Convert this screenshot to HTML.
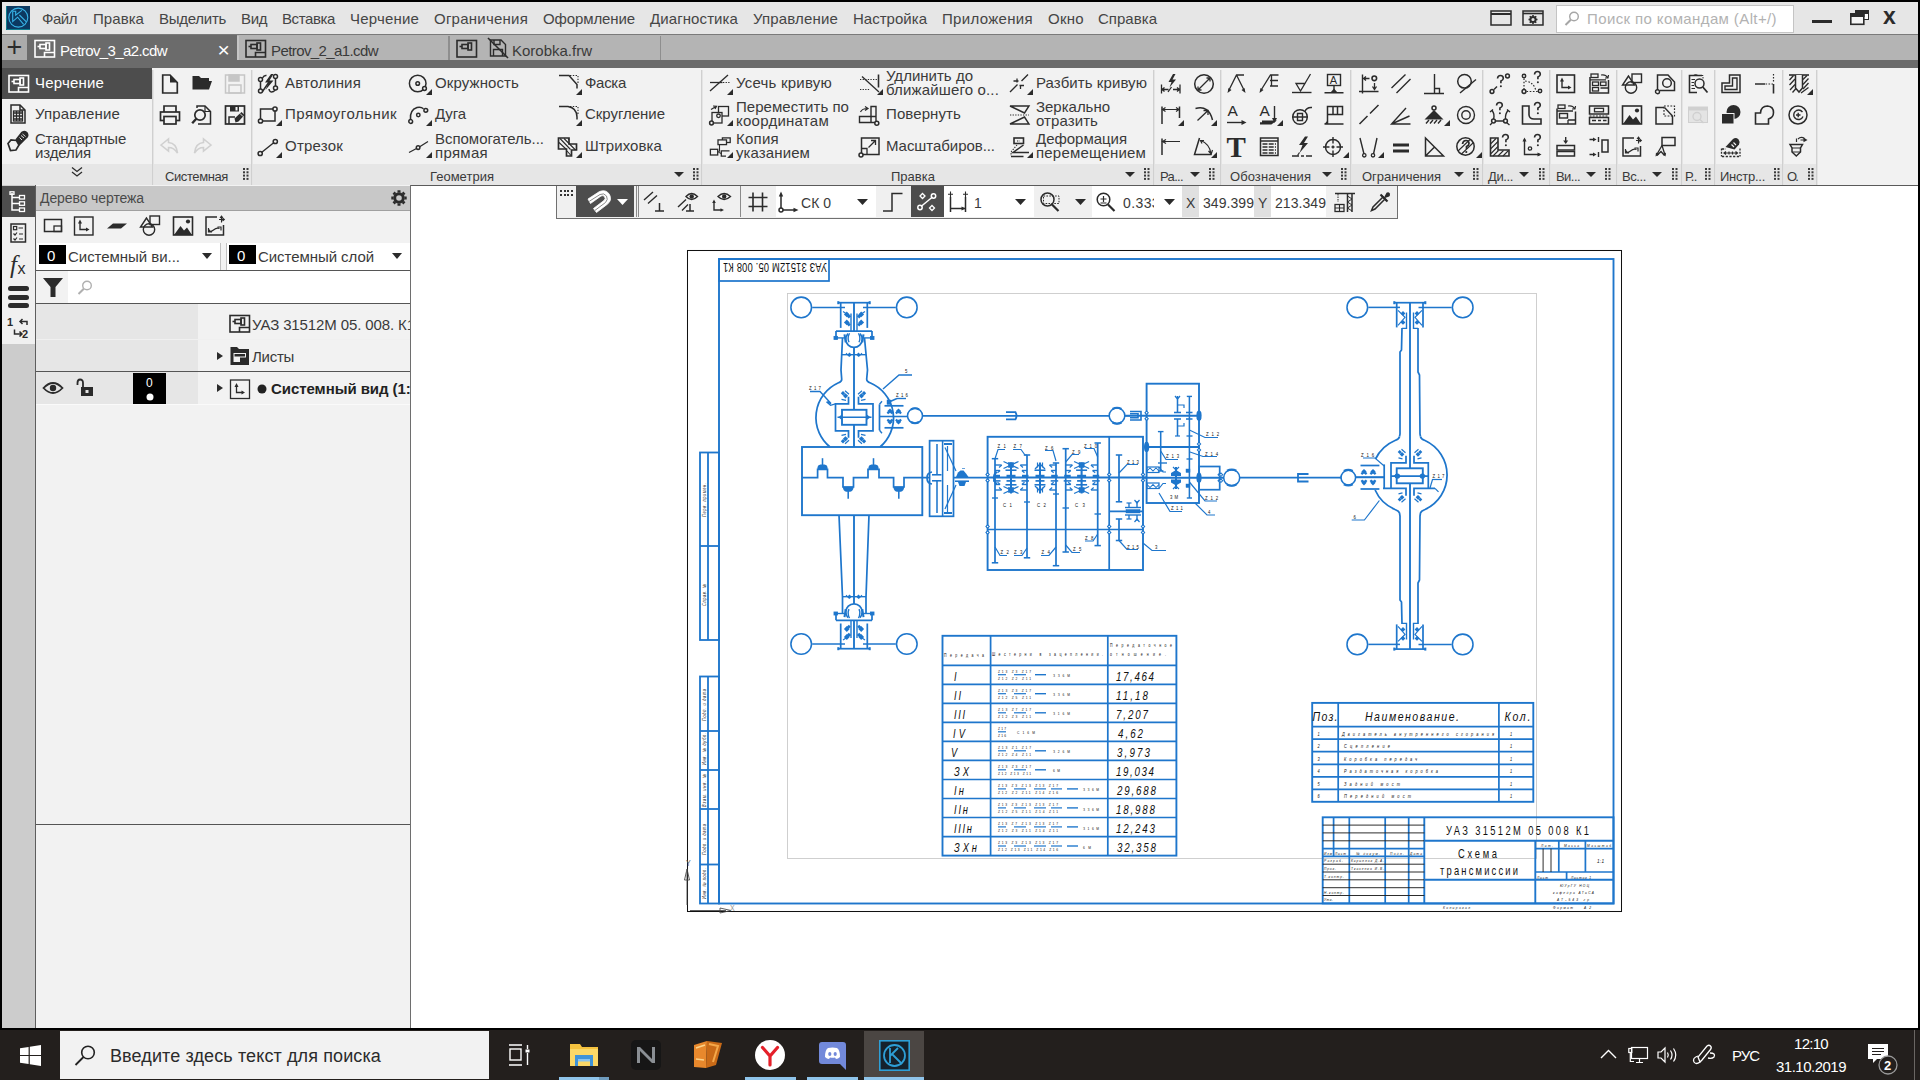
<!DOCTYPE html>
<html lang="ru"><head><meta charset="utf-8"><title>КОМПАС-3D</title>
<style>
html,body{margin:0;padding:0;}
body{width:1920px;height:1080px;overflow:hidden;background:#fff;position:relative;font-family:"Liberation Sans",sans-serif;}
.a{position:absolute;display:block;}
.t{white-space:nowrap;}
svg{overflow:visible;}
.k{fill:none;stroke:#2b2b2b;stroke-width:1.5;}
.kf{fill:#2b2b2b;stroke:none;}
.g{fill:none;stroke:#c4c4c4;stroke-width:1.5;}
.b{fill:none;stroke:#1e78c8;stroke-width:2;}
.b1{fill:none;stroke:#1e78c8;stroke-width:1;}
.bf{fill:#1e78c8;stroke:none;}
</style></head><body>
<div class="a" style="left:0px;top:0px;width:1920px;height:1030px;background:#000;"></div>
<div class="a" style="left:2px;top:2px;width:1916px;height:32px;background:#e6e6e6;"></div>
<div class="a" style="left:2px;top:34px;width:1916px;height:1px;background:#7a7a7a;"></div>
<div class="a" style="left:2px;top:35px;width:1916px;height:25px;background:#b4b4b4;"></div>
<div class="a" style="left:2px;top:60px;width:1916px;height:8px;background:#6b6b6b;"></div>
<div class="a" style="left:2px;top:35px;width:25px;height:25px;background:#ababab;"></div>
<div class="a" style="left:27px;top:35px;width:210px;height:25px;background:#6b6b6b;"></div>
<div class="a" style="left:237px;top:36px;width:2px;height:24px;background:#c6c6c6;"></div>
<div class="a" style="left:448px;top:36px;width:2px;height:24px;background:#8e8e8e;"></div>
<div class="a" style="left:660px;top:36px;width:1px;height:24px;background:#8e8e8e;"></div>
<div class="a" style="left:2px;top:68px;width:1916px;height:117px;background:#f2f2f2;"></div>
<div class="a" style="left:2px;top:164px;width:1814px;height:21px;background:#e6e6e6;"></div>
<div class="a" style="left:2px;top:68px;width:150px;height:31px;background:#4d4d4d;"></div>
<div class="a" style="left:2px;top:185px;width:1916px;height:1px;background:#5a5a5a;"></div>
<div class="a" style="left:152px;top:70px;width:1px;height:115px;background:#d0d0d0;"></div>
<div class="a" style="left:153px;top:70px;width:1px;height:115px;background:#e4e4e4;"></div>
<div class="a" style="left:251px;top:70px;width:1px;height:115px;background:#d0d0d0;"></div>
<div class="a" style="left:252px;top:70px;width:1px;height:115px;background:#e4e4e4;"></div>
<div class="a" style="left:701px;top:70px;width:1px;height:115px;background:#d0d0d0;"></div>
<div class="a" style="left:702px;top:70px;width:1px;height:115px;background:#e4e4e4;"></div>
<div class="a" style="left:1153px;top:70px;width:1px;height:115px;background:#d0d0d0;"></div>
<div class="a" style="left:1154px;top:70px;width:1px;height:115px;background:#e4e4e4;"></div>
<div class="a" style="left:1220px;top:70px;width:1px;height:115px;background:#d0d0d0;"></div>
<div class="a" style="left:1221px;top:70px;width:1px;height:115px;background:#e4e4e4;"></div>
<div class="a" style="left:1350px;top:70px;width:1px;height:115px;background:#d0d0d0;"></div>
<div class="a" style="left:1351px;top:70px;width:1px;height:115px;background:#e4e4e4;"></div>
<div class="a" style="left:1482px;top:70px;width:1px;height:115px;background:#d0d0d0;"></div>
<div class="a" style="left:1483px;top:70px;width:1px;height:115px;background:#e4e4e4;"></div>
<div class="a" style="left:1549px;top:70px;width:1px;height:115px;background:#d0d0d0;"></div>
<div class="a" style="left:1550px;top:70px;width:1px;height:115px;background:#e4e4e4;"></div>
<div class="a" style="left:1616px;top:70px;width:1px;height:115px;background:#d0d0d0;"></div>
<div class="a" style="left:1617px;top:70px;width:1px;height:115px;background:#e4e4e4;"></div>
<div class="a" style="left:1681px;top:70px;width:1px;height:115px;background:#d0d0d0;"></div>
<div class="a" style="left:1682px;top:70px;width:1px;height:115px;background:#e4e4e4;"></div>
<div class="a" style="left:1714px;top:70px;width:1px;height:115px;background:#d0d0d0;"></div>
<div class="a" style="left:1715px;top:70px;width:1px;height:115px;background:#e4e4e4;"></div>
<div class="a" style="left:1782px;top:70px;width:1px;height:115px;background:#d0d0d0;"></div>
<div class="a" style="left:1783px;top:70px;width:1px;height:115px;background:#e4e4e4;"></div>
<div class="a" style="left:1816px;top:70px;width:1px;height:115px;background:#d0d0d0;"></div>
<div class="a" style="left:1817px;top:70px;width:1px;height:115px;background:#e4e4e4;"></div>
<div class="a" style="left:2px;top:186px;width:1916px;height:842px;background:#ffffff;"></div>
<div class="a" style="left:2px;top:185px;width:33px;height:843px;background:#cccccc;"></div>
<div class="a" style="left:2px;top:186px;width:33px;height:31px;background:#4d4d4d;"></div>
<div class="a" style="left:2px;top:217px;width:33px;height:127px;background:#f0f0f0;"></div>
<div class="a" style="left:35px;top:185px;width:1px;height:843px;background:#5e5e5e;"></div>
<div class="a" style="left:36px;top:185px;width:374px;height:843px;background:#f2f2f2;"></div>
<div class="a" style="left:410px;top:185px;width:1px;height:843px;background:#6e6e6e;"></div>
<div class="a" style="left:36px;top:186px;width:374px;height:24px;background:#c8c8c8;"></div>
<div class="a" style="left:36px;top:210px;width:374px;height:1px;background:#a0a0a0;"></div>
<div class="a" style="left:37px;top:243px;width:183px;height:27px;background:#ffffff;"></div>
<div class="a" style="left:227px;top:243px;width:183px;height:27px;background:#ffffff;"></div>
<div class="a" style="left:220px;top:243px;width:1px;height:27px;background:#c0c0c0;"></div>
<div class="a" style="left:226px;top:243px;width:1px;height:27px;background:#c0c0c0;"></div>
<div class="a" style="left:39px;top:245px;width:27px;height:19px;background:#000;"></div>
<div class="a" style="left:229px;top:245px;width:27px;height:19px;background:#000;"></div>
<div class="a" style="left:36px;top:270px;width:374px;height:1px;background:#555555;"></div>
<div class="a" style="left:68px;top:271px;width:342px;height:32px;background:#ffffff;"></div>
<div class="a" style="left:36px;top:303px;width:374px;height:1px;background:#555555;"></div>
<div class="a" style="left:36px;top:304px;width:162px;height:100px;background:#e6e6e6;"></div>
<div class="a" style="left:36px;top:339px;width:374px;height:1px;background:#f0f0f0;"></div>
<div class="a" style="left:36px;top:371px;width:374px;height:1px;background:#555555;"></div>
<div class="a" style="left:133px;top:373px;width:33px;height:31px;background:#000;"></div>
<div class="a" style="left:36px;top:404px;width:374px;height:1px;background:#fafafa;"></div>
<div class="a" style="left:36px;top:824px;width:374px;height:1px;background:#555555;"></div>
<div class="a" style="left:556px;top:186px;width:842px;height:33px;background:#707070;"></div>
<div class="a" style="left:557px;top:186px;width:840px;height:32px;background:#f0f0f0;"></div>
<div class="a" style="left:576px;top:186px;width:58px;height:31px;background:#4d4d4d;"></div>
<div class="a" style="left:636px;top:186px;width:1px;height:31px;background:#8a8a8a;"></div>
<div class="a" style="left:638px;top:186px;width:1px;height:31px;background:#8a8a8a;"></div>
<div class="a" style="left:740px;top:186px;width:1px;height:31px;background:#8a8a8a;"></div>
<div class="a" style="left:776px;top:186px;width:100px;height:31px;background:#ffffff;"></div>
<div class="a" style="left:911px;top:186px;width:33px;height:31px;background:#4d4d4d;"></div>
<div class="a" style="left:944px;top:186px;width:90px;height:31px;background:#ffffff;"></div>
<div class="a" style="left:1092px;top:186px;width:90px;height:31px;background:#ffffff;"></div>
<div class="a" style="left:1182px;top:186px;width:17px;height:31px;background:#e0e0e0;"></div>
<div class="a" style="left:1199px;top:186px;width:55px;height:31px;background:#ffffff;"></div>
<div class="a" style="left:1254px;top:186px;width:17px;height:31px;background:#e0e0e0;"></div>
<div class="a" style="left:1271px;top:186px;width:55px;height:31px;background:#ffffff;"></div>
<span class="a t " style="left:42px;top:9.0px;font-size:15px;line-height:19px;color:#454545;letter-spacing:-0.469px;">Файл</span>
<span class="a t " style="left:93px;top:9.0px;font-size:15px;line-height:19px;color:#454545;letter-spacing:0.055px;">Правка</span>
<span class="a t " style="left:159px;top:9.0px;font-size:15px;line-height:19px;color:#454545;letter-spacing:-0.273px;">Выделить</span>
<span class="a t " style="left:241px;top:9.0px;font-size:15px;line-height:19px;color:#454545;letter-spacing:-0.375px;">Вид</span>
<span class="a t " style="left:282px;top:9.0px;font-size:15px;line-height:19px;color:#454545;letter-spacing:-0.393px;">Вставка</span>
<span class="a t " style="left:350px;top:9.0px;font-size:15px;line-height:19px;color:#454545;letter-spacing:0.186px;">Черчение</span>
<span class="a t " style="left:434px;top:9.0px;font-size:15px;line-height:19px;color:#454545;letter-spacing:0.234px;">Ограничения</span>
<span class="a t " style="left:543px;top:9.0px;font-size:15px;line-height:19px;color:#454545;letter-spacing:-0.111px;">Оформление</span>
<span class="a t " style="left:650px;top:9.0px;font-size:15px;line-height:19px;color:#454545;letter-spacing:0.095px;">Диагностика</span>
<span class="a t " style="left:753px;top:9.0px;font-size:15px;line-height:19px;color:#454545;letter-spacing:0.161px;">Управление</span>
<span class="a t " style="left:853px;top:9.0px;font-size:15px;line-height:19px;color:#454545;letter-spacing:0.017px;">Настройка</span>
<span class="a t " style="left:942px;top:9.0px;font-size:15px;line-height:19px;color:#454545;letter-spacing:0.325px;">Приложения</span>
<span class="a t " style="left:1048px;top:9.0px;font-size:15px;line-height:19px;color:#454545;letter-spacing:0.285px;">Окно</span>
<span class="a t " style="left:1098px;top:9.0px;font-size:15px;line-height:19px;color:#454545;letter-spacing:0.022px;">Справка</span>
<span class="a t " style="left:60px;top:40.5px;font-size:15px;line-height:19px;color:#ffffff;letter-spacing:-0.595px;">Petrov_3_a2.cdw</span>
<span class="a t " style="left:271px;top:40.5px;font-size:15px;line-height:19px;color:#3a3a3a;letter-spacing:-0.595px;">Petrov_2_a1.cdw</span>
<span class="a t " style="left:512px;top:40.5px;font-size:15px;line-height:19px;color:#3a3a3a;letter-spacing:-0.004px;">Korobka.frw</span>
<span class="a t " style="left:35px;top:73.0px;font-size:15px;line-height:19px;color:#ffffff;letter-spacing:0.186px;">Черчение</span>
<span class="a t " style="left:35px;top:104.0px;font-size:15px;line-height:19px;color:#3a3a3a;letter-spacing:0.161px;">Управление</span>
<span class="a t " style="left:35px;top:128.5px;font-size:15px;line-height:19px;color:#3a3a3a;letter-spacing:-0.232px;">Стандартные</span>
<span class="a t " style="left:35px;top:142.5px;font-size:15px;line-height:19px;color:#3a3a3a;letter-spacing:-0.109px;">изделия</span>
<span class="a t " style="left:165px;top:167.5px;font-size:13px;line-height:17px;color:#3a3a3a;letter-spacing:-0.399px;">Системная</span>
<span class="a t " style="left:430px;top:167.5px;font-size:13px;line-height:17px;color:#3a3a3a;letter-spacing:0.014px;">Геометрия</span>
<span class="a t " style="left:891px;top:167.5px;font-size:13px;line-height:17px;color:#3a3a3a;letter-spacing:0.013px;">Правка</span>
<span class="a t " style="left:1160px;top:167.5px;font-size:13px;line-height:17px;color:#3a3a3a;letter-spacing:-0.659px;">Ра...</span>
<span class="a t " style="left:1230px;top:167.5px;font-size:13px;line-height:17px;color:#3a3a3a;letter-spacing:0.071px;">Обозначения</span>
<span class="a t " style="left:1362px;top:167.5px;font-size:13px;line-height:17px;color:#3a3a3a;letter-spacing:-0.021px;">Ограничения</span>
<span class="a t " style="left:1488px;top:167.5px;font-size:13px;line-height:17px;color:#3a3a3a;letter-spacing:-0.378px;">Ди...</span>
<span class="a t " style="left:1556px;top:167.5px;font-size:13px;line-height:17px;color:#3a3a3a;letter-spacing:-0.553px;">Ви...</span>
<span class="a t " style="left:1622px;top:167.5px;font-size:13px;line-height:17px;color:#3a3a3a;letter-spacing:-0.400px;">Вс...</span>
<span class="a t " style="left:1685px;top:167.5px;font-size:13px;line-height:17px;color:#3a3a3a;letter-spacing:-0.479px;">Р..</span>
<span class="a t " style="left:1720px;top:167.5px;font-size:13px;line-height:17px;color:#3a3a3a;letter-spacing:-0.254px;">Инстр...</span>
<span class="a t " style="left:1787px;top:167.5px;font-size:13px;line-height:17px;color:#3a3a3a;letter-spacing:-1.859px;">О.</span>
<span class="a t " style="left:285px;top:72.5px;font-size:15px;line-height:19px;color:#3a3a3a;letter-spacing:0.193px;">Автолиния</span>
<span class="a t " style="left:285px;top:103.5px;font-size:15px;line-height:19px;color:#3a3a3a;letter-spacing:0.462px;">Прямоугольник</span>
<span class="a t " style="left:285px;top:135.5px;font-size:15px;line-height:19px;color:#3a3a3a;letter-spacing:0.212px;">Отрезок</span>
<span class="a t " style="left:435px;top:72.5px;font-size:15px;line-height:19px;color:#3a3a3a;letter-spacing:0.108px;">Окружность</span>
<span class="a t " style="left:435px;top:103.5px;font-size:15px;line-height:19px;color:#3a3a3a;letter-spacing:-0.117px;">Дуга</span>
<span class="a t " style="left:435px;top:128.5px;font-size:15px;line-height:19px;color:#3a3a3a;letter-spacing:-0.027px;">Вспомогатель...</span>
<span class="a t " style="left:435px;top:142.5px;font-size:15px;line-height:19px;color:#3a3a3a;letter-spacing:0.299px;">прямая</span>
<span class="a t " style="left:585px;top:72.5px;font-size:15px;line-height:19px;color:#3a3a3a;letter-spacing:-0.297px;">Фаска</span>
<span class="a t " style="left:585px;top:103.5px;font-size:15px;line-height:19px;color:#3a3a3a;letter-spacing:-0.030px;">Скругление</span>
<span class="a t " style="left:585px;top:135.5px;font-size:15px;line-height:19px;color:#3a3a3a;letter-spacing:0.087px;">Штриховка</span>
<span class="a t " style="left:736px;top:72.5px;font-size:15px;line-height:19px;color:#3a3a3a;letter-spacing:0.221px;">Усечь кривую</span>
<span class="a t " style="left:736px;top:97.0px;font-size:15px;line-height:19px;color:#3a3a3a;letter-spacing:0.032px;">Переместить по</span>
<span class="a t " style="left:736px;top:110.5px;font-size:15px;line-height:19px;color:#3a3a3a;letter-spacing:0.254px;">координатам</span>
<span class="a t " style="left:736px;top:128.5px;font-size:15px;line-height:19px;color:#3a3a3a;letter-spacing:0.259px;">Копия</span>
<span class="a t " style="left:736px;top:142.5px;font-size:15px;line-height:19px;color:#3a3a3a;letter-spacing:0.101px;">указанием</span>
<span class="a t " style="left:886px;top:65.5px;font-size:15px;line-height:19px;color:#3a3a3a;letter-spacing:0.014px;">Удлинить до</span>
<span class="a t " style="left:886px;top:79.5px;font-size:15px;line-height:19px;color:#3a3a3a;letter-spacing:0.154px;">ближайшего о...</span>
<span class="a t " style="left:886px;top:103.5px;font-size:15px;line-height:19px;color:#3a3a3a;letter-spacing:0.102px;">Повернуть</span>
<span class="a t " style="left:886px;top:135.5px;font-size:15px;line-height:19px;color:#3a3a3a;letter-spacing:-0.052px;">Масштабиров...</span>
<span class="a t " style="left:1036px;top:72.5px;font-size:15px;line-height:19px;color:#3a3a3a;letter-spacing:0.080px;">Разбить кривую</span>
<span class="a t " style="left:1036px;top:97.0px;font-size:15px;line-height:19px;color:#3a3a3a;letter-spacing:-0.019px;">Зеркально</span>
<span class="a t " style="left:1036px;top:110.5px;font-size:15px;line-height:19px;color:#3a3a3a;letter-spacing:0.082px;">отразить</span>
<span class="a t " style="left:1036px;top:128.5px;font-size:15px;line-height:19px;color:#3a3a3a;letter-spacing:-0.028px;">Деформация</span>
<span class="a t " style="left:1036px;top:142.5px;font-size:15px;line-height:19px;color:#3a3a3a;letter-spacing:0.197px;">перемещением</span>
<span class="a t " style="left:40px;top:189.0px;font-size:14px;line-height:18px;color:#4a4a4a;letter-spacing:-0.096px;">Дерево чертежа</span>
<span class="a t " style="left:47px;top:245.5px;font-size:15px;line-height:19px;color:#fff;">0</span>
<span class="a t " style="left:237px;top:245.5px;font-size:15px;line-height:19px;color:#fff;">0</span>
<span class="a t " style="left:68px;top:246.5px;font-size:15px;line-height:19px;color:#3a3a3a;letter-spacing:-0.035px;">Системный ви...</span>
<span class="a t " style="left:258px;top:246.5px;font-size:15px;line-height:19px;color:#3a3a3a;letter-spacing:-0.058px;">Системный слой</span>
<div class="a" style="left:36px;top:304px;width:374px;height:100px;overflow:hidden">
<span class="a t " style="left:216px;top:10.5px;font-size:15px;line-height:19px;color:#3a3a3a;letter-spacing:-0.112px;">УАЗ 31512М 05. 008. К1</span>
<span class="a t " style="left:216px;top:43.0px;font-size:15px;line-height:19px;color:#3a3a3a;letter-spacing:-0.275px;">Листы</span>
<span class="a t " style="left:235px;top:75.0px;font-size:15px;line-height:19px;color:#222;letter-spacing:-0.055px;font-weight:bold;">Системный вид (1:1)</span>
</div>
<span class="a t " style="left:146px;top:375.0px;font-size:12px;line-height:16px;color:#fff;">0</span>
<span class="a t " style="left:801px;top:193.5px;font-size:14px;line-height:18px;color:#3a3a3a;letter-spacing:0.016px;">СК 0</span>
<span class="a t " style="left:974px;top:193.5px;font-size:14px;line-height:18px;color:#3a3a3a;">1</span>
<div class="a" style="left:1123px;top:186px;width:31px;height:31px;overflow:hidden">
<span class="a t " style="left:0px;top:7.5px;font-size:14px;line-height:18px;color:#3a3a3a;letter-spacing:0.397px;">0.333</span>
</div>
<span class="a t " style="left:1186px;top:193.5px;font-size:14px;line-height:18px;color:#3a3a3a;">X</span>
<span class="a t " style="left:1203px;top:193.5px;font-size:14px;line-height:18px;color:#3a3a3a;letter-spacing:0.060px;">349.399</span>
<span class="a t " style="left:1258px;top:193.5px;font-size:14px;line-height:18px;color:#3a3a3a;">Y</span>
<span class="a t " style="left:1275px;top:193.5px;font-size:14px;line-height:18px;color:#3a3a3a;letter-spacing:0.060px;">213.349</span>
<svg class="a" style="left:6px;top:6px" width="24" height="24" viewBox="0 0 24 24"><rect width="24" height="24" fill="#0c3961"/><path d="M0.5 0 V23.5 H24" fill="none" stroke="#0f7c8c" stroke-width="1"/><circle cx="12.3" cy="11.6" r="9.5" fill="none" stroke="#38b4e8" stroke-width="1.1"/><path d="M6.7 5.3 V15.6 L11.6 11.2 L17.6 18.3 M6.7 5.3 H9.7 V9.2 L15.9 4.4 M13.4 9 L20.4 15.8" fill="none" stroke="#38b4e8" stroke-width="1.1"/></svg>
<svg class="a" style="left:1490.0px;top:7.0px" width="22" height="22" viewBox="0 0 22 22" fill="none" stroke="#2b2b2b" stroke-width="1.5"><rect x="1" y="4" width="20" height="14"/><path d="M1 7 H21" stroke-width="2"/></svg>
<svg class="a" style="left:1522.0px;top:7.0px" width="22" height="22" viewBox="0 0 22 22" fill="none" stroke="#2b2b2b" stroke-width="1.5"><rect x="1" y="4" width="20" height="14"/><path d="M1 6.5 H21" stroke-width="1.6"/><circle cx="11" cy="12.5" r="2.6" stroke-width="2"/><path d="M11 8 V9.5 M11 15.5 V17 M6.5 12.5 H8 M14 12.5 H15.5 M7.8 9.3 L8.9 10.4 M13.1 14.6 L14.2 15.7 M14.2 9.3 L13.1 10.4 M8.9 14.6 L7.8 15.7" stroke-width="1.6"/></svg>
<div class="a" style="left:1556px;top:5px;width:238px;height:28px;background:#ffffff;border:1px solid #c4c4c4;box-sizing:border-box;"></div>
<span class="a t " style="left:1587px;top:9.0px;font-size:15px;line-height:19px;color:#b2b2b2;letter-spacing:0.384px;">Поиск по командам (Alt+/)</span>
<svg class="a" style="left:1561.0px;top:8.0px" width="22" height="22" viewBox="0 0 22 22" fill="none" stroke="#a6a6a6" stroke-width="1.4"><circle cx="13" cy="8.5" r="4.3"/><path d="M9.8 11.8 L4.5 17" stroke-width="2"/></svg>
<div class="a" style="left:1812px;top:20px;width:20px;height:3px;background:#2b2b2b;"></div>
<svg class="a" style="left:1850px;top:10px" width="20" height="16"><rect x="5" y="0" width="14" height="10" fill="#2b2b2b"/><rect x="6" y="4" width="12" height="5" fill="#fff"/><rect x="0.8" y="3.8" width="13" height="10.5" fill="#f4f4f4" stroke="#2b2b2b" stroke-width="1.6"/><rect x="0" y="3" width="14.6" height="4" fill="#2b2b2b"/></svg>
<span class="a t " style="left:1883px;top:3.0px;font-size:23px;line-height:27px;color:#2b2b2b;font-weight:bold;">x</span>
<span class="a t " style="left:6.5px;top:31.5px;font-size:27px;line-height:31px;color:#2b2b2b;">+</span>
<svg class="a" style="left:34.0px;top:37.5px" width="22" height="22" viewBox="0 0 22 22" fill="none" stroke="#ffffff" stroke-width="1.6"><rect x="1" y="2.5" width="19.5" height="16.5"/><path d="M10.5 19 V14.5 H20.5"/><rect x="6" y="6.5" width="6" height="4"/><rect x="12" y="5" width="3.5" height="7"/><path d="M3.5 8.5 H6"/></svg>
<svg class="a" style="left:245.0px;top:37.5px" width="22" height="22" viewBox="0 0 22 22" fill="none" stroke="#2b2b2b" stroke-width="1.6"><rect x="1" y="2.5" width="19.5" height="16.5"/><path d="M10.5 19 V14.5 H20.5"/><rect x="6" y="6.5" width="6" height="4"/><rect x="12" y="5" width="3.5" height="7"/><path d="M3.5 8.5 H6"/></svg>
<svg class="a" style="left:456.0px;top:37.5px" width="22" height="22" viewBox="0 0 22 22" fill="none" stroke="#2b2b2b" stroke-width="1.6"><rect x="1" y="2.5" width="19.5" height="16.5"/><rect x="6" y="6.5" width="6" height="4"/><rect x="12" y="5" width="3.5" height="7"/><path d="M3.5 8.5 H6"/></svg>
<span class="a t " style="left:217.5px;top:37.0px;font-size:21px;line-height:25px;color:#ffffff;">×</span>
<svg class="a" style="left:487.0px;top:37.0px" width="22" height="22" viewBox="0 0 22 22" fill="none" stroke="#2b2b2b" stroke-width="1.4"><path d="M3.5 3 H14 L18.5 7.5 V19 H3.5Z"/><path d="M7 3 V7.5 H13 V3 M6.5 19 V12.5 H15.5 V19"/><path d="M1 1 L21 21" stroke-width="1.6"/></svg>
<svg class="a" style="left:8.0px;top:73.0px" width="22" height="22" viewBox="0 0 22 22" fill="none" stroke="#ffffff" stroke-width="1.6"><rect x="1" y="2.5" width="19.5" height="16.5"/><path d="M10.5 19 V14.5 H20.5"/><rect x="6" y="6.5" width="6" height="4"/><rect x="12" y="5" width="3.5" height="7"/><path d="M3.5 8.5 H6"/></svg>
<svg class="a" style="left:7.0px;top:103.0px" width="22" height="22" viewBox="0 0 22 22" fill="none" stroke="#2b2b2b" stroke-width="1.5"><path d="M4 2 H13 L18 7 V20 H4Z"/><path d="M13 2 V7 H18"/><path d="M6.5 10 H15.5 M6.5 13 H15.5 M6.5 16 H15.5 M9.5 8 V18 M12.5 8 V18" stroke-width="1.3"/><rect x="6.5" y="8" width="9" height="10" stroke-width="1.3"/></svg>
<svg class="a" style="left:6px;top:128px" width="24" height="25" viewBox="0 0 24 25" fill="none" stroke="#2b2b2b" stroke-width="1.7"><path d="M2 15.5 L5 12 L10.5 12.5 L13 17 L10 22 L4.5 22.5 Z" fill="#f2f2f2"/><path d="M10 12 L16 4.5 Q19 2.5 21 5 Q22.5 8 20.5 9.5 L13 17" fill="#2b2b2b"/><path d="M15 7.5 L18 10 M16.5 6 L19.5 8.5 M13.5 9.5 L16 12" stroke="#f2f2f2" stroke-width="0.9"/></svg>
<svg class="a" style="left:71px;top:166px" width="12" height="12" fill="none" stroke="#2b2b2b" stroke-width="1.3"><path d="M1 1.5 L6 5.5 L11 1.5 M1 6 L6 10 L11 6"/></svg>
<svg class="a" style="left:158.5px;top:72.5px" width="22" height="22" viewBox="0 0 22 22" fill="none" stroke="#2b2b2b" stroke-width="1.5"><path d="M3.7 2 H11 L18.3 9.5 V20 H3.7Z" stroke-width="1.7"/><path d="M11 2 L18.3 9.5 H11Z" fill="#2b2b2b" stroke="none"/></svg>
<svg class="a" style="left:190.5px;top:72.5px" width="22" height="22" viewBox="0 0 22 22" fill="none" stroke="#2b2b2b" stroke-width="1.5"><path d="M1.5 3 H8 L10 5 H18 V8 H21 L18 16.5 H1.5Z" fill="#2b2b2b" stroke="none"/><path d="M3 8.8 H6" stroke="#f2f2f2" stroke-width="0"/></svg>
<svg class="a" style="left:223.5px;top:72.5px" width="22" height="22" viewBox="0 0 22 22" fill="none" stroke="#c6c6c6" stroke-width="1.5"><rect x="1.5" y="2" width="19" height="18"/><rect x="5" y="2" width="10" height="6" fill="#c6c6c6"/><rect x="5" y="12" width="12" height="8"/></svg>
<svg class="a" style="left:158.5px;top:103.5px" width="22" height="22" viewBox="0 0 22 22" fill="none" stroke="#2b2b2b" stroke-width="1.7"><path d="M5 8 V2 H17 V8"/><rect x="1.5" y="8" width="19" height="8.5"/><rect x="5" y="12.5" width="12" height="7.5" fill="#f2f2f2"/></svg>
<svg class="a" style="left:190.5px;top:103.5px" width="22" height="22" viewBox="0 0 22 22" fill="none" stroke="#2b2b2b" stroke-width="1.5"><path d="M6 4 V2 H14 L19.5 7.5 V20 H7" /><path d="M14 2 V7.5 H19.5" stroke-width="1.2"/><circle cx="9" cy="11" r="5.2" fill="#f2f2f2" stroke-width="1.7"/><path d="M5.3 14.8 L1.2 19.3" stroke-width="2.4"/></svg>
<svg class="a" style="left:223.5px;top:103.5px" width="22" height="22" viewBox="0 0 22 22" fill="none" stroke="#2b2b2b" stroke-width="1.5"><rect x="1.5" y="2" width="19" height="18" stroke-width="1.7"/><rect x="6" y="2" width="9" height="5.5" fill="#2b2b2b" stroke="none"/><rect x="11.5" y="3" width="2" height="3.5" fill="#f2f2f2" stroke="none"/><path d="M5 20 V13 H11"/><path d="M11.5 18.5 L10.5 14.5 L17.5 8 L20.5 11 L14.5 17.5Z" fill="#2b2b2b" stroke="none"/><path d="M16 9.5 L19 12.5" stroke="#f2f2f2" stroke-width="0.9"/></svg>
<svg class="a" style="left:158.5px;top:135.5px" width="22" height="22" viewBox="0 0 22 22" fill="none" stroke="#d0d0d0" stroke-width="1.6"><path d="M2 9 L9.5 3 V6.5 Q17.5 7 18.5 17 Q15 11.5 9.5 11.5 V15Z"/></svg>
<svg class="a" style="left:190.5px;top:135.5px" width="22" height="22" viewBox="0 0 22 22" fill="none" stroke="#d0d0d0" stroke-width="1.6"><path d="M20 9 L12.5 3 V6.5 Q4.5 7 3.5 17 Q7 11.5 12.5 11.5 V15Z"/></svg>
<svg class="a" style="left:243px;top:168px" width="6" height="13"><rect x="0.0" y="0.0" width="2" height="2" fill="#3a3a3a"/><rect x="0.0" y="3.3" width="2" height="2" fill="#3a3a3a"/><rect x="0.0" y="6.6" width="2" height="2" fill="#3a3a3a"/><rect x="0.0" y="9.9" width="2" height="2" fill="#3a3a3a"/><rect x="3.5" y="0.0" width="2" height="2" fill="#3a3a3a"/><rect x="3.5" y="3.3" width="2" height="2" fill="#3a3a3a"/><rect x="3.5" y="6.6" width="2" height="2" fill="#3a3a3a"/><rect x="3.5" y="9.9" width="2" height="2" fill="#3a3a3a"/></svg>
<svg class="a" style="left:257.0px;top:72.5px" width="22" height="22" viewBox="0 0 22 22" fill="none" stroke="#2b2b2b" stroke-width="1.5"><circle cx="3.5" cy="6.5" r="2"/><circle cx="3.5" cy="18" r="2"/><circle cx="18.5" cy="3.5" r="2"/><circle cx="18.5" cy="15" r="2"/><path d="M3.5 8.5 V16 M18.5 5.5 V13 M5.5 5 Q7 2 9.5 2.5 M5.5 18.5 L12 9 M12 16 Q12.5 20 16.5 18.5 Q18 17.5 18 17"/><path d="M14 1 L8 9.5 H11.5 L8.5 17 L16.5 7.5 H12.5 L16.5 1Z" fill="#2b2b2b" stroke="none"/></svg>
<svg class="a" style="left:257.0px;top:103.5px" width="22" height="22" viewBox="0 0 22 22" fill="none" stroke="#2b2b2b" stroke-width="1.5"><rect x="3.5" y="5" width="14.5" height="12"/><circle cx="18" cy="5" r="2.1" fill="#f2f2f2"/><circle cx="3.5" cy="17" r="2.1" fill="#f2f2f2"/></svg>
<svg class="a" style="left:276px;top:120px" width="6" height="6"><path d="M0 6 H6 V0Z" fill="#2b2b2b"/></svg>
<svg class="a" style="left:257.0px;top:135.5px" width="22" height="22" viewBox="0 0 22 22" fill="none" stroke="#2b2b2b" stroke-width="1.5"><path d="M4.5 16.5 L17 6.5"/><circle cx="18.3" cy="5.5" r="2.1"/><circle cx="3.2" cy="17.5" r="2.1"/></svg>
<svg class="a" style="left:276px;top:152px" width="6" height="6"><path d="M0 6 H6 V0Z" fill="#2b2b2b"/></svg>
<svg class="a" style="left:407.0px;top:72.5px" width="22" height="22" viewBox="0 0 22 22" fill="none" stroke="#2b2b2b" stroke-width="1.5"><circle cx="10.7" cy="10.5" r="8.3"/><circle cx="10.7" cy="10.5" r="1.8"/><circle cx="17.5" cy="15.5" r="1.9" fill="#f2f2f2"/></svg>
<svg class="a" style="left:426px;top:89px" width="6" height="6"><path d="M0 6 H6 V0Z" fill="#2b2b2b"/></svg>
<svg class="a" style="left:407.5px;top:103.5px" width="22" height="22" viewBox="0 0 22 22" fill="none" stroke="#2b2b2b" stroke-width="1.5"><path d="M2.5 15.5 Q1.5 6 9 3.5 Q13 2.5 15.5 4.8"/><circle cx="2.7" cy="17.5" r="1.9"/><circle cx="17.8" cy="6.3" r="1.9"/><circle cx="10.3" cy="11" r="1.7"/></svg>
<svg class="a" style="left:426px;top:120px" width="6" height="6"><path d="M0 6 H6 V0Z" fill="#2b2b2b"/></svg>
<svg class="a" style="left:407.5px;top:135.5px" width="22" height="22" viewBox="0 0 22 22" fill="none" stroke="#2b2b2b" stroke-width="1.5"><path d="M1 16.5 L8.5 12.5 M11.7 10.7 L20 5.5" stroke-width="1.3"/><circle cx="10.1" cy="11.6" r="1.8"/></svg>
<svg class="a" style="left:426px;top:152px" width="6" height="6"><path d="M0 6 H6 V0Z" fill="#2b2b2b"/></svg>
<svg class="a" style="left:558.0px;top:72.5px" width="22" height="22" viewBox="0 0 22 22" fill="none" stroke="#2b2b2b" stroke-width="1.5"><path d="M1 2.5 H11 L19 11.5 V15.5"/><path d="M12 2.5 H20 V10" stroke-width="1.1" stroke-dasharray="1.4 1.4"/></svg>
<svg class="a" style="left:576px;top:89px" width="6" height="6"><path d="M0 6 H6 V0Z" fill="#2b2b2b"/></svg>
<svg class="a" style="left:558.0px;top:103.5px" width="22" height="22" viewBox="0 0 22 22" fill="none" stroke="#2b2b2b" stroke-width="1.5"><path d="M1 2.5 H10 Q19 4 19 13 V15.5"/><path d="M12 2.5 H20 V10" stroke-width="1.1" stroke-dasharray="1.4 1.4"/></svg>
<svg class="a" style="left:576px;top:120px" width="6" height="6"><path d="M0 6 H6 V0Z" fill="#2b2b2b"/></svg>
<svg class="a" style="left:557.0px;top:135.5px" width="22" height="22" viewBox="0 0 22 22" fill="none" stroke="#2b2b2b" stroke-width="1.5"><path d="M1.5 2 H12 V8 H19.5 V14 H14.5 V20 H9.5 V13 H1.5Z" stroke-width="1.7"/><path d="M3 2.5 L13.5 13.5 M7 2.5 L18.5 14 M2 6.5 L9 13 M10 15 L14 19.5 M11 2.5 L12 4" stroke-width="1.1"/></svg>
<svg class="a" style="left:576px;top:152px" width="6" height="6"><path d="M0 6 H6 V0Z" fill="#2b2b2b"/></svg>
<svg class="a" style="left:674.0px;top:171.8px" width="10" height="5"><path d="M0 0 H10 L5.0 5Z" fill="#2b2b2b"/></svg>
<svg class="a" style="left:693px;top:168px" width="6" height="13"><rect x="0.0" y="0.0" width="2" height="2" fill="#3a3a3a"/><rect x="0.0" y="3.3" width="2" height="2" fill="#3a3a3a"/><rect x="0.0" y="6.6" width="2" height="2" fill="#3a3a3a"/><rect x="0.0" y="9.9" width="2" height="2" fill="#3a3a3a"/><rect x="3.5" y="0.0" width="2" height="2" fill="#3a3a3a"/><rect x="3.5" y="3.3" width="2" height="2" fill="#3a3a3a"/><rect x="3.5" y="6.6" width="2" height="2" fill="#3a3a3a"/><rect x="3.5" y="9.9" width="2" height="2" fill="#3a3a3a"/></svg>
<svg class="a" style="left:708.5px;top:72.5px" width="22" height="22" viewBox="0 0 22 22" fill="none" stroke="#2b2b2b" stroke-width="1.5"><path d="M1 18 L19 2" stroke-width="1.3"/><path d="M1 9.5 H13.5" stroke-width="1.3"/><path d="M14 9.5 H21" stroke-width="1.1" stroke-dasharray="1.3 1.3"/></svg>
<svg class="a" style="left:727px;top:89px" width="6" height="6"><path d="M0 6 H6 V0Z" fill="#2b2b2b"/></svg>
<svg class="a" style="left:708.5px;top:103.5px" width="22" height="22" viewBox="0 0 22 22" fill="none" stroke="#2b2b2b" stroke-width="1.5"><rect x="9.5" y="2.5" width="10" height="9.5" stroke-width="1.3"/><rect x="3" y="8.5" width="10" height="10.5" fill="#f2f2f2" stroke-width="1.3"/><circle cx="9.5" cy="11.8" r="1.8" stroke-width="1.3"/><circle cx="2.5" cy="19" r="1.9" fill="#f2f2f2"/><path d="M2 5.5 L7 2.5 M4 2 L7.5 2.2 L6 5" stroke-width="1.2"/></svg>
<svg class="a" style="left:727px;top:120px" width="6" height="6"><path d="M0 6 H6 V0Z" fill="#2b2b2b"/></svg>
<svg class="a" style="left:708.5px;top:135.5px" width="22" height="22" viewBox="0 0 22 22" fill="none" stroke="#2b2b2b" stroke-width="1.5"><rect x="13.4" y="1.9" width="7.8" height="4.6" stroke-width="1.3"/><rect x="9" y="3.9" width="8.5" height="4.7" fill="#f2f2f2" stroke-width="1.3"/><rect x="1.4" y="13.3" width="7.3" height="5.7" stroke-width="1.3"/><path d="M20.5 14.9 H12.3 V20.1 H17" stroke-width="1.3"/><path d="M8.7 16.2 Q10.5 16.2 10.5 14 V9 M10.5 16.2 Q10.8 17.5 12.3 17.5" stroke-width="1.1"/></svg>
<svg class="a" style="left:727px;top:152px" width="6" height="6"><path d="M0 6 H6 V0Z" fill="#2b2b2b"/></svg>
<svg class="a" style="left:859.0px;top:72.5px" width="22" height="22" viewBox="0 0 22 22" fill="none" stroke="#2b2b2b" stroke-width="1.5"><path d="M3 3.5 L20 19" stroke-width="1.3"/><path d="M19.5 1.5 V14.5" stroke-width="1.6"/><path d="M1 6.5 H18 M1 16.5 H11" stroke-width="1.1" stroke-dasharray="1.3 1.3"/></svg>
<svg class="a" style="left:877px;top:89px" width="6" height="6"><path d="M0 6 H6 V0Z" fill="#2b2b2b"/></svg>
<svg class="a" style="left:857.5px;top:103.5px" width="22" height="22" viewBox="0 0 22 22" fill="none" stroke="#2b2b2b" stroke-width="1.5"><path d="M13 2.5 H18 V18.5 H1.5 V12.5 H13Z" stroke-width="1.4"/><path d="M13 12.5 V18.5 M13 12.5 H18" stroke-width="1.4"/><circle cx="18.8" cy="19.3" r="2" fill="#f2f2f2"/><path d="M2.5 8 Q4 4.5 9.5 4.5 M7 2.5 L10 4.5 L7 6.5" stroke-width="1.2"/></svg>
<svg class="a" style="left:859.0px;top:135.5px" width="22" height="22" viewBox="0 0 22 22" fill="none" stroke="#2b2b2b" stroke-width="1.5"><rect x="2.5" y="2" width="17.5" height="16.5"/><path d="M2.5 12.5 H8 V18.5" stroke-width="1.3"/><circle cx="2" cy="19" r="2" fill="#f2f2f2"/><path d="M9.5 11.5 L16 5 M12 4.5 H16.5 V9" stroke-width="1.3"/></svg>
<svg class="a" style="left:1009.0px;top:72.5px" width="22" height="22" viewBox="0 0 22 22" fill="none" stroke="#2b2b2b" stroke-width="1.5"><path d="M1 19 L8.5 11.5 M12.5 8 L19 1.5" stroke-width="1.4"/><path d="M4.5 8 H9.5 M8 5.5 V9.5 M10.5 12.5 H15 M11.5 12.5 V16" stroke-width="1.3"/></svg>
<svg class="a" style="left:1027px;top:89px" width="6" height="6"><path d="M0 6 H6 V0Z" fill="#2b2b2b"/></svg>
<svg class="a" style="left:1008.5px;top:103.5px" width="22" height="22" viewBox="0 0 22 22" fill="none" stroke="#2b2b2b" stroke-width="1.5"><path d="M1 2 H20 L15.5 9Z M1 20 H20 L15.5 13Z" stroke-width="1.4"/><path d="M1 11 H20" stroke-width="1.1" stroke-dasharray="1.3 1.3"/></svg>
<svg class="a" style="left:1009.0px;top:135.5px" width="22" height="22" viewBox="0 0 22 22" fill="none" stroke="#2b2b2b" stroke-width="1.5"><rect x="5" y="2" width="9.5" height="5.5" stroke-width="1.6"/><path d="M14.5 9 L4 16.5 H20 M2 20.5 H14.5" stroke-width="1.4"/><path d="M8 9 L2 16 V20 M8 5 H11" stroke-width="1.1" stroke-dasharray="1.3 1.3"/></svg>
<svg class="a" style="left:1027px;top:152px" width="6" height="6"><path d="M0 6 H6 V0Z" fill="#2b2b2b"/></svg>
<svg class="a" style="left:1125.0px;top:171.8px" width="10" height="5"><path d="M0 0 H10 L5.0 5Z" fill="#2b2b2b"/></svg>
<svg class="a" style="left:1144px;top:168px" width="6" height="13"><rect x="0.0" y="0.0" width="2" height="2" fill="#3a3a3a"/><rect x="0.0" y="3.3" width="2" height="2" fill="#3a3a3a"/><rect x="0.0" y="6.6" width="2" height="2" fill="#3a3a3a"/><rect x="0.0" y="9.9" width="2" height="2" fill="#3a3a3a"/><rect x="3.5" y="0.0" width="2" height="2" fill="#3a3a3a"/><rect x="3.5" y="3.3" width="2" height="2" fill="#3a3a3a"/><rect x="3.5" y="6.6" width="2" height="2" fill="#3a3a3a"/><rect x="3.5" y="9.9" width="2" height="2" fill="#3a3a3a"/></svg>
<svg class="a" style="left:1159.5px;top:72.5px" width="22" height="22" viewBox="0 0 22 22" fill="none" stroke="#2b2b2b" stroke-width="1.5"><path d="M1.5 11.5 V20.5 M20 11.5 V20.5 M2 16.5 H8.5 M13 16.5 H19.5 M4.5 14.5 L2 16.5 L4.5 18.5 M17 14.5 L19.5 16.5 L17 18.5 M8 19 L11.5 14" stroke-width="1.3"/><path d="M13 1 L8.5 9 H11.5 L9.5 14.5 L16 6.5 H12.5 L15.5 1Z" fill="#2b2b2b" stroke="none"/></svg>
<svg class="a" style="left:1192.5px;top:72.5px" width="22" height="22" viewBox="0 0 22 22" fill="none" stroke="#2b2b2b" stroke-width="1.5"><circle cx="11" cy="11" r="9.3"/><path d="M5 17 L17 5 M5 13.5 V17 H8.5 M13.5 5 H17 V8.5" stroke-width="1.3"/></svg>
<svg class="a" style="left:1159.5px;top:103.5px" width="22" height="22" viewBox="0 0 22 22" fill="none" stroke="#2b2b2b" stroke-width="1.5"><path d="M2 2.5 V20 M19.5 2.5 V14" stroke-width="1.5"/><path d="M2.5 5.5 H19 M5.5 3.5 L2.5 5.5 L5.5 7.5 M16 3.5 L19 5.5 L16 7.5" stroke-width="1.2"/></svg>
<svg class="a" style="left:1178px;top:120px" width="6" height="6"><path d="M0 6 H6 V0Z" fill="#2b2b2b"/></svg>
<svg class="a" style="left:1193.0px;top:103.5px" width="22" height="22" viewBox="0 0 22 22" fill="none" stroke="#2b2b2b" stroke-width="1.5"><path d="M2.5 4.5 Q16 1 19.5 16"/><path d="M4.5 16.5 L15 6.5 M10.5 6.5 H15 V11" stroke-width="1.3"/></svg>
<svg class="a" style="left:1211px;top:120px" width="6" height="6"><path d="M0 6 H6 V0Z" fill="#2b2b2b"/></svg>
<svg class="a" style="left:1159.5px;top:135.5px" width="22" height="22" viewBox="0 0 22 22" fill="none" stroke="#2b2b2b" stroke-width="1.5"><path d="M2 2.5 V19" stroke-width="1.5"/><path d="M2.5 5.5 H20 M6 3.5 L2.5 5.5 L6 7.5" stroke-width="1.2"/></svg>
<svg class="a" style="left:1193.0px;top:135.5px" width="22" height="22" viewBox="0 0 22 22" fill="none" stroke="#2b2b2b" stroke-width="1.5"><path d="M6.5 2 L1.5 18.5 H18.5"/><path d="M8 4.5 Q16.5 8 18 17.5 M11 4.5 L7.5 4.5 L9 7.5 M15.5 15 L18.2 18 L19.5 14" stroke-width="1.2"/></svg>
<svg class="a" style="left:1211px;top:152px" width="6" height="6"><path d="M0 6 H6 V0Z" fill="#2b2b2b"/></svg>
<svg class="a" style="left:1190.0px;top:171.8px" width="10" height="5"><path d="M0 0 H10 L5.0 5Z" fill="#2b2b2b"/></svg>
<svg class="a" style="left:1209px;top:168px" width="6" height="13"><rect x="0.0" y="0.0" width="2" height="2" fill="#3a3a3a"/><rect x="0.0" y="3.3" width="2" height="2" fill="#3a3a3a"/><rect x="0.0" y="6.6" width="2" height="2" fill="#3a3a3a"/><rect x="0.0" y="9.9" width="2" height="2" fill="#3a3a3a"/><rect x="3.5" y="0.0" width="2" height="2" fill="#3a3a3a"/><rect x="3.5" y="3.3" width="2" height="2" fill="#3a3a3a"/><rect x="3.5" y="6.6" width="2" height="2" fill="#3a3a3a"/><rect x="3.5" y="9.9" width="2" height="2" fill="#3a3a3a"/></svg>
<svg class="a" style="left:1225.5px;top:72.5px" width="22" height="22" viewBox="0 0 22 22" fill="none" stroke="#2b2b2b" stroke-width="1.5"><path d="M2.5 18 L10.5 2 H18 M10.5 2 L18.5 18" stroke-width="1.3"/><path d="M1.5 20 L2.5 15 L5.5 17Z M19.5 20 L15.5 17 L18.5 15Z" fill="#2b2b2b" stroke="none"/></svg>
<svg class="a" style="left:1258.0px;top:72.5px" width="22" height="22" viewBox="0 0 22 22" fill="none" stroke="#2b2b2b" stroke-width="1.5"><path d="M2.5 18 L12.5 2 H20.5 M12 7.5 H20 M12 13 H20 M13.5 2 V13" stroke-width="1.3"/><path d="M1.5 20 L2.5 15 L5.5 17Z" fill="#2b2b2b" stroke="none"/></svg>
<svg class="a" style="left:1291.0px;top:72.5px" width="22" height="22" viewBox="0 0 22 22" fill="none" stroke="#2b2b2b" stroke-width="1.5"><path d="M1 19.5 H20.5" stroke-width="1.4"/><path d="M5 10.5 H14 L9.5 18Z M9.5 18 L19.5 1" stroke-width="1.3"/></svg>
<svg class="a" style="left:1323.0px;top:72.5px" width="22" height="22" viewBox="0 0 22 22" fill="none" stroke="#2b2b2b" stroke-width="1.5"><rect x="4.5" y="1.5" width="13" height="11" stroke-width="1.4"/><path d="M11 12.5 V17 M1.5 19.8 H20.5" stroke-width="1.4"/><path d="M7.5 19.5 L11 15.5 L14.5 19.5Z" fill="#2b2b2b" stroke="none"/></svg>
<span class="a t " style="left:1329.8px;top:72.5px;font-size:11px;line-height:15px;color:#2b2b2b;">A</span>
<svg class="a" style="left:1225.5px;top:103.5px" width="22" height="22" viewBox="0 0 22 22" fill="none" stroke="#2b2b2b" stroke-width="1.5"><path d="M1 18.5 H18" stroke-width="1.4"/><path d="M15.5 16 L20.5 18.5 L15.5 21Z" fill="#2b2b2b" stroke="none"/></svg>
<span class="a t " style="left:1227.5px;top:101.2px;font-size:15.5px;line-height:19.5px;color:#2b2b2b;">A</span>
<svg class="a" style="left:1258.0px;top:103.5px" width="22" height="22" viewBox="0 0 22 22" fill="none" stroke="#2b2b2b" stroke-width="1.5"><path d="M2 19.3 H13 L15.5 17.5 H4" stroke-width="2.2"/><path d="M16.5 2 V17" stroke-width="1.4"/><path d="M14 14 L16.5 19 L19 14Z" fill="#2b2b2b" stroke="none"/></svg>
<span class="a t " style="left:1259.5px;top:101.2px;font-size:15.5px;line-height:19.5px;color:#2b2b2b;">A</span>
<svg class="a" style="left:1277px;top:120px" width="6" height="6"><path d="M0 6 H6 V0Z" fill="#2b2b2b"/></svg>
<svg class="a" style="left:1291.0px;top:103.5px" width="22" height="22" viewBox="0 0 22 22" fill="none" stroke="#2b2b2b" stroke-width="1.5"><circle cx="9" cy="13" r="7.3"/><path d="M1.7 13 H16.3 M6.5 9.5 V16.5 H11.5 V9.5Z M14 7.5 Q15.5 3 21 3.5" stroke-width="1.4"/></svg>
<svg class="a" style="left:1323.0px;top:103.5px" width="22" height="22" viewBox="0 0 22 22" fill="none" stroke="#2b2b2b" stroke-width="1.5"><path d="M4.5 20 V2.5 H19.5 V10.5 H4.5 M10 2.5 V10.5 M14.5 2.5 V10.5 M1.5 20 H20.5" stroke-width="1.5"/><path d="M1.5 20 L5 16 V20Z" fill="#2b2b2b" stroke="none"/></svg>
<span class="a t " style="left:1226.5px;top:130.5px;font-size:29px;line-height:33px;color:#2b2b2b;font-weight:bold;font-family:'Liberation Serif',serif;">T</span>
<svg class="a" style="left:1258.0px;top:135.5px" width="22" height="22" viewBox="0 0 22 22" fill="none" stroke="#2b2b2b" stroke-width="1.5"><rect x="2.5" y="2" width="17.5" height="17.5" stroke-width="1.5"/><path d="M2.5 5 H20" stroke-width="1.5"/><path d="M4.5 8 H18 M4.5 11 H18 M4.5 14 H18 M4.5 17 H18" stroke-width="1.4" stroke-dasharray="5 1.2"/></svg>
<svg class="a" style="left:1291.0px;top:135.5px" width="22" height="22" viewBox="0 0 22 22" fill="none" stroke="#2b2b2b" stroke-width="1.5"><path d="M14 0.5 L8 9 H11.5 L8.5 17 L17 7 H13 L17 0.5Z" fill="#2b2b2b" stroke="none"/><path d="M1 20 H8 M10 20 H13 M15 20 H21" stroke-width="1.3"/><path d="M8.5 16.5 L6.5 19.5" stroke-width="1.2"/></svg>
<svg class="a" style="left:1323.0px;top:135.5px" width="22" height="22" viewBox="0 0 22 22" fill="none" stroke="#2b2b2b" stroke-width="1.5"><circle cx="10" cy="11" r="7.5" stroke-width="1.5"/><path d="M10 1 V7.5 M10 14.5 V21 M0 11 H6.5 M13.5 11 H20 M8.5 11 H11.5 M10 9.5 V12.5" stroke-width="1.4"/></svg>
<svg class="a" style="left:1343px;top:152px" width="6" height="6"><path d="M0 6 H6 V0Z" fill="#2b2b2b"/></svg>
<svg class="a" style="left:1322.0px;top:171.8px" width="10" height="5"><path d="M0 0 H10 L5.0 5Z" fill="#2b2b2b"/></svg>
<svg class="a" style="left:1341px;top:168px" width="6" height="13"><rect x="0.0" y="0.0" width="2" height="2" fill="#3a3a3a"/><rect x="0.0" y="3.3" width="2" height="2" fill="#3a3a3a"/><rect x="0.0" y="6.6" width="2" height="2" fill="#3a3a3a"/><rect x="0.0" y="9.9" width="2" height="2" fill="#3a3a3a"/><rect x="3.5" y="0.0" width="2" height="2" fill="#3a3a3a"/><rect x="3.5" y="3.3" width="2" height="2" fill="#3a3a3a"/><rect x="3.5" y="6.6" width="2" height="2" fill="#3a3a3a"/><rect x="3.5" y="9.9" width="2" height="2" fill="#3a3a3a"/></svg>
<svg class="a" style="left:1358.0px;top:72.5px" width="22" height="22" viewBox="0 0 22 22" fill="none" stroke="#2b2b2b" stroke-width="1.5"><path d="M4.5 1.5 V20.5 M1 18.5 H20.5" stroke-width="1.4"/><path d="M5.5 5.5 H11.5 M8 3.5 L5.5 5.5 L8 7.5 M16.5 10 V16 M14.5 13.5 L16.5 16.5 L18.5 13.5" stroke-width="1.3"/><circle cx="16.3" cy="5.3" r="2.3" stroke-width="1.6"/></svg>
<svg class="a" style="left:1389.5px;top:72.5px" width="22" height="22" viewBox="0 0 22 22" fill="none" stroke="#2b2b2b" stroke-width="1.5"><path d="M1.5 15 L15.5 1.5 M6.5 20 L20.5 6" stroke-width="1.4"/></svg>
<svg class="a" style="left:1423.0px;top:72.5px" width="22" height="22" viewBox="0 0 22 22" fill="none" stroke="#2b2b2b" stroke-width="1.5"><path d="M1 20.5 H21 M11.5 1 V20.5 M11.5 15.5 H16.5 V20.5" stroke-width="1.4"/></svg>
<svg class="a" style="left:1455.0px;top:72.5px" width="22" height="22" viewBox="0 0 22 22" fill="none" stroke="#2b2b2b" stroke-width="1.5"><circle cx="9.5" cy="8.3" r="6.8"/><path d="M5 20 L21 6.5" stroke-width="1.4"/></svg>
<svg class="a" style="left:1358.0px;top:103.5px" width="22" height="22" viewBox="0 0 22 22" fill="none" stroke="#2b2b2b" stroke-width="1.5"><path d="M1.5 20 L9.5 12 M12 9.5 L20.5 1" stroke-width="1.5"/></svg>
<svg class="a" style="left:1389.5px;top:103.5px" width="22" height="22" viewBox="0 0 22 22" fill="none" stroke="#2b2b2b" stroke-width="1.5"><path d="M20.5 20 H1.5 L16 4 M1.5 20 L19.5 12" stroke-width="1.4"/></svg>
<svg class="a" style="left:1423.0px;top:103.5px" width="22" height="22" viewBox="0 0 22 22" fill="none" stroke="#2b2b2b" stroke-width="1.5"><circle cx="11" cy="4" r="2"/><path d="M11 6 L1.5 15.5 H20.5Z" fill="#2b2b2b" stroke="none"/><path d="M3 19.5 L6 16 M7 19.5 L10 16 M11 19.5 L14 16 M15 19.5 L18 16" stroke-width="1.4"/></svg>
<svg class="a" style="left:1444px;top:120px" width="6" height="6"><path d="M0 6 H6 V0Z" fill="#2b2b2b"/></svg>
<svg class="a" style="left:1455.0px;top:103.5px" width="22" height="22" viewBox="0 0 22 22" fill="none" stroke="#2b2b2b" stroke-width="1.5"><circle cx="11" cy="11" r="8.5" stroke-width="1.4"/><circle cx="11" cy="11" r="4.2" stroke-width="1.4"/></svg>
<svg class="a" style="left:1358.0px;top:135.5px" width="22" height="22" viewBox="0 0 22 22" fill="none" stroke="#2b2b2b" stroke-width="1.5"><path d="M2 2 L6 18 M19 2 L15.5 18" stroke-width="1.4"/><circle cx="6.3" cy="19.3" r="1.7" stroke-width="1.3"/><circle cx="15" cy="19.3" r="1.7" stroke-width="1.3"/></svg>
<svg class="a" style="left:1378px;top:152px" width="6" height="6"><path d="M0 6 H6 V0Z" fill="#2b2b2b"/></svg>
<svg class="a" style="left:1389.5px;top:135.5px" width="22" height="22" viewBox="0 0 22 22" fill="none" stroke="#2b2b2b" stroke-width="1.5"><path d="M3 9 H19 M3 15 H19" stroke-width="2.9"/></svg>
<svg class="a" style="left:1423.0px;top:135.5px" width="22" height="22" viewBox="0 0 22 22" fill="none" stroke="#2b2b2b" stroke-width="1.5"><path d="M2.5 2 V20 H20.5Z M2.5 20 L11.5 11" stroke-width="1.5"/></svg>
<svg class="a" style="left:1455.0px;top:135.5px" width="22" height="22" viewBox="0 0 22 22" fill="none" stroke="#2b2b2b" stroke-width="1.5"><circle cx="10.5" cy="10.5" r="8.7" stroke-width="1.5"/><path d="M3 15 L15 3.5 M6.5 18 L18.5 6.5" stroke-width="1.1"/><path d="M7.5 8 Q8 4.5 11 4.5 Q14 4.5 14 7.5 Q14 9.5 11.5 10.5 V13" stroke-width="1.7"/><circle cx="11.3" cy="16" r="1.1" fill="#2b2b2b" stroke="none"/></svg>
<svg class="a" style="left:1476px;top:152px" width="6" height="6"><path d="M0 6 H6 V0Z" fill="#2b2b2b"/></svg>
<svg class="a" style="left:1453.5px;top:171.8px" width="10" height="5"><path d="M0 0 H10 L5.0 5Z" fill="#2b2b2b"/></svg>
<svg class="a" style="left:1473px;top:168px" width="6" height="13"><rect x="0.0" y="0.0" width="2" height="2" fill="#3a3a3a"/><rect x="0.0" y="3.3" width="2" height="2" fill="#3a3a3a"/><rect x="0.0" y="6.6" width="2" height="2" fill="#3a3a3a"/><rect x="0.0" y="9.9" width="2" height="2" fill="#3a3a3a"/><rect x="3.5" y="0.0" width="2" height="2" fill="#3a3a3a"/><rect x="3.5" y="3.3" width="2" height="2" fill="#3a3a3a"/><rect x="3.5" y="6.6" width="2" height="2" fill="#3a3a3a"/><rect x="3.5" y="9.9" width="2" height="2" fill="#3a3a3a"/></svg>
<svg class="a" style="left:1488.5px;top:72.5px" width="22" height="22" viewBox="0 0 22 22" fill="none" stroke="#2b2b2b" stroke-width="1.5"><circle cx="3" cy="18.5" r="1.9"/><circle cx="18.5" cy="3" r="1.9"/><path d="M5 16.5 L8 13.5" stroke-width="1.4"/><path d="M8.5 5.5 q0.3 -3 3 -3 q2.8 0 2.8 2.7 q0 1.8 -2.4 2.8 v2.3" stroke-width="1.6"/><circle cx="11.9" cy="13.3" r="1" fill="#2b2b2b" stroke="none"/></svg>
<svg class="a" style="left:1520.5px;top:72.5px" width="22" height="22" viewBox="0 0 22 22" fill="none" stroke="#2b2b2b" stroke-width="1.5"><circle cx="3" cy="3" r="1.7"/><circle cx="3" cy="18.5" r="1.9"/><circle cx="19" cy="18" r="1.7"/><path d="M3 5.5 V16 M5.5 18.5 H17 M4 8 Q13 9 15 18" stroke-width="1.2" stroke-dasharray="1.6 1.6"/><path d="M13.5 1.5 q0.3 -3 3 -3 q2.8 0 2.8 2.7 q0 1.8 -2.4 2.8 v2.3" stroke-width="1.6"/><circle cx="16.9" cy="9.3" r="1" fill="#2b2b2b" stroke="none"/></svg>
<svg class="a" style="left:1488.5px;top:103.5px" width="22" height="22" viewBox="0 0 22 22" fill="none" stroke="#2b2b2b" stroke-width="1.5"><circle cx="4.5" cy="17" r="1.9"/><circle cx="16.5" cy="17" r="1.9"/><path d="M6.5 17 H14.5 M3 6.5 Q6 10 4.5 15 M19 6.5 Q16 10 16.5 15 M1 8 L4 5.5 M21 8 L18 5.5 M3.5 18.5 L1 21 M17.5 18.5 L20.5 21" stroke-width="1.4"/><path d="M7.5 1.5 q0.3 -3 3 -3 q2.8 0 2.8 2.7 q0 1.8 -2.4 2.8 v2.3" stroke-width="1.6"/><circle cx="10.9" cy="9.3" r="1" fill="#2b2b2b" stroke="none"/></svg>
<svg class="a" style="left:1520.5px;top:103.5px" width="22" height="22" viewBox="0 0 22 22" fill="none" stroke="#2b2b2b" stroke-width="1.5"><path d="M1.5 2 H8 V11 Q8.5 15 13 15 H20 V20 H1.5Z" stroke-width="1.6"/><path d="M13.5 1.5 q0.3 -3 3 -3 q2.8 0 2.8 2.7 q0 1.8 -2.4 2.8 v2.3" stroke-width="1.6"/><circle cx="16.9" cy="9.3" r="1" fill="#2b2b2b" stroke="none"/></svg>
<svg class="a" style="left:1488.5px;top:135.5px" width="22" height="22" viewBox="0 0 22 22" fill="none" stroke="#2b2b2b" stroke-width="1.5"><path d="M1.5 2 H9 V14 H20 V20 H1.5Z" stroke-width="1.6"/><path d="M1.5 8 L7 2.5 M1.5 13 L9 5.5 M1.5 18 L9 10.5 M4 20 L9.5 14.5 M9 20 L14.5 14.5 M14 20 L19.5 14.5" stroke-width="1.1"/><path d="M13.5 1.5 q0.3 -3 3 -3 q2.8 0 2.8 2.7 q0 1.8 -2.4 2.8 v2.3" stroke-width="1.6"/><circle cx="16.9" cy="9.3" r="1" fill="#2b2b2b" stroke="none"/></svg>
<svg class="a" style="left:1520.5px;top:135.5px" width="22" height="22" viewBox="0 0 22 22" fill="none" stroke="#2b2b2b" stroke-width="1.5"><path d="M3.5 3 V18.5 H19" stroke-width="1.4"/><path d="M1.5 5.5 L3.5 1.5 L5.5 5.5Z M16.5 16.5 L20.5 18.5 L16.5 20.5Z" fill="#2b2b2b" stroke="none"/><circle cx="9" cy="12.5" r="1.7" stroke-width="1.3"/><path d="M13.5 1.5 q0.3 -3 3 -3 q2.8 0 2.8 2.7 q0 1.8 -2.4 2.8 v2.3" stroke-width="1.6"/><circle cx="16.9" cy="9.3" r="1" fill="#2b2b2b" stroke="none"/></svg>
<svg class="a" style="left:1519.0px;top:171.8px" width="10" height="5"><path d="M0 0 H10 L5.0 5Z" fill="#2b2b2b"/></svg>
<svg class="a" style="left:1539px;top:168px" width="6" height="13"><rect x="0.0" y="0.0" width="2" height="2" fill="#3a3a3a"/><rect x="0.0" y="3.3" width="2" height="2" fill="#3a3a3a"/><rect x="0.0" y="6.6" width="2" height="2" fill="#3a3a3a"/><rect x="0.0" y="9.9" width="2" height="2" fill="#3a3a3a"/><rect x="3.5" y="0.0" width="2" height="2" fill="#3a3a3a"/><rect x="3.5" y="3.3" width="2" height="2" fill="#3a3a3a"/><rect x="3.5" y="6.6" width="2" height="2" fill="#3a3a3a"/><rect x="3.5" y="9.9" width="2" height="2" fill="#3a3a3a"/></svg>
<svg class="a" style="left:1554.5px;top:72.5px" width="22" height="22" viewBox="0 0 22 22" fill="none" stroke="#2b2b2b" stroke-width="1.5"><rect x="2" y="2" width="17.5" height="17.5" stroke-width="1.6"/><path d="M7 7 V14.5 H14.5" stroke-width="1.4"/><path d="M5 8.5 L7 4.5 L9 8.5Z M13 12.5 L16.5 14.5 L13 16.5Z" fill="#2b2b2b" stroke="none"/></svg>
<svg class="a" style="left:1587.5px;top:72.5px" width="22" height="22" viewBox="0 0 22 22" fill="none" stroke="#2b2b2b" stroke-width="1.5"><path d="M2 4 V20 H20.5 V7" stroke-width="1.5"/><rect x="3" y="1" width="7" height="3.5" stroke-width="1.3"/><rect x="4.5" y="9" width="6" height="3.5" stroke-width="1.3"/><rect x="12.5" y="9" width="5.5" height="3.5" stroke-width="1.3"/><rect x="4.5" y="14.5" width="6" height="3.5" stroke-width="1.3"/><path d="M12.5 15 H20.5 M2 6.8 H18" stroke-width="1.3"/><path d="M13 2 Q17.5 1 19.5 4.5 M17 5 L20 5 L20.5 2" stroke-width="1.2"/></svg>
<svg class="a" style="left:1554.5px;top:103.5px" width="22" height="22" viewBox="0 0 22 22" fill="none" stroke="#2b2b2b" stroke-width="1.5"><path d="M2 4.5 V20 H20.5 V7.5" stroke-width="1.5"/><rect x="3" y="1" width="7" height="3.5" stroke-width="1.3"/><rect x="4.5" y="9.5" width="8" height="4.5" stroke-width="1.4"/><path d="M2 7 H18 M13 16 H20.5 M13 16 V20" stroke-width="1.3"/><path d="M13 2 Q17.5 1 19.5 4.5 M17 5 L20 5 L20.5 2" stroke-width="1.2"/></svg>
<svg class="a" style="left:1587.5px;top:103.5px" width="22" height="22" viewBox="0 0 22 22" fill="none" stroke="#2b2b2b" stroke-width="1.5"><rect x="1.5" y="2" width="19" height="8" stroke-width="1.5"/><rect x="6.5" y="4.3" width="9" height="3.5" stroke-width="1.3"/><rect x="1.5" y="13.5" width="19" height="6.5" stroke-width="1.5"/><path d="M1.5 12 H20.5" stroke-width="1" stroke-dasharray="2 1.2"/><path d="M4 16.5 H8 M10 16.5 H13 M15 16.5 H18.5" stroke-width="1.6"/></svg>
<svg class="a" style="left:1554.5px;top:135.5px" width="22" height="22" viewBox="0 0 22 22" fill="none" stroke="#2b2b2b" stroke-width="1.5"><rect x="2" y="9.5" width="17.5" height="4.5" stroke-width="1.5"/><rect x="2" y="15.5" width="17.5" height="4.5" stroke-width="1.5"/><path d="M10.7 1 V6" stroke-width="1.4"/><path d="M8.2 4.5 L10.7 8 L13.2 4.5Z" fill="#2b2b2b" stroke="none"/></svg>
<svg class="a" style="left:1587.5px;top:135.5px" width="22" height="22" viewBox="0 0 22 22" fill="none" stroke="#2b2b2b" stroke-width="1.5"><rect x="14" y="4" width="6" height="12" stroke-width="1.5"/><path d="M1.5 3.5 H6 M1.5 18.5 H6 M10.5 1 V6 M10.5 16 V21" stroke-width="1.4"/><path d="M5 1.5 L8.5 3.5 L5 5.5Z M5 16.5 L8.5 18.5 L5 20.5Z" fill="#2b2b2b" stroke="none"/></svg>
<svg class="a" style="left:1586.0px;top:171.8px" width="10" height="5"><path d="M0 0 H10 L5.0 5Z" fill="#2b2b2b"/></svg>
<svg class="a" style="left:1605px;top:168px" width="6" height="13"><rect x="0.0" y="0.0" width="2" height="2" fill="#3a3a3a"/><rect x="0.0" y="3.3" width="2" height="2" fill="#3a3a3a"/><rect x="0.0" y="6.6" width="2" height="2" fill="#3a3a3a"/><rect x="0.0" y="9.9" width="2" height="2" fill="#3a3a3a"/><rect x="3.5" y="0.0" width="2" height="2" fill="#3a3a3a"/><rect x="3.5" y="3.3" width="2" height="2" fill="#3a3a3a"/><rect x="3.5" y="6.6" width="2" height="2" fill="#3a3a3a"/><rect x="3.5" y="9.9" width="2" height="2" fill="#3a3a3a"/></svg>
<svg class="a" style="left:1621.0px;top:72.5px" width="22" height="22" viewBox="0 0 22 22" fill="none" stroke="#2b2b2b" stroke-width="1.5"><rect x="11" y="1" width="9.5" height="8.5" stroke-width="1.4"/><path d="M7.5 3 L1.5 12 H13.5Z" stroke-width="1.4"/><circle cx="10" cy="14.5" r="5.7" stroke-width="1.4"/></svg>
<svg class="a" style="left:1653.5px;top:72.5px" width="22" height="22" viewBox="0 0 22 22" fill="none" stroke="#2b2b2b" stroke-width="1.5"><path d="M3.5 20 V2 H14 L20.5 9 V17.5 H6" stroke-width="1.5"/><circle cx="13" cy="10" r="4.3" stroke-width="1.5"/><circle cx="3.5" cy="18.7" r="2" fill="#f2f2f2" stroke-width="1.4"/></svg>
<svg class="a" style="left:1621.0px;top:103.5px" width="22" height="22" viewBox="0 0 22 22" fill="none" stroke="#2b2b2b" stroke-width="1.5"><rect x="1.5" y="2" width="19" height="18" stroke-width="1.6"/><path d="M2 20 L8.5 11 L12 15.5 L15 12.5 L20 20Z" fill="#2b2b2b" stroke="none"/><circle cx="16" cy="6.5" r="2.1" fill="#2b2b2b" stroke="none"/></svg>
<svg class="a" style="left:1653.5px;top:103.5px" width="22" height="22" viewBox="0 0 22 22" fill="none" stroke="#2b2b2b" stroke-width="1.5"><path d="M10 3.5 H2 V20 H18.5 V12" stroke-width="1.5"/><path d="M10 2 H20.5 V12 H10Z" stroke-width="1.2" stroke-dasharray="1.8 1.4"/><path d="M10.5 3.5 L18.5 12" stroke-width="1.4"/></svg>
<svg class="a" style="left:1621.0px;top:135.5px" width="22" height="22" viewBox="0 0 22 22" fill="none" stroke="#2b2b2b" stroke-width="1.5"><path d="M13 2 H2 V20 H19.5 V10" stroke-width="1.5" stroke-dasharray="30 0"/><path d="M4.5 14 Q6 18 9.5 15 Q12.5 12.5 15.5 13.5 M4.5 13 V17 H8 M17 15.5 V12 H13.5" stroke-width="1.2"/><path d="M15 4.5 H20 M17.5 1.5 V7.5 M16 3 L17.5 1.2 L19 3 M18.5 3 L20.3 4.5 L18.5 6" stroke-width="1.1"/></svg>
<svg class="a" style="left:1653.5px;top:135.5px" width="22" height="22" viewBox="0 0 22 22" fill="none" stroke="#2b2b2b" stroke-width="1.5"><rect x="8" y="1.5" width="13" height="8" stroke-width="1.5"/><path d="M8 9.5 L2.5 19 M8 9.5 L11 19 M3 19.5 L7 15.5 L10.5 19.5" stroke-width="1.3"/><path d="M1.5 20.5 L2 16.5 L5 18.5Z M11.5 20.5 L9 18.5 L12 16.5Z" fill="#2b2b2b" stroke="none"/></svg>
<svg class="a" style="left:1652.0px;top:171.8px" width="10" height="5"><path d="M0 0 H10 L5.0 5Z" fill="#2b2b2b"/></svg>
<svg class="a" style="left:1672px;top:168px" width="6" height="13"><rect x="0.0" y="0.0" width="2" height="2" fill="#3a3a3a"/><rect x="0.0" y="3.3" width="2" height="2" fill="#3a3a3a"/><rect x="0.0" y="6.6" width="2" height="2" fill="#3a3a3a"/><rect x="0.0" y="9.9" width="2" height="2" fill="#3a3a3a"/><rect x="3.5" y="0.0" width="2" height="2" fill="#3a3a3a"/><rect x="3.5" y="3.3" width="2" height="2" fill="#3a3a3a"/><rect x="3.5" y="6.6" width="2" height="2" fill="#3a3a3a"/><rect x="3.5" y="9.9" width="2" height="2" fill="#3a3a3a"/></svg>
<svg class="a" style="left:1687.0px;top:72.5px" width="22" height="22" viewBox="0 0 22 22" fill="none" stroke="#2b2b2b" stroke-width="1.5"><path d="M15 2.5 H2.5 V19.5 H10" stroke-width="1.6"/><path d="M6 2.5 Q8.5 0 11.5 2.5Z" fill="#2b2b2b" stroke="none"/><path d="M4.5 6.5 H8 M4.5 9.5 H7 M4.5 12.5 H7 M4.5 15.5 H8" stroke-width="1.2"/><path d="M15 2.5 H16 V5.5" stroke-width="1" stroke-dasharray="1.5 1"/><circle cx="12.5" cy="10.5" r="4.5" stroke-width="1.5"/><path d="M15.8 14 L20.5 19.5" stroke-width="1.8"/></svg>
<svg class="a" style="left:1687.0px;top:103.5px" width="22" height="22" viewBox="0 0 22 22" fill="none" stroke="#d0d0d0" stroke-width="1.5"><rect x="1.5" y="3" width="19" height="15.5" fill="#e4e4e4" stroke-width="1"/><rect x="1.5" y="3" width="19" height="3.5" fill="#d0d0d0" stroke="none"/><circle cx="10" cy="12.5" r="4" stroke-width="1.4"/><path d="M13 15.5 L16.5 19" stroke-width="1.4"/></svg>
<svg class="a" style="left:1705px;top:168px" width="6" height="13"><rect x="0.0" y="0.0" width="2" height="2" fill="#3a3a3a"/><rect x="0.0" y="3.3" width="2" height="2" fill="#3a3a3a"/><rect x="0.0" y="6.6" width="2" height="2" fill="#3a3a3a"/><rect x="0.0" y="9.9" width="2" height="2" fill="#3a3a3a"/><rect x="3.5" y="0.0" width="2" height="2" fill="#3a3a3a"/><rect x="3.5" y="3.3" width="2" height="2" fill="#3a3a3a"/><rect x="3.5" y="6.6" width="2" height="2" fill="#3a3a3a"/><rect x="3.5" y="9.9" width="2" height="2" fill="#3a3a3a"/></svg>
<svg class="a" style="left:1720.0px;top:72.5px" width="22" height="22" viewBox="0 0 22 22" fill="none" stroke="#2b2b2b" stroke-width="1.5"><path d="M9.5 2 H20 V19.5 H2 V10 H9.5Z" stroke-width="1.5"/><path d="M12.5 5 H17 V16.5 H5 V13 H12.5Z" stroke-width="1.4"/></svg>
<svg class="a" style="left:1752.5px;top:72.5px" width="22" height="22" viewBox="0 0 22 22" fill="none" stroke="#2b2b2b" stroke-width="1.5"><path d="M2 11 H12" stroke-width="1.5"/><path d="M12.5 11 H20" stroke-width="1.2" stroke-dasharray="1.6 1.4"/><path d="M20.5 1 V10" stroke-width="1.2" stroke-dasharray="1.6 1.4"/><path d="M20.5 11 V20.5" stroke-width="1.6"/></svg>
<svg class="a" style="left:1720.0px;top:103.5px" width="22" height="22" viewBox="0 0 22 22" fill="none" stroke="#2b2b2b" stroke-width="1.5"><circle cx="13.5" cy="8" r="7" fill="#2b2b2b" stroke="none"/><rect x="1.5" y="9.5" width="12.5" height="10.5" fill="#2b2b2b" stroke="#f2f2f2" stroke-width="1"/></svg>
<svg class="a" style="left:1752.5px;top:103.5px" width="22" height="22" viewBox="0 0 22 22" fill="none" stroke="#2b2b2b" stroke-width="1.5"><path d="M2.5 20 V9 H7.5 Q8 2 14.5 2 Q20.5 2.5 20.5 8.5 Q20.5 13.5 15.5 15 V20Z" stroke-width="1.6"/></svg>
<svg class="a" style="left:1720.0px;top:135.5px" width="22" height="22" viewBox="0 0 22 22" fill="none" stroke="#2b2b2b" stroke-width="1.5"><path d="M5.500 11 L13 3 Q16 1 18.500 3.500 Q20.500 6 19 8.500 L14.500 13.500Z" fill="#2b2b2b" stroke="none"/><path d="M11.500 8.500 L14 11 M13.500 6.500 L16 9" stroke="#f2f2f2" stroke-width="1.1"/><path d="M1.500 12.500 V20.500 M20 12.500 V20.500" stroke-width="1.3" stroke-dasharray="2 1.300"/><path d="M2 13 H6 M2 20.500 H20" stroke-width="1.300" stroke-dasharray="2.200 1.500"/><path d="M4 17 H17.500 M6 15.500 L4 17 L6 18.500 M15.500 15.500 L17.500 17 L15.500 18.500 M9 15.500 V18.500 M12.500 15.500 V18.500" stroke-width="1.200"/></svg>
<svg class="a" style="left:1774px;top:168px" width="6" height="13"><rect x="0.0" y="0.0" width="2" height="2" fill="#3a3a3a"/><rect x="0.0" y="3.3" width="2" height="2" fill="#3a3a3a"/><rect x="0.0" y="6.6" width="2" height="2" fill="#3a3a3a"/><rect x="0.0" y="9.9" width="2" height="2" fill="#3a3a3a"/><rect x="3.5" y="0.0" width="2" height="2" fill="#3a3a3a"/><rect x="3.5" y="3.3" width="2" height="2" fill="#3a3a3a"/><rect x="3.5" y="6.6" width="2" height="2" fill="#3a3a3a"/><rect x="3.5" y="9.9" width="2" height="2" fill="#3a3a3a"/></svg>
<svg class="a" style="left:1788.0px;top:72.5px" width="22" height="22" viewBox="0 0 22 22" fill="none" stroke="#2b2b2b" stroke-width="1.5"><path d="M1 2 H21" stroke-width="1.6"/><path d="M7.500 2 V15 L11 19 L14.500 15 V2" stroke-width="1.500" fill="#f2f2f2"/><path d="M1.500 7 L5.500 2.500 M1.500 12 L7 6 M2 17 L7 11.500 M4.500 19.500 L8 15.500 M15 6.500 L19 2.500 M15 11.500 L20.500 5.500 M15 16 L20.500 10 M13 20 L20.500 14.500" stroke-width="1.300"/></svg>
<svg class="a" style="left:1807px;top:89px" width="6" height="6"><path d="M0 6 H6 V0Z" fill="#2b2b2b"/></svg>
<svg class="a" style="left:1787.0px;top:103.5px" width="22" height="22" viewBox="0 0 22 22" fill="none" stroke="#2b2b2b" stroke-width="1.5"><circle cx="11" cy="11" r="9" stroke-width="1.500"/><path d="M15.500 8 Q13 5 9.500 6.500 Q6 8.500 7 12.500 Q8.500 16 12.500 15.500 Q15 15 16 12.500" stroke-width="1.400"/><path d="M9 11 H13.500 M11.200 8.800 V13.200" stroke-width="1.400"/></svg>
<svg class="a" style="left:1787.0px;top:135.5px" width="22" height="22" viewBox="0 0 22 22" fill="none" stroke="#2b2b2b" stroke-width="1.5"><path d="M3 8.500 H15.500 L13.500 12 V16 L9.300 20 L5 16 V12Z" stroke-width="1.500"/><path d="M5 12 H13.500 M5 16 H13.500" stroke-width="1.200"/><path d="M9.500 6 V2.500 M13.500 4 H18.500 M11 3 Q14 0 17.500 2.500" stroke-width="1.200"/><path d="M16.500 1.500 L20.500 4 L16.500 6.200Z" fill="#2b2b2b" stroke="none"/></svg>
<svg class="a" style="left:1808px;top:168px" width="6" height="13"><rect x="0.0" y="0.0" width="2" height="2" fill="#3a3a3a"/><rect x="0.0" y="3.3" width="2" height="2" fill="#3a3a3a"/><rect x="0.0" y="6.6" width="2" height="2" fill="#3a3a3a"/><rect x="0.0" y="9.9" width="2" height="2" fill="#3a3a3a"/><rect x="3.5" y="0.0" width="2" height="2" fill="#3a3a3a"/><rect x="3.5" y="3.3" width="2" height="2" fill="#3a3a3a"/><rect x="3.5" y="6.6" width="2" height="2" fill="#3a3a3a"/><rect x="3.5" y="9.9" width="2" height="2" fill="#3a3a3a"/></svg>
<svg class="a" style="left:7.0px;top:190.5px" width="22" height="22" viewBox="0 0 22 22" fill="none" stroke="#ffffff" stroke-width="1.5"><path d="M5 2 V19 H12 M5 6.500 H12 M5 12.500 H12" stroke-width="1.500"/><rect x="12.500" y="4.500" width="5" height="3.500" stroke-width="1.300"/><rect x="12.500" y="10.800" width="5" height="3.500" stroke-width="1.300"/><rect x="12.500" y="17" width="5" height="3.500" stroke-width="1.300"/><rect x="3" y="0.800" width="4" height="2.500" stroke-width="1.300"/></svg>
<svg class="a" style="left:7.0px;top:222.0px" width="22" height="22" viewBox="0 0 22 22" fill="none" stroke="#2b2b2b" stroke-width="1.5"><rect x="4" y="2" width="14.500" height="18" stroke-width="1.500"/><rect x="6.500" y="4.500" width="3.200" height="3.200" stroke-width="1.200"/><path d="M11.500 6 H16 M6.500 11.500 L8 13 L10 10.500 M12 12 H16 M6.500 16.500 L8 18 L10 15.500 M12 17 H16" stroke-width="1.200"/></svg>
<span class="a t " style="left:10px;top:249.5px;font-size:25px;line-height:29px;color:#2b2b2b;font-family:'Liberation Serif',serif;font-style:italic;">f</span>
<span class="a t " style="left:17.5px;top:258.5px;font-size:16px;line-height:20px;color:#2b2b2b;">x</span>
<div class="a" style="left:8px;top:286px;width:21px;height:5px;background:#2b2b2b;border-radius:2.5px;"></div>
<div class="a" style="left:8px;top:294.5px;width:21px;height:5px;background:#2b2b2b;border-radius:2.5px;"></div>
<div class="a" style="left:8px;top:303px;width:21px;height:5px;background:#2b2b2b;border-radius:2.5px;"></div>
<span class="a t " style="left:7px;top:314.5px;font-size:11px;line-height:15px;color:#2b2b2b;font-weight:bold;">1</span>
<span class="a t " style="left:22px;top:326.5px;font-size:11px;line-height:15px;color:#2b2b2b;font-weight:bold;">2</span>
<svg class="a" style="left:6.0px;top:317.0px" width="24" height="24" viewBox="0 0 24 24" fill="none" stroke="#2b2b2b" stroke-width="1.5"><path d="M21 8 V4.500 H14.500 M16.500 2 L14 4.500 L16.500 7 M8.500 12.500 V17 H15.500 M13.500 14.500 L16 17 L13.500 19.500" stroke-width="1.500"/></svg>
<svg class="a" style="left:388.0px;top:187.0px" width="22" height="22" viewBox="0 0 22 22" fill="none" stroke="#2b2b2b" stroke-width="1.5"><circle cx="11" cy="11" r="4.300" stroke-width="3"/><path d="M11 3.300 V5.500 M11 16.500 V18.700 M3.300 11 H5.500 M16.500 11 H18.700 M5.600 5.600 L7.200 7.200 M14.800 14.800 L16.400 16.400 M16.400 5.600 L14.800 7.200 M7.200 14.800 L5.600 16.400" stroke-width="3"/></svg>
<svg class="a" style="left:41.5px;top:214.5px" width="22" height="22" viewBox="0 0 22 22" fill="none" stroke="#2b2b2b" stroke-width="1.5"><rect x="2.500" y="4.500" width="17" height="12" stroke-width="1.500"/><rect x="12" y="11" width="7.500" height="5.500" stroke-width="1.300"/></svg>
<svg class="a" style="left:72.5px;top:214.5px" width="22" height="22" viewBox="0 0 22 22" fill="none" stroke="#2b2b2b" stroke-width="1.5"><rect x="1.500" y="2" width="18.500" height="18" stroke-width="1.400"/><path d="M7 7 V14.500 H14.500" stroke-width="1.400"/><path d="M5 8.500 L7 4.500 L9 8.500Z M13 12.500 L16.500 14.500 L13 16.500Z" fill="#2b2b2b" stroke="none"/></svg>
<svg class="a" style="left:106.0px;top:214.5px" width="22" height="22" viewBox="0 0 22 22" fill="none" stroke="#2b2b2b" stroke-width="1.5"><path d="M7 8.500 H21 L15 13.500 H1Z" fill="#2b2b2b" stroke="none"/></svg>
<svg class="a" style="left:139.0px;top:214.5px" width="22" height="22" viewBox="0 0 22 22" fill="none" stroke="#2b2b2b" stroke-width="1.5"><rect x="11" y="1" width="9.5" height="8.5" stroke-width="1.4"/><path d="M7.5 3 L1.5 12 H13.5Z" stroke-width="1.4"/><circle cx="10" cy="14.5" r="5.7" stroke-width="1.4"/></svg>
<svg class="a" style="left:171.5px;top:214.5px" width="22" height="22" viewBox="0 0 22 22" fill="none" stroke="#2b2b2b" stroke-width="1.5"><rect x="1.5" y="2" width="19" height="18" stroke-width="1.6"/><path d="M2 20 L8.5 11 L12 15.5 L15 12.5 L20 20Z" fill="#2b2b2b" stroke="none"/><circle cx="16" cy="6.5" r="2.1" fill="#2b2b2b" stroke="none"/></svg>
<svg class="a" style="left:203.5px;top:214.5px" width="22" height="22" viewBox="0 0 22 22" fill="none" stroke="#2b2b2b" stroke-width="1.5"><path d="M13 2 H2 V20 H19.5 V10" stroke-width="1.5" stroke-dasharray="30 0"/><path d="M4.5 14 Q6 18 9.5 15 Q12.5 12.5 15.5 13.5 M4.5 13 V17 H8 M17 15.5 V12 H13.5" stroke-width="1.2"/><path d="M15 4.5 H20 M17.5 1.5 V7.5 M16 3 L17.5 1.2 L19 3 M18.5 3 L20.3 4.5 L18.5 6" stroke-width="1.1"/></svg>
<svg class="a" style="left:202.0px;top:253.0px" width="10" height="6"><path d="M0 0 H10 L5.0 6Z" fill="#2b2b2b"/></svg>
<svg class="a" style="left:392.0px;top:253.0px" width="10" height="6"><path d="M0 0 H10 L5.0 6Z" fill="#2b2b2b"/></svg>
<svg class="a" style="left:41.5px;top:276.0px" width="22" height="22" viewBox="0 0 22 22" fill="none" stroke="#2b2b2b" stroke-width="1.5"><path d="M1 2 H21 L13.500 11 V21 H8.500 V11Z" fill="#2b2b2b" stroke="none"/></svg>
<svg class="a" style="left:74.0px;top:277.0px" width="22" height="22" viewBox="0 0 22 22" fill="none" stroke="#b0b0b0" stroke-width="1.4"><circle cx="13" cy="8.500" r="4.300"/><path d="M9.800 11.800 L4.500 17" stroke-width="2"/></svg>
<svg class="a" style="left:228.5px;top:312.5px" width="22" height="22" viewBox="0 0 22 22" fill="none" stroke="#2b2b2b" stroke-width="1.6"><rect x="1" y="2.5" width="19.5" height="16.5"/><path d="M10.5 19 V14.5 H20.5"/><rect x="6" y="6.5" width="6" height="4"/><rect x="12" y="5" width="3.5" height="7"/><path d="M3.5 8.5 H6"/></svg>
<svg class="a" style="left:217px;top:352px" width="6" height="8"><path d="M0 0 L6 4 L0 8Z" fill="#2b2b2b"/></svg>
<svg class="a" style="left:217px;top:384px" width="6" height="8"><path d="M0 0 L6 4 L0 8Z" fill="#2b2b2b"/></svg>
<svg class="a" style="left:228.5px;top:345.0px" width="22" height="22" viewBox="0 0 22 22" fill="none" stroke="#2b2b2b" stroke-width="1.5"><path d="M1.500 2 H8 L10 4 H20 V20 H1.500Z" fill="#2b2b2b" stroke="none"/><rect x="4.500" y="8" width="12.500" height="9" fill="#f2f2f2" stroke="none"/><rect x="11" y="12.500" width="6" height="4.500" fill="#2b2b2b" stroke="none"/><rect x="5.500" y="9" width="10.500" height="2.500" fill="#2b2b2b" stroke="none"/></svg>
<svg class="a" style="left:228.5px;top:377.5px" width="22" height="22" viewBox="0 0 22 22" fill="none" stroke="#2b2b2b" stroke-width="1.5"><rect x="1.500" y="2" width="19" height="18.500" stroke-width="1.300"/><path d="M7.500 7.500 V14.500 H14" stroke-width="1.300"/><path d="M5.500 9 L7.500 5 L9.500 9Z M12.500 12.500 L16 14.500 L12.500 16.500Z" fill="#2b2b2b" stroke="none"/></svg>
<svg class="a" style="left:257px;top:384px" width="10" height="10"><circle cx="5" cy="5" r="4.500" fill="#222"/></svg>
<svg class="a" style="left:42.0px;top:377.0px" width="22" height="22" viewBox="0 0 22 22" fill="none" stroke="#2b2b2b" stroke-width="1.5"><path d="M1.500 11 Q11 1 20.500 11 Q11 21 1.500 11Z" stroke-width="1.800"/><circle cx="11" cy="11" r="3.200" fill="#2b2b2b" stroke="none"/></svg>
<svg class="a" style="left:74.5px;top:377.0px" width="22" height="22" viewBox="0 0 22 22" fill="none" stroke="#2b2b2b" stroke-width="1.5"><rect x="6" y="10" width="12" height="9" fill="#2b2b2b" stroke="none"/><path d="M8 10 V6 Q8 2.500 5 2.500 Q2.500 2.500 2.500 6 V8" stroke-width="1.800"/><rect x="10.500" y="13" width="3" height="3" fill="#e6e6e6" stroke="none"/></svg>
<svg class="a" style="left:145.500px;top:392.500px" width="8" height="8"><circle cx="4" cy="4" r="3.500" fill="#fff"/></svg>
<div class="a" style="left:560.0px;top:190.0px;width:2px;height:2px;background:#333;"></div>
<div class="a" style="left:560.0px;top:193.5px;width:2px;height:2px;background:#333;"></div>
<div class="a" style="left:563.5px;top:190.0px;width:2px;height:2px;background:#333;"></div>
<div class="a" style="left:563.5px;top:193.5px;width:2px;height:2px;background:#333;"></div>
<div class="a" style="left:567.0px;top:190.0px;width:2px;height:2px;background:#333;"></div>
<div class="a" style="left:567.0px;top:193.5px;width:2px;height:2px;background:#333;"></div>
<div class="a" style="left:570.5px;top:190.0px;width:2px;height:2px;background:#333;"></div>
<div class="a" style="left:570.5px;top:193.5px;width:2px;height:2px;background:#333;"></div>
<svg class="a" style="left:585px;top:189px" width="28" height="27" viewBox="0 0 28 27" fill="none" stroke="#fff"><path d="M3 10 L14.500 2.500 Q21 0 24.500 5.500 Q27.500 11.500 22 15.500 L11.500 23.500 L8.500 19.500 L19 11.500 Q21 9.500 19.500 7.500 Q18 6 16 7 L5.500 14.500Z" fill="#fff" stroke="#fff" stroke-width="0.800"/><path d="M11.500 23.500 L8.500 19.500 M5.500 14.500 L3 10" stroke="#4d4d4d" stroke-width="0"/><path d="M9.800 21.500 L20.500 13.500 Q23.500 10.500 21.500 7 Q19 3.500 15 5.500 L4.300 12.300" stroke="#8a8a8a" stroke-width="1"/></svg>
<svg class="a" style="left:616.5px;top:199.0px" width="11" height="6"><path d="M0 0 H11 L5.5 6Z" fill="#ffffff"/></svg>
<svg class="a" style="left:643.0px;top:191.0px" width="22" height="22" viewBox="0 0 22 22" fill="none" stroke="#2b2b2b" stroke-width="1.5"><path d="M1 9 L10 1 M5 12.500 L14 4.500" stroke-width="1.400"/><path d="M12 20 H21 M16.500 12 V20" stroke-width="1.500"/></svg>
<svg class="a" style="left:677.0px;top:191.0px" width="22" height="22" viewBox="0 0 22 22" fill="none" stroke="#2b2b2b" stroke-width="1.5"><path d="M9 5.500 Q14.500 -0.500 20.500 5.500 Q14.500 11.500 9 5.500Z" stroke-width="1.400"/><circle cx="14.700" cy="5.500" r="2.200" fill="#2b2b2b" stroke="none"/><path d="M1 16 L9 8.500 M5 19.500 L11 13.500" stroke-width="1.400"/><path d="M9 20 H17 M13 13 V20" stroke-width="1.500"/></svg>
<svg class="a" style="left:710.0px;top:191.0px" width="22" height="22" viewBox="0 0 22 22" fill="none" stroke="#2b2b2b" stroke-width="1.5"><path d="M8 5.500 Q14 -0.500 20.500 5.500 Q14 11.500 8 5.500Z" stroke-width="1.400"/><circle cx="14.200" cy="5.500" r="2.200" fill="#2b2b2b" stroke="none"/><path d="M4 10 V19 H12" stroke-width="1.400"/><path d="M2.200 12 L4 8.500 L5.800 12Z M10.500 17.200 L14 19 L10.500 20.800Z" fill="#2b2b2b" stroke="none"/></svg>
<svg class="a" style="left:746.5px;top:191.0px" width="22" height="22" viewBox="0 0 22 22" fill="none" stroke="#2b2b2b" stroke-width="1.5"><path d="M6 1.500 V20.500 M15.500 1.500 V20.500 M1.500 6.500 H20.500 M1.500 15.500 H20.500" stroke-width="1.600"/></svg>
<svg class="a" style="left:776.5px;top:191.0px" width="22" height="22" viewBox="0 0 22 22" fill="none" stroke="#2b2b2b" stroke-width="1.5"><path d="M4 4 V17.500 M6 19 H18" stroke-width="1.500"/><circle cx="4" cy="19" r="2"/><path d="M1.800 5.500 L4 0.500 L6.200 5.500Z M16.500 16.800 L21.500 19 L16.500 21.200Z" fill="#2b2b2b" stroke="none"/></svg>
<svg class="a" style="left:856.5px;top:199.0px" width="11" height="6"><path d="M0 0 H11 L5.5 6Z" fill="#2b2b2b"/></svg>
<svg class="a" style="left:882.0px;top:191.0px" width="22" height="22" viewBox="0 0 22 22" fill="none" stroke="#2b2b2b" stroke-width="1.5"><path d="M1 20 H10 V2.500 H20.500" stroke-width="1.500"/></svg>
<svg class="a" style="left:916.0px;top:191.0px" width="22" height="22" viewBox="0 0 22 22" fill="none" stroke="#ffffff" stroke-width="1.5"><path d="M5 15.500 L16.500 6" stroke-width="1.500"/><circle cx="4" cy="16.500" r="2.200"/><circle cx="17.500" cy="5" r="2.200"/><path d="M6.500 2.500 L9 5 L6.500 7.500 L4 5Z M16 14.500 L18.500 17 L16 19.500 L13.500 17Z" stroke-width="1.300"/></svg>
<svg class="a" style="left:947.0px;top:191.0px" width="22" height="22" viewBox="0 0 22 22" fill="none" stroke="#2b2b2b" stroke-width="1.5"><path d="M3.500 6 V21 M18.500 6 V21 M4 17.500 H18" stroke-width="1.500"/><path d="M14.500 15.500 L18.500 17.500 L14.500 19.500Z" fill="#2b2b2b" stroke="none"/><path d="M3.500 0.500 V6 M1 3.200 H6 M18.500 0.500 V6 M16 3.200 H21" stroke-width="1.100"/></svg>
<svg class="a" style="left:1014.5px;top:199.0px" width="11" height="6"><path d="M0 0 H11 L5.5 6Z" fill="#2b2b2b"/></svg>
<svg class="a" style="left:1039.0px;top:191.0px" width="22" height="22" viewBox="0 0 22 22" fill="none" stroke="#2b2b2b" stroke-width="1.5"><circle cx="8.500" cy="8.500" r="6.500" stroke-width="1.500"/><path d="M13 13.500 L19.500 20" stroke-width="2.200"/><path d="M4.500 5 H20 V12.500 H4.500Z" stroke-width="1" stroke-dasharray="1.600 1.300"/></svg>
<svg class="a" style="left:1074.5px;top:199.0px" width="11" height="6"><path d="M0 0 H11 L5.5 6Z" fill="#2b2b2b"/></svg>
<svg class="a" style="left:1094.5px;top:191.0px" width="22" height="22" viewBox="0 0 22 22" fill="none" stroke="#2b2b2b" stroke-width="1.5"><circle cx="8.500" cy="8.500" r="6.300" stroke-width="1.500"/><path d="M13 13.500 L19.500 20" stroke-width="2.200"/><path d="M5.500 8 H11.500 M8.500 5 V11 M5.500 12 H11.500" stroke-width="1.200"/></svg>
<svg class="a" style="left:1163.5px;top:199.0px" width="11" height="6"><path d="M0 0 H11 L5.5 6Z" fill="#2b2b2b"/></svg>
<svg class="a" style="left:1334.0px;top:191.0px" width="22" height="22" viewBox="0 0 22 22" fill="none" stroke="#2b2b2b" stroke-width="1.5"><path d="M1 2.500 H21 M13.500 2.500 V21 M18 2.500 V21" stroke-width="1.500"/><path d="M13.500 5 L18 8 L13.500 11 L18 14 L13.500 17 L18 20" stroke-width="1"/><path d="M4 3 V11" stroke-width="1" stroke-dasharray="1.500 1"/><rect x="1" y="13.500" width="9" height="7" stroke-width="1.300"/><path d="M1 17 H10 M5.500 13.500 V20.500" stroke-width="1.100"/></svg>
<svg class="a" style="left:1369.0px;top:191.0px" width="22" height="22" viewBox="0 0 22 22" fill="none" stroke="#2b2b2b" stroke-width="1.5"><path d="M12.500 4.500 L17.500 9.500 M14 6 L4 16 L2.500 19.500 L6 18 L16 8" stroke-width="1.500"/><path d="M14.500 7.500 L17.500 1.800 Q19.500 0.500 20.800 2.500 Q21.500 4.500 20.200 5.500 L14.500 7.500Z" fill="#2b2b2b" stroke="none"/><path d="M11.500 3.500 L18.500 10.500" stroke-width="2.200"/></svg>
<svg class="a" style="left:680px;top:244px" width="950" height="680" viewBox="680 244 950 680" font-family="Liberation Sans, sans-serif"><rect x="687.5" y="250.5" width="934.0" height="661.0" fill="none" stroke="#111" stroke-width="1.03"/><rect x="787.5" y="293.5" width="749.0" height="565.0" fill="none" stroke="#c8c8c8" stroke-width="0.86"/><rect x="719.0" y="259.0" width="894.5" height="644.5" fill="none" stroke="#1e76cc" stroke-width="1.89"/><rect x="719.0" y="259.0" width="110.0" height="22.0" fill="none" stroke="#1e76cc" stroke-width="1.72"/><text x="0" y="0" text-anchor="start" fill="#111" style="font-size:12px;" textLength="133.3" lengthAdjust="spacing" transform="rotate(180 827 263.2) translate(827 263.2) scale(0.78 1)">УАЗ 31512М 05. 008 К1</text><rect x="700.0" y="452.5" width="19.0" height="187.5" fill="none" stroke="#1e76cc" stroke-width="1.81"/><path d="M708.0 452.5 L708.0 640.0" fill="none" stroke="#1e76cc" stroke-width="1.81"/><path d="M700.0 546.0 L719.0 546.0" fill="none" stroke="#1e76cc" stroke-width="1.81"/><rect x="700.0" y="676.5" width="19.0" height="227.0" fill="none" stroke="#1e76cc" stroke-width="1.81"/><path d="M708.0 676.5 L708.0 903.5" fill="none" stroke="#1e76cc" stroke-width="1.81"/><path d="M700.0 731.0 L719.0 731.0" fill="none" stroke="#1e76cc" stroke-width="1.81"/><path d="M700.0 770.0 L719.0 770.0" fill="none" stroke="#1e76cc" stroke-width="1.81"/><path d="M700.0 809.0 L719.0 809.0" fill="none" stroke="#1e76cc" stroke-width="1.81"/><path d="M700.0 864.5 L719.0 864.5" fill="none" stroke="#1e76cc" stroke-width="1.81"/><text x="0" y="0" text-anchor="start" fill="#111" style="font-size:5px;font-style:italic;" textLength="43.6" lengthAdjust="spacing" transform="rotate(-90 706 517) translate(706 517) scale(0.78 1)">Перв. примен.</text><text x="0" y="0" text-anchor="start" fill="#111" style="font-size:5px;font-style:italic;" textLength="28.2" lengthAdjust="spacing" transform="rotate(-90 706 606) translate(706 606) scale(0.78 1)">Справ. №</text><text x="0" y="0" text-anchor="start" fill="#111" style="font-size:5px;font-style:italic;" textLength="39.7" lengthAdjust="spacing" transform="rotate(-90 706 899) translate(706 899) scale(0.78 1)">Инв. № подл.</text><text x="0" y="0" text-anchor="start" fill="#111" style="font-size:5px;font-style:italic;" textLength="39.7" lengthAdjust="spacing" transform="rotate(-90 706 855) translate(706 855) scale(0.78 1)">Подп. и дата</text><text x="0" y="0" text-anchor="start" fill="#111" style="font-size:5px;font-style:italic;" textLength="42.3" lengthAdjust="spacing" transform="rotate(-90 706 807) translate(706 807) scale(0.78 1)">Взам. инв. №</text><text x="0" y="0" text-anchor="start" fill="#111" style="font-size:5px;font-style:italic;" textLength="41.0" lengthAdjust="spacing" transform="rotate(-90 706 765) translate(706 765) scale(0.78 1)">Инв. № дубл.</text><text x="0" y="0" text-anchor="start" fill="#111" style="font-size:5px;font-style:italic;" textLength="41.0" lengthAdjust="spacing" transform="rotate(-90 706 721) translate(706 721) scale(0.78 1)">Подп. и дата</text><path d="M687.0 905.0 L687.0 872.0" fill="none" stroke="#444" stroke-width="0.86"/><path d="M684.5 880.0 L687.0 869.0 L689.5 880.0 L684.5 880.0" fill="none" stroke="#444" stroke-width="0.86"/><path d="M690.0 910.5 L726.0 910.5" fill="none" stroke="#444" stroke-width="0.86"/><path d="M720.0 908.0 L731.0 910.5 L720.0 913.0 L720.0 908.0" fill="none" stroke="#444" stroke-width="0.86"/><text x="0" y="0" text-anchor="start" fill="#666" style="font-size:9px;" transform="translate(686 866) scale(0.78 1)">Y</text><text x="0" y="0" text-anchor="start" fill="#999" style="font-size:9px;" transform="translate(730 911) scale(0.78 1)">X</text><circle cx="801.2" cy="307.4" r="10.3" fill="none" stroke="#1e76cc" stroke-width="1.55"/><circle cx="906.8" cy="307.4" r="10.3" fill="none" stroke="#1e76cc" stroke-width="1.55"/><path d="M812.2 307.4 L845.0 307.4" fill="none" stroke="#1e76cc" stroke-width="1.55"/><path d="M863.0 307.4 L895.8 307.4" fill="none" stroke="#1e76cc" stroke-width="1.55"/><path d="M838.3 302.7 L869.7 302.7" fill="none" stroke="#1e76cc" stroke-width="1.72"/><path d="M838.3 301.2 L838.3 304.2" fill="none" stroke="#1e76cc" stroke-width="2.06"/><path d="M869.7 301.2 L869.7 304.2" fill="none" stroke="#1e76cc" stroke-width="2.06"/><path d="M840.7 302.7 L840.7 327.9" fill="none" stroke="#1e76cc" stroke-width="1.72"/><path d="M867.3 302.7 L867.3 327.9" fill="none" stroke="#1e76cc" stroke-width="1.72"/><path d="M851.0 313.4 L851.0 331.1" fill="none" stroke="#1e76cc" stroke-width="1.38"/><path d="M857.0 313.4 L857.0 331.1" fill="none" stroke="#1e76cc" stroke-width="1.38"/><path d="M843.0 311.4 L850.5 316.4" fill="none" stroke="#1e76cc" stroke-width="1.20"/><path d="M865.0 311.4 L857.5 316.4" fill="none" stroke="#1e76cc" stroke-width="1.20"/><path d="M843.9 314.4 L846.8 311.5 L849.7 314.4 L846.8 317.3Z" fill="#1e76cc"/><path d="M843.9 322.4 L846.8 319.5 L849.7 322.4 L846.8 325.3Z" fill="#1e76cc"/><path d="M846.8 316.6 L848.8 314.6 L850.8 316.6 L848.8 318.6Z" fill="#1e76cc"/><path d="M846.8 324.6 L848.8 322.6 L850.8 324.6 L848.8 326.6Z" fill="#1e76cc"/><path d="M858.3 314.4 L861.2 311.5 L864.1 314.4 L861.2 317.3Z" fill="#1e76cc"/><path d="M858.3 322.4 L861.2 319.5 L864.1 322.4 L861.2 325.3Z" fill="#1e76cc"/><path d="M857.2 316.6 L859.2 314.6 L861.2 316.6 L859.2 318.6Z" fill="#1e76cc"/><path d="M857.2 324.6 L859.2 322.6 L861.2 324.6 L859.2 326.6Z" fill="#1e76cc"/><path d="M836.0 331.1 L872.0 331.1" fill="none" stroke="#1e76cc" stroke-width="1.72"/><path d="M836.0 331.1 L836.0 337.9" fill="none" stroke="#1e76cc" stroke-width="1.72"/><path d="M872.0 331.1 L872.0 337.9" fill="none" stroke="#1e76cc" stroke-width="1.72"/><rect x="834.0" y="336.4" width="3.5" height="3.0" fill="#1e76cc" stroke="#1e76cc" stroke-width="0.86"/><rect x="870.5" y="336.4" width="3.5" height="3.0" fill="#1e76cc" stroke="#1e76cc" stroke-width="0.86"/><path d="M836.0 337.9 L844.0 337.9" fill="none" stroke="#1e76cc" stroke-width="1.38"/><path d="M864.0 337.9 L872.0 337.9" fill="none" stroke="#1e76cc" stroke-width="1.38"/><path d="M848 333.69999999999993 A8.2 8.2 0 1 0 860 333.69999999999993" fill="none" stroke="#1e76cc" stroke-width="1.75"/><path d="M849.5 333.29999999999995 Q847 338.29999999999995 849 342.29999999999995" fill="none" stroke="#1e76cc" stroke-width="1.4"/><path d="M858.5 333.29999999999995 Q861 338.29999999999995 859 342.29999999999995" fill="none" stroke="#1e76cc" stroke-width="1.4"/><path d="M844.5 334.3 L845.7 342.3" fill="none" stroke="#1e76cc" stroke-width="2.06"/><path d="M863.5 334.3 L862.3 342.3" fill="none" stroke="#1e76cc" stroke-width="2.06"/><path d="M842.0 354.7 L866.0 354.7" fill="none" stroke="#1e76cc" stroke-width="1.38"/><path d="M847.3 354.7 L849.5 352.5 L851.7 354.7 L849.5 356.9Z" fill="#1e76cc"/><path d="M856.3 354.7 L858.5 352.5 L860.7 354.7 L858.5 356.9Z" fill="#1e76cc"/><path d="M846.0 353.2 L849.0 356.2" fill="none" stroke="#1e76cc" stroke-width="1.03"/><path d="M862.0 353.2 L859.0 356.2" fill="none" stroke="#1e76cc" stroke-width="1.03"/><circle cx="801.2" cy="644.0" r="10.3" fill="none" stroke="#1e76cc" stroke-width="1.55"/><circle cx="906.8" cy="644.0" r="10.3" fill="none" stroke="#1e76cc" stroke-width="1.55"/><path d="M812.2 644.0 L845.0 644.0" fill="none" stroke="#1e76cc" stroke-width="1.55"/><path d="M863.0 644.0 L895.8 644.0" fill="none" stroke="#1e76cc" stroke-width="1.55"/><path d="M838.3 648.7 L869.7 648.7" fill="none" stroke="#1e76cc" stroke-width="1.72"/><path d="M838.3 650.2 L838.3 647.2" fill="none" stroke="#1e76cc" stroke-width="2.06"/><path d="M869.7 650.2 L869.7 647.2" fill="none" stroke="#1e76cc" stroke-width="2.06"/><path d="M840.7 648.7 L840.7 623.5" fill="none" stroke="#1e76cc" stroke-width="1.72"/><path d="M867.3 648.7 L867.3 623.5" fill="none" stroke="#1e76cc" stroke-width="1.72"/><path d="M851.0 638.0 L851.0 620.3" fill="none" stroke="#1e76cc" stroke-width="1.38"/><path d="M857.0 638.0 L857.0 620.3" fill="none" stroke="#1e76cc" stroke-width="1.38"/><path d="M843.0 640.0 L850.5 635.0" fill="none" stroke="#1e76cc" stroke-width="1.20"/><path d="M865.0 640.0 L857.5 635.0" fill="none" stroke="#1e76cc" stroke-width="1.20"/><path d="M843.9 637.0 L846.8 634.1 L849.7 637.0 L846.8 639.9Z" fill="#1e76cc"/><path d="M843.9 629.0 L846.8 626.1 L849.7 629.0 L846.8 631.9Z" fill="#1e76cc"/><path d="M846.8 634.8 L848.8 632.8 L850.8 634.8 L848.8 636.8Z" fill="#1e76cc"/><path d="M846.8 626.8 L848.8 624.8 L850.8 626.8 L848.8 628.8Z" fill="#1e76cc"/><path d="M858.3 637.0 L861.2 634.1 L864.1 637.0 L861.2 639.9Z" fill="#1e76cc"/><path d="M858.3 629.0 L861.2 626.1 L864.1 629.0 L861.2 631.9Z" fill="#1e76cc"/><path d="M857.2 634.8 L859.2 632.8 L861.2 634.8 L859.2 636.8Z" fill="#1e76cc"/><path d="M857.2 626.8 L859.2 624.8 L861.2 626.8 L859.2 628.8Z" fill="#1e76cc"/><path d="M836.0 620.3 L872.0 620.3" fill="none" stroke="#1e76cc" stroke-width="1.72"/><path d="M836.0 620.3 L836.0 613.5" fill="none" stroke="#1e76cc" stroke-width="1.72"/><path d="M872.0 620.3 L872.0 613.5" fill="none" stroke="#1e76cc" stroke-width="1.72"/><rect x="834.0" y="612.0" width="3.5" height="3.0" fill="#1e76cc" stroke="#1e76cc" stroke-width="0.86"/><rect x="870.5" y="612.0" width="3.5" height="3.0" fill="#1e76cc" stroke="#1e76cc" stroke-width="0.86"/><path d="M836.0 613.5 L844.0 613.5" fill="none" stroke="#1e76cc" stroke-width="1.38"/><path d="M864.0 613.5 L872.0 613.5" fill="none" stroke="#1e76cc" stroke-width="1.38"/><path d="M848 617.7 A8.2 8.2 0 1 1 860 617.7" fill="none" stroke="#1e76cc" stroke-width="1.75"/><path d="M849.5 618.1 Q847 613.1 849 609.1" fill="none" stroke="#1e76cc" stroke-width="1.4"/><path d="M858.5 618.1 Q861 613.1 859 609.1" fill="none" stroke="#1e76cc" stroke-width="1.4"/><path d="M844.5 617.1 L845.7 609.1" fill="none" stroke="#1e76cc" stroke-width="2.06"/><path d="M863.5 617.1 L862.3 609.1" fill="none" stroke="#1e76cc" stroke-width="2.06"/><path d="M842.0 596.7 L866.0 596.7" fill="none" stroke="#1e76cc" stroke-width="1.38"/><path d="M847.3 596.7 L849.5 594.5 L851.7 596.7 L849.5 598.9Z" fill="#1e76cc"/><path d="M856.3 596.7 L858.5 594.5 L860.7 596.7 L858.5 598.9Z" fill="#1e76cc"/><path d="M846.0 595.2 L849.0 598.2" fill="none" stroke="#1e76cc" stroke-width="1.03"/><path d="M862.0 595.2 L859.0 598.2" fill="none" stroke="#1e76cc" stroke-width="1.03"/><path d="M854.0 303.0 L854.0 331.0" fill="none" stroke="#1e76cc" stroke-width="1.89"/><path d="M854.0 347.5 L854.0 410.0" fill="none" stroke="#1e76cc" stroke-width="1.89"/><path d="M854.0 425.0 L854.0 447.0" fill="none" stroke="#1e76cc" stroke-width="1.89"/><path d="M854.0 515.0 L854.0 604.0" fill="none" stroke="#1e76cc" stroke-width="1.89"/><path d="M854.0 620.5 L854.0 649.0" fill="none" stroke="#1e76cc" stroke-width="1.89"/><path d="M842.5 338.0 L841.0 370.0 L841.7 379.0" fill="none" stroke="#1e76cc" stroke-width="1.72"/><path d="M864.5 338.0 L867.5 370.0 L866.7 379.0" fill="none" stroke="#1e76cc" stroke-width="1.72"/><path d="M839.0 515.0 L842.5 597.0 L842.5 614.0" fill="none" stroke="#1e76cc" stroke-width="1.72"/><path d="M869.0 515.0 L866.0 597.0 L866.0 614.0" fill="none" stroke="#1e76cc" stroke-width="1.72"/><path d="M841.7 379 Q842 381.5 838 383 A38 38 0 0 0 830 447" fill="none" stroke="#1e76cc" stroke-width="1.75"/><path d="M866.7 379 Q866.5 381.5 870.5 383 A38 38 0 0 1 880 447" fill="none" stroke="#1e76cc" stroke-width="1.75"/><path d="M848.5 396.8 L848.5 403.8 L835.5 403.8 L835.5 430.8 L848.5 430.8 L848.5 437.8" fill="none" stroke="#1e76cc" stroke-width="1.72"/><path d="M858.5 396.8 L858.5 403.8 L873.0 403.8 L873.0 430.8 L858.5 430.8 L858.5 437.8" fill="none" stroke="#1e76cc" stroke-width="1.72"/><rect x="842.0" y="409.8" width="24.5" height="15.0" fill="none" stroke="#1e76cc" stroke-width="1.89"/><path d="M837.5 417.3 L871.5 417.3" fill="none" stroke="#1e76cc" stroke-width="1.55"/><path d="M838.5 417.3 L842.0 414.3 V420.3Z M870.5 417.3 L866.5 414.3 V420.3Z" fill="#1e76cc"/><path d="M842.9 395.8 L845.5 393.2 L848.1 395.8 L845.5 398.4Z" fill="#1e76cc"/><path d="M840.8 393.3 L843.0 391.1 L845.2 393.3 L843.0 395.5Z" fill="#1e76cc"/><path d="M846.0 400.3 L841.5 399.3" fill="none" stroke="#1e76cc" stroke-width="1.20"/><path d="M849.0 394.3 L845.0 390.8" fill="none" stroke="#1e76cc" stroke-width="1.20"/><path d="M842.9 438.8 L845.5 436.2 L848.1 438.8 L845.5 441.4Z" fill="#1e76cc"/><path d="M840.8 441.3 L843.0 439.1 L845.2 441.3 L843.0 443.5Z" fill="#1e76cc"/><path d="M846.0 434.3 L841.5 435.3" fill="none" stroke="#1e76cc" stroke-width="1.20"/><path d="M849.0 440.3 L845.0 443.8" fill="none" stroke="#1e76cc" stroke-width="1.20"/><path d="M858.9 395.8 L861.5 393.2 L864.1 395.8 L861.5 398.4Z" fill="#1e76cc"/><path d="M861.8 393.3 L864.0 391.1 L866.2 393.3 L864.0 395.5Z" fill="#1e76cc"/><path d="M861.0 400.3 L865.5 399.3" fill="none" stroke="#1e76cc" stroke-width="1.20"/><path d="M858.0 394.3 L862.0 390.8" fill="none" stroke="#1e76cc" stroke-width="1.20"/><path d="M858.9 438.8 L861.5 436.2 L864.1 438.8 L861.5 441.4Z" fill="#1e76cc"/><path d="M861.8 441.3 L864.0 439.1 L866.2 441.3 L864.0 443.5Z" fill="#1e76cc"/><path d="M861.0 434.3 L865.5 435.3" fill="none" stroke="#1e76cc" stroke-width="1.20"/><path d="M858.0 440.3 L862.0 443.8" fill="none" stroke="#1e76cc" stroke-width="1.20"/><path d="M826.5 401.8 L830.5 405.3 L835.5 403.8" fill="none" stroke="#1e76cc" stroke-width="1.38"/><path d="M879.5 404.3 L879.5 430.3" fill="none" stroke="#1e76cc" stroke-width="1.72"/><path d="M879.5 404.3 L882.0 401.3" fill="none" stroke="#1e76cc" stroke-width="1.38"/><path d="M879.5 430.3 L882.0 433.3" fill="none" stroke="#1e76cc" stroke-width="1.38"/><path d="M884.5 405.8 L903.5 405.8" fill="none" stroke="#1e76cc" stroke-width="1.72"/><path d="M884.5 427.8 L903.5 427.8" fill="none" stroke="#1e76cc" stroke-width="1.72"/><path d="M879.5 416.5 L907.5 416.5" fill="none" stroke="#1e76cc" stroke-width="1.55"/><path d="M887.4 411.0 L890.0 408.4 L892.6 411.0 L890.0 413.6Z" fill="#1e76cc"/><path d="M890.2 412.7 L891.8 411.1 L893.4 412.7 L891.8 414.3Z" fill="#1e76cc"/><path d="M886.6 412.7 L888.2 411.1 L889.8 412.7 L888.2 414.3Z" fill="#1e76cc"/><path d="M887.4 422.0 L890.0 419.4 L892.6 422.0 L890.0 424.6Z" fill="#1e76cc"/><path d="M890.2 420.3 L891.8 418.7 L893.4 420.3 L891.8 421.9Z" fill="#1e76cc"/><path d="M886.6 420.3 L888.2 418.7 L889.8 420.3 L888.2 421.9Z" fill="#1e76cc"/><path d="M895.9 411.0 L898.5 408.4 L901.1 411.0 L898.5 413.6Z" fill="#1e76cc"/><path d="M898.7 412.7 L900.3 411.1 L901.9 412.7 L900.3 414.3Z" fill="#1e76cc"/><path d="M895.1 412.7 L896.7 411.1 L898.3 412.7 L896.7 414.3Z" fill="#1e76cc"/><path d="M895.9 422.0 L898.5 419.4 L901.1 422.0 L898.5 424.6Z" fill="#1e76cc"/><path d="M898.7 420.3 L900.3 418.7 L901.9 420.3 L900.3 421.9Z" fill="#1e76cc"/><path d="M895.1 420.3 L896.7 418.7 L898.3 420.3 L896.7 421.9Z" fill="#1e76cc"/><path d="M810.0 391.5 L820.0 391.5 L831.0 403.5 L827.0 402.0" fill="none" stroke="#1e76cc" stroke-width="1.38"/><text x="0" y="0" text-anchor="start" fill="#111" style="font-size:5.5px;" textLength="15.4" lengthAdjust="spacing" transform="translate(809 390) scale(0.78 1)">Z17</text><path d="M897.0 398.5 L906.0 398.5" fill="none" stroke="#1e76cc" stroke-width="1.38"/><path d="M889.0 402.0 L897.0 398.5" fill="none" stroke="#1e76cc" stroke-width="1.38"/><text x="0" y="0" text-anchor="start" fill="#111" style="font-size:5.5px;" textLength="15.4" lengthAdjust="spacing" transform="translate(896 396.5) scale(0.78 1)">Z16</text><path d="M883.0 389.0 L899.0 375.0 L912.0 375.0" fill="none" stroke="#1e76cc" stroke-width="1.38"/><text x="0" y="0" text-anchor="start" fill="#111" style="font-size:5.5px;" transform="translate(905 373) scale(0.78 1)">5</text><rect x="887.0" y="400.0" width="4.0" height="4.5" fill="#1e76cc" stroke="#1e76cc" stroke-width="0.43"/><circle cx="915.0" cy="415.8" r="7.5" fill="none" stroke="#1e76cc" stroke-width="1.55"/><path d="M911 409.5 Q915 407 919 409.5 M911 422 Q915 424.5 919 422" fill="none" stroke="#1e76cc" stroke-width="2.1"/><path d="M922.5 415.8 L1109.0 415.8" fill="none" stroke="#1e76cc" stroke-width="1.72"/><path d="M1006 412.2 H1015.5 Q1017.5 415.8 1015.5 419.4 H1006" fill="none" stroke="#1e76cc" stroke-width="1.8"/><circle cx="1117.0" cy="415.8" r="7.8" fill="none" stroke="#1e76cc" stroke-width="1.55"/><path d="M1112.5 409 Q1117 406.5 1121.5 409 M1112.5 422.5 Q1117 425 1121.5 422.5" fill="none" stroke="#1e76cc" stroke-width="2.1"/><path d="M1130 411.5 H1141 V420 H1130 M1125 415.8 H1130 M1130 413.8 H1138 V417.8 H1130" fill="none" stroke="#1e76cc" stroke-width="1.6"/><rect x="802.0" y="447.0" width="120.3" height="68.2" fill="none" stroke="#1e76cc" stroke-width="1.89"/><path d="M802.0 477.7 L817.6 477.7 L817.6 469.4 L827.5 469.4 L827.5 477.7 L843.0 477.7 L843.0 487.0 L853.5 487.0 L853.5 477.7 L868.0 477.7 L868.0 469.4 L879.0 469.4 L879.0 477.7 L893.6 477.7 L893.6 487.0 L904.0 487.0 L904.0 477.7 L930.0 477.7" fill="none" stroke="#1e76cc" stroke-width="1.72"/><path d="M817.5 470 V467 Q818.0 464.5 820.5 464.5 H824.5 Q827.0 464.5 827.5 467 V470Z" fill="#1e76cc"/><path d="M822.5 458.2 L822.5 465.0" fill="none" stroke="#1e76cc" stroke-width="1.55"/><path d="M868.5 470 V467 Q869.0 464.5 871.5 464.5 H875.5 Q878.0 464.5 878.5 467 V470Z" fill="#1e76cc"/><path d="M873.5 458.2 L873.5 465.0" fill="none" stroke="#1e76cc" stroke-width="1.55"/><path d="M842.7 486.5 H853.7 Q853.2 491.5 850.2 491.8 H846.2 Q843.2 491.5 842.7 486.5Z" fill="#1e76cc"/><path d="M848.2 491.0 L848.2 498.7" fill="none" stroke="#1e76cc" stroke-width="1.55"/><path d="M893.3 486.5 H904.3 Q903.8 491.5 900.8 491.8 H896.8 Q893.8 491.5 893.3 486.5Z" fill="#1e76cc"/><path d="M898.8 491.0 L898.8 498.7" fill="none" stroke="#1e76cc" stroke-width="1.55"/><rect x="929.6" y="440.7" width="23.9" height="75.6" fill="none" stroke="#1e76cc" stroke-width="1.72"/><path d="M942.6 440.7 L942.6 516.3" fill="none" stroke="#1e76cc" stroke-width="1.55"/><path d="M937.0 444.0 L937.0 474.5" fill="none" stroke="#1e76cc" stroke-width="1.55"/><path d="M937.0 481.0 L937.0 513.0" fill="none" stroke="#1e76cc" stroke-width="1.55"/><path d="M932.0 474.8 L941.5 474.8" fill="none" stroke="#1e76cc" stroke-width="1.55"/><path d="M932.0 480.8 L941.5 480.8" fill="none" stroke="#1e76cc" stroke-width="1.55"/><path d="M932 472 Q927 472.5 927 477.7 Q927 483.5 932 484" fill="none" stroke="#1e76cc" stroke-width="1.75"/><path d="M947.5 446.0 L947.5 471.0" fill="none" stroke="#1e76cc" stroke-width="1.20"/><path d="M947.5 485.0 L947.5 512.0" fill="none" stroke="#1e76cc" stroke-width="1.20"/><path d="M945.0 447.5 L956.0 471.0" fill="none" stroke="#1e76cc" stroke-width="1.20"/><path d="M945.0 509.0 L956.0 485.0" fill="none" stroke="#1e76cc" stroke-width="1.20"/><path d="M944.0 444.0 L952.0 444.0" fill="none" stroke="#1e76cc" stroke-width="2.06"/><path d="M944.0 513.0 L952.0 513.0" fill="none" stroke="#1e76cc" stroke-width="2.06"/><path d="M953.5 477.7 L987.6 477.7" fill="none" stroke="#1e76cc" stroke-width="1.72"/><path d="M956 477 L958 472.5 L960.5 470.5 L963.5 470.5 L966 473.5 L968.5 477 Z" fill="#1e76cc"/><path d="M955.0 481.2 L969.0 481.2" fill="none" stroke="#1e76cc" stroke-width="1.55"/><path d="M958 482 H966 L964.5 486 H959.5Z" fill="#1e76cc"/><path d="M962.0 468.5 L965.0 468.5" fill="none" stroke="#1e76cc" stroke-width="0.69"/><rect x="987.6" y="436.8" width="155.4" height="133.2" fill="none" stroke="#1e76cc" stroke-width="1.89"/><path d="M1109.2 436.8 L1109.2 570.0" fill="none" stroke="#1e76cc" stroke-width="1.72"/><path d="M987.6 477.5 L1146.6 477.5" fill="none" stroke="#1e76cc" stroke-width="1.89"/><path d="M987.6 529.5 L1143.0 529.5" fill="none" stroke="#1e76cc" stroke-width="1.72"/><path d="M995.0 458.7 L995.0 562.8" fill="none" stroke="#1e76cc" stroke-width="1.72"/><path d="M991.8 458.7 L998.2 458.7" fill="none" stroke="#1e76cc" stroke-width="1.55"/><path d="M991.8 562.8 L998.2 562.8" fill="none" stroke="#1e76cc" stroke-width="1.55"/><path d="M992.0 498.0 L998.0 498.0" fill="none" stroke="#1e76cc" stroke-width="1.38"/><path d="M1027.0 455.0 L1027.0 557.8" fill="none" stroke="#1e76cc" stroke-width="1.72"/><path d="M1023.8 455.0 L1030.2 455.0" fill="none" stroke="#1e76cc" stroke-width="1.55"/><path d="M1023.8 557.8 L1030.2 557.8" fill="none" stroke="#1e76cc" stroke-width="1.55"/><path d="M1024.0 502.0 L1030.0 502.0" fill="none" stroke="#1e76cc" stroke-width="1.38"/><path d="M1056.0 463.0 L1056.0 565.7" fill="none" stroke="#1e76cc" stroke-width="1.72"/><path d="M1052.8 463.0 L1059.2 463.0" fill="none" stroke="#1e76cc" stroke-width="1.55"/><path d="M1052.8 565.7 L1059.2 565.7" fill="none" stroke="#1e76cc" stroke-width="1.55"/><path d="M1053.0 494.0 L1059.0 494.0" fill="none" stroke="#1e76cc" stroke-width="1.38"/><path d="M1065.7 448.7 L1065.7 552.0" fill="none" stroke="#1e76cc" stroke-width="1.72"/><path d="M1062.5 448.7 L1068.9 448.7" fill="none" stroke="#1e76cc" stroke-width="1.55"/><path d="M1062.5 552.0 L1068.9 552.0" fill="none" stroke="#1e76cc" stroke-width="1.55"/><path d="M1062.5 508.0 L1069.0 508.0" fill="none" stroke="#1e76cc" stroke-width="1.38"/><path d="M1097.7 443.0 L1097.7 545.6" fill="none" stroke="#1e76cc" stroke-width="1.72"/><path d="M1094.5 443.0 L1100.9 443.0" fill="none" stroke="#1e76cc" stroke-width="1.55"/><path d="M1094.5 545.6 L1100.9 545.6" fill="none" stroke="#1e76cc" stroke-width="1.55"/><path d="M1094.5 514.0 L1101.0 514.0" fill="none" stroke="#1e76cc" stroke-width="1.38"/><path d="M1119.0 455.0 L1119.0 501.8" fill="none" stroke="#1e76cc" stroke-width="1.72"/><path d="M1115.8 455.0 L1122.2 455.0" fill="none" stroke="#1e76cc" stroke-width="1.55"/><path d="M1115.8 501.8 L1122.2 501.8" fill="none" stroke="#1e76cc" stroke-width="1.55"/><path d="M1119.0 519.0 L1119.0 540.5" fill="none" stroke="#1e76cc" stroke-width="1.72"/><path d="M1115.8 519.0 L1122.2 519.0" fill="none" stroke="#1e76cc" stroke-width="1.55"/><path d="M1115.8 540.5 L1122.2 540.5" fill="none" stroke="#1e76cc" stroke-width="1.55"/><path d="M1109.2 511.3 L1143.0 511.3" fill="none" stroke="#1e76cc" stroke-width="1.72"/><path d="M985.2 474.5 L987.6 472.1 L990.0 474.5 L987.6 476.9Z" fill="#1e76cc"/><path d="M985.2 480.5 L987.6 478.1 L990.0 480.5 L987.6 482.9Z" fill="#1e76cc"/><circle cx="987.6" cy="474.5" r="0.8" fill="#fff"/><circle cx="987.6" cy="480.5" r="0.8" fill="#fff"/><path d="M985.2 526.5 L987.6 524.1 L990.0 526.5 L987.6 528.9Z" fill="#1e76cc"/><path d="M985.2 532.5 L987.6 530.1 L990.0 532.5 L987.6 534.9Z" fill="#1e76cc"/><circle cx="987.6" cy="526.5" r="0.8" fill="#fff"/><circle cx="987.6" cy="532.5" r="0.8" fill="#fff"/><path d="M1106.8 474.5 L1109.2 472.1 L1111.6 474.5 L1109.2 476.9Z" fill="#1e76cc"/><path d="M1106.8 480.5 L1109.2 478.1 L1111.6 480.5 L1109.2 482.9Z" fill="#1e76cc"/><circle cx="1109.2" cy="474.5" r="0.8" fill="#fff"/><circle cx="1109.2" cy="480.5" r="0.8" fill="#fff"/><path d="M1106.8 526.5 L1109.2 524.1 L1111.6 526.5 L1109.2 528.9Z" fill="#1e76cc"/><path d="M1106.8 532.5 L1109.2 530.1 L1111.6 532.5 L1109.2 534.9Z" fill="#1e76cc"/><circle cx="1109.2" cy="526.5" r="0.8" fill="#fff"/><circle cx="1109.2" cy="532.5" r="0.8" fill="#fff"/><path d="M1140.6 474.5 L1143.0 472.1 L1145.4 474.5 L1143.0 476.9Z" fill="#1e76cc"/><path d="M1140.6 480.5 L1143.0 478.1 L1145.4 480.5 L1143.0 482.9Z" fill="#1e76cc"/><circle cx="1143" cy="474.5" r="0.8" fill="#fff"/><circle cx="1143" cy="480.5" r="0.8" fill="#fff"/><path d="M1140.6 526.5 L1143.0 524.1 L1145.4 526.5 L1143.0 528.9Z" fill="#1e76cc"/><path d="M1140.6 532.5 L1143.0 530.1 L1145.4 532.5 L1143.0 534.9Z" fill="#1e76cc"/><circle cx="1143" cy="526.5" r="0.8" fill="#fff"/><circle cx="1143" cy="532.5" r="0.8" fill="#fff"/><path d="M1011.0 462.5 L1011.0 493.5" fill="none" stroke="#1e76cc" stroke-width="2.06"/><path d="M1003.5 468.5 L1018.5 461.5" fill="none" stroke="#1e76cc" stroke-width="1.29"/><path d="M1003.5 461.5 L1018.5 468.5" fill="none" stroke="#1e76cc" stroke-width="1.29"/><rect x="1008.4" y="462.4" width="5.2" height="5.2" fill="#1e76cc" stroke="#1e76cc" stroke-width="0.43"/><path d="M1005.5 470.2 L1016.5 470.2" fill="none" stroke="#1e76cc" stroke-width="1.55"/><path d="M1003.5 486.5 L1018.5 493.5" fill="none" stroke="#1e76cc" stroke-width="1.29"/><path d="M1003.5 493.5 L1018.5 486.5" fill="none" stroke="#1e76cc" stroke-width="1.29"/><rect x="1008.4" y="487.4" width="5.2" height="5.2" fill="#1e76cc" stroke="#1e76cc" stroke-width="0.43"/><path d="M1005.5 484.8 L1016.5 484.8" fill="none" stroke="#1e76cc" stroke-width="1.55"/><path d="M1006.5 475.9 L1015.5 475.9" fill="none" stroke="#1e76cc" stroke-width="2.24"/><path d="M1006.5 480.9 L1015.5 480.9" fill="none" stroke="#1e76cc" stroke-width="1.72"/><path d="M995.0 465.0 L1001.5 465.0" fill="none" stroke="#1e76cc" stroke-width="1.38"/><path d="M995.0 470.5 L1000.0 470.5" fill="none" stroke="#1e76cc" stroke-width="1.38"/><path d="M999.0 467.5 L1001.8 465.0" fill="none" stroke="#1e76cc" stroke-width="1.12"/><path d="M997.5 472.7 L1000.2 470.5" fill="none" stroke="#1e76cc" stroke-width="1.12"/><path d="M995.0 490.0 L1001.5 490.0" fill="none" stroke="#1e76cc" stroke-width="1.38"/><path d="M995.0 484.5 L1000.0 484.5" fill="none" stroke="#1e76cc" stroke-width="1.38"/><path d="M999.0 487.5 L1001.8 490.0" fill="none" stroke="#1e76cc" stroke-width="1.12"/><path d="M997.5 482.3 L1000.2 484.5" fill="none" stroke="#1e76cc" stroke-width="1.12"/><path d="M993.5 475.9 L1000.0 475.9" fill="none" stroke="#1e76cc" stroke-width="2.24"/><path d="M993.0 480.9 L1000.5 480.9" fill="none" stroke="#1e76cc" stroke-width="1.55"/><path d="M1027.0 465.0 L1020.5 465.0" fill="none" stroke="#1e76cc" stroke-width="1.38"/><path d="M1027.0 470.5 L1022.0 470.5" fill="none" stroke="#1e76cc" stroke-width="1.38"/><path d="M1023.0 467.5 L1020.2 465.0" fill="none" stroke="#1e76cc" stroke-width="1.12"/><path d="M1024.5 472.7 L1021.8 470.5" fill="none" stroke="#1e76cc" stroke-width="1.12"/><path d="M1027.0 490.0 L1020.5 490.0" fill="none" stroke="#1e76cc" stroke-width="1.38"/><path d="M1027.0 484.5 L1022.0 484.5" fill="none" stroke="#1e76cc" stroke-width="1.38"/><path d="M1023.0 487.5 L1020.2 490.0" fill="none" stroke="#1e76cc" stroke-width="1.12"/><path d="M1024.5 482.3 L1021.8 484.5" fill="none" stroke="#1e76cc" stroke-width="1.12"/><path d="M1028.5 475.9 L1022.0 475.9" fill="none" stroke="#1e76cc" stroke-width="2.24"/><path d="M1029.0 480.9 L1021.5 480.9" fill="none" stroke="#1e76cc" stroke-width="1.55"/><path d="M1040.0 462.5 L1040.0 493.5" fill="none" stroke="#1e76cc" stroke-width="2.06"/><path d="M1035.0 469.0 L1040.0 464.0 L1045.0 469.0" fill="none" stroke="#1e76cc" stroke-width="1.29"/><path d="M1037.5 462.5 L1037.5 467.5" fill="none" stroke="#1e76cc" stroke-width="1.20"/><path d="M1042.5 462.5 L1042.5 467.5" fill="none" stroke="#1e76cc" stroke-width="1.20"/><path d="M1034.5 470.2 L1045.5 470.2" fill="none" stroke="#1e76cc" stroke-width="1.55"/><path d="M1035.0 486.0 L1040.0 491.0 L1045.0 486.0" fill="none" stroke="#1e76cc" stroke-width="1.29"/><path d="M1037.5 487.5 L1037.5 492.5" fill="none" stroke="#1e76cc" stroke-width="1.20"/><path d="M1042.5 487.5 L1042.5 492.5" fill="none" stroke="#1e76cc" stroke-width="1.20"/><path d="M1034.5 484.8 L1045.5 484.8" fill="none" stroke="#1e76cc" stroke-width="1.55"/><path d="M1035.5 475.9 L1044.5 475.9" fill="none" stroke="#1e76cc" stroke-width="2.24"/><path d="M1035.5 480.9 L1044.5 480.9" fill="none" stroke="#1e76cc" stroke-width="1.72"/><path d="M1056.2 465.0 L1049.7 465.0" fill="none" stroke="#1e76cc" stroke-width="1.38"/><path d="M1056.2 470.5 L1051.2 470.5" fill="none" stroke="#1e76cc" stroke-width="1.38"/><path d="M1052.2 467.5 L1049.4 465.0" fill="none" stroke="#1e76cc" stroke-width="1.12"/><path d="M1053.7 472.7 L1051.0 470.5" fill="none" stroke="#1e76cc" stroke-width="1.12"/><path d="M1056.2 490.0 L1049.7 490.0" fill="none" stroke="#1e76cc" stroke-width="1.38"/><path d="M1056.2 484.5 L1051.2 484.5" fill="none" stroke="#1e76cc" stroke-width="1.38"/><path d="M1052.2 487.5 L1049.4 490.0" fill="none" stroke="#1e76cc" stroke-width="1.12"/><path d="M1053.7 482.3 L1051.0 484.5" fill="none" stroke="#1e76cc" stroke-width="1.12"/><path d="M1057.7 475.9 L1051.2 475.9" fill="none" stroke="#1e76cc" stroke-width="2.24"/><path d="M1058.2 480.9 L1050.7 480.9" fill="none" stroke="#1e76cc" stroke-width="1.55"/><path d="M1081.6 462.5 L1081.6 493.5" fill="none" stroke="#1e76cc" stroke-width="2.06"/><path d="M1074.1 468.5 L1089.1 461.5" fill="none" stroke="#1e76cc" stroke-width="1.29"/><path d="M1074.1 461.5 L1089.1 468.5" fill="none" stroke="#1e76cc" stroke-width="1.29"/><rect x="1079.0" y="462.4" width="5.2" height="5.2" fill="#1e76cc" stroke="#1e76cc" stroke-width="0.43"/><path d="M1076.1 470.2 L1087.1 470.2" fill="none" stroke="#1e76cc" stroke-width="1.55"/><path d="M1074.1 486.5 L1089.1 493.5" fill="none" stroke="#1e76cc" stroke-width="1.29"/><path d="M1074.1 493.5 L1089.1 486.5" fill="none" stroke="#1e76cc" stroke-width="1.29"/><rect x="1079.0" y="487.4" width="5.2" height="5.2" fill="#1e76cc" stroke="#1e76cc" stroke-width="0.43"/><path d="M1076.1 484.8 L1087.1 484.8" fill="none" stroke="#1e76cc" stroke-width="1.55"/><path d="M1077.1 475.9 L1086.1 475.9" fill="none" stroke="#1e76cc" stroke-width="2.24"/><path d="M1077.1 480.9 L1086.1 480.9" fill="none" stroke="#1e76cc" stroke-width="1.72"/><path d="M1065.7 465.0 L1072.2 465.0" fill="none" stroke="#1e76cc" stroke-width="1.38"/><path d="M1065.7 470.5 L1070.7 470.5" fill="none" stroke="#1e76cc" stroke-width="1.38"/><path d="M1069.7 467.5 L1072.5 465.0" fill="none" stroke="#1e76cc" stroke-width="1.12"/><path d="M1068.2 472.7 L1070.9 470.5" fill="none" stroke="#1e76cc" stroke-width="1.12"/><path d="M1065.7 490.0 L1072.2 490.0" fill="none" stroke="#1e76cc" stroke-width="1.38"/><path d="M1065.7 484.5 L1070.7 484.5" fill="none" stroke="#1e76cc" stroke-width="1.38"/><path d="M1069.7 487.5 L1072.5 490.0" fill="none" stroke="#1e76cc" stroke-width="1.12"/><path d="M1068.2 482.3 L1070.9 484.5" fill="none" stroke="#1e76cc" stroke-width="1.12"/><path d="M1064.2 475.9 L1070.7 475.9" fill="none" stroke="#1e76cc" stroke-width="2.24"/><path d="M1063.7 480.9 L1071.2 480.9" fill="none" stroke="#1e76cc" stroke-width="1.55"/><path d="M1097.7 465.0 L1091.2 465.0" fill="none" stroke="#1e76cc" stroke-width="1.38"/><path d="M1097.7 470.5 L1092.7 470.5" fill="none" stroke="#1e76cc" stroke-width="1.38"/><path d="M1093.7 467.5 L1090.9 465.0" fill="none" stroke="#1e76cc" stroke-width="1.12"/><path d="M1095.2 472.7 L1092.5 470.5" fill="none" stroke="#1e76cc" stroke-width="1.12"/><path d="M1097.7 490.0 L1091.2 490.0" fill="none" stroke="#1e76cc" stroke-width="1.38"/><path d="M1097.7 484.5 L1092.7 484.5" fill="none" stroke="#1e76cc" stroke-width="1.38"/><path d="M1093.7 487.5 L1090.9 490.0" fill="none" stroke="#1e76cc" stroke-width="1.12"/><path d="M1095.2 482.3 L1092.5 484.5" fill="none" stroke="#1e76cc" stroke-width="1.12"/><path d="M1099.2 475.9 L1092.7 475.9" fill="none" stroke="#1e76cc" stroke-width="2.24"/><path d="M1099.7 480.9 L1092.2 480.9" fill="none" stroke="#1e76cc" stroke-width="1.55"/><path d="M996.5 471.5 Q991.5 477.5 996.5 484.5" fill="none" stroke="#1e76cc" stroke-width="2.2"/><path d="M1125.0 507.5 L1141.0 507.5" fill="none" stroke="#1e76cc" stroke-width="1.38"/><path d="M1125.0 515.0 L1141.0 515.0" fill="none" stroke="#1e76cc" stroke-width="1.38"/><path d="M1129.0 503.0 L1129.0 507.5" fill="none" stroke="#1e76cc" stroke-width="1.38"/><path d="M1129.0 515.0 L1129.0 519.0" fill="none" stroke="#1e76cc" stroke-width="1.38"/><path d="M1137.0 501.0 L1137.0 507.5" fill="none" stroke="#1e76cc" stroke-width="1.38"/><path d="M1137.0 515.0 L1137.0 521.0" fill="none" stroke="#1e76cc" stroke-width="1.38"/><path d="M1134.5 500.0 L1137.0 503.0 L1139.5 500.0" fill="none" stroke="#1e76cc" stroke-width="1.20"/><path d="M1134.5 522.0 L1137.0 519.0 L1139.5 522.0" fill="none" stroke="#1e76cc" stroke-width="1.20"/><path d="M1126.5 503.0 L1131.5 503.0" fill="none" stroke="#1e76cc" stroke-width="1.20"/><path d="M1126.5 519.0 L1131.5 519.0" fill="none" stroke="#1e76cc" stroke-width="1.20"/><rect x="1126.0" y="509.5" width="14.0" height="3.5" fill="#1e76cc" stroke="#1e76cc" stroke-width="0.43"/><path d="M995.0 458.7 L998.0 449.5 L1005.0 449.5" fill="none" stroke="#1e76cc" stroke-width="1.20"/><text x="0" y="0" text-anchor="start" fill="#111" style="font-size:5.5px;" textLength="10.8" lengthAdjust="spacing" transform="translate(997.5 447.5) scale(0.78 1)">Z1</text><path d="M1013.0 449.5 L1021.0 449.5 L1025.0 455.0 L1027.0 455.0" fill="none" stroke="#1e76cc" stroke-width="1.20"/><text x="0" y="0" text-anchor="start" fill="#111" style="font-size:5.5px;" textLength="10.8" lengthAdjust="spacing" transform="translate(1013.5 447.5) scale(0.78 1)">Z7</text><path d="M1045.0 450.5 L1053.0 450.5 L1056.0 461.0" fill="none" stroke="#1e76cc" stroke-width="1.20"/><text x="0" y="0" text-anchor="start" fill="#111" style="font-size:5.5px;" textLength="10.8" lengthAdjust="spacing" transform="translate(1045 449.5) scale(0.78 1)">Z6</text><path d="M1065.7 462.0 L1072.0 454.5 L1079.0 454.5" fill="none" stroke="#1e76cc" stroke-width="1.20"/><text x="0" y="0" text-anchor="start" fill="#111" style="font-size:5.5px;" textLength="10.8" lengthAdjust="spacing" transform="translate(1072 453.5) scale(0.78 1)">Z9</text><path d="M1085.0 448.5 L1094.0 448.5 L1097.7 457.0" fill="none" stroke="#1e76cc" stroke-width="1.20"/><text x="0" y="0" text-anchor="start" fill="#111" style="font-size:5.5px;" textLength="16.7" lengthAdjust="spacing" transform="translate(1084 447.5) scale(0.78 1)">Z10</text><path d="M995.0 547.0 L1000.0 555.5 L1007.0 555.5" fill="none" stroke="#1e76cc" stroke-width="1.20"/><text x="0" y="0" text-anchor="start" fill="#111" style="font-size:5.5px;" textLength="10.8" lengthAdjust="spacing" transform="translate(1000.5 554) scale(0.78 1)">Z2</text><path d="M1014.0 555.5 L1022.0 555.5 L1027.0 548.0" fill="none" stroke="#1e76cc" stroke-width="1.20"/><text x="0" y="0" text-anchor="start" fill="#111" style="font-size:5.5px;" textLength="10.8" lengthAdjust="spacing" transform="translate(1014 554) scale(0.78 1)">Z3</text><path d="M1041.0 555.5 L1049.0 555.5 L1056.0 547.0" fill="none" stroke="#1e76cc" stroke-width="1.20"/><text x="0" y="0" text-anchor="start" fill="#111" style="font-size:5.5px;" textLength="10.8" lengthAdjust="spacing" transform="translate(1041.5 554) scale(0.78 1)">Z4</text><path d="M1065.7 545.0 L1072.0 552.5 L1080.0 552.5" fill="none" stroke="#1e76cc" stroke-width="1.20"/><text x="0" y="0" text-anchor="start" fill="#111" style="font-size:5.5px;" textLength="10.8" lengthAdjust="spacing" transform="translate(1073 551) scale(0.78 1)">Z5</text><path d="M1085.0 541.0 L1093.0 541.0 L1097.7 534.0" fill="none" stroke="#1e76cc" stroke-width="1.20"/><text x="0" y="0" text-anchor="start" fill="#111" style="font-size:5.5px;" textLength="10.8" lengthAdjust="spacing" transform="translate(1085 540) scale(0.78 1)">Z8</text><path d="M1119.0 473.0 L1127.0 464.5 L1138.0 464.5" fill="none" stroke="#1e76cc" stroke-width="1.20"/><text x="0" y="0" text-anchor="start" fill="#111" style="font-size:5.5px;" textLength="15.4" lengthAdjust="spacing" transform="translate(1127 463.5) scale(0.78 1)">Z13</text><path d="M1119.0 540.5 L1127.0 549.5 L1138.0 549.5" fill="none" stroke="#1e76cc" stroke-width="1.20"/><text x="0" y="0" text-anchor="start" fill="#111" style="font-size:5.5px;" textLength="15.4" lengthAdjust="spacing" transform="translate(1127 548.5) scale(0.78 1)">Z15</text><text x="0" y="0" text-anchor="start" fill="#111" style="font-size:5.5px;" textLength="11.5" lengthAdjust="spacing" transform="translate(1003 507) scale(0.78 1)">C1</text><text x="0" y="0" text-anchor="start" fill="#111" style="font-size:5.5px;" textLength="11.5" lengthAdjust="spacing" transform="translate(1037 507) scale(0.78 1)">C2</text><text x="0" y="0" text-anchor="start" fill="#111" style="font-size:5.5px;" textLength="12.8" lengthAdjust="spacing" transform="translate(1075 507) scale(0.78 1)">C3</text><rect x="1146.6" y="383.7" width="52.4" height="119.3" fill="none" stroke="#1e76cc" stroke-width="1.89"/><path d="M1125.0 415.8 L1199.0 415.8" fill="none" stroke="#1e76cc" stroke-width="1.89"/><path d="M1146.6 447.0 L1199.0 447.0" fill="none" stroke="#1e76cc" stroke-width="1.89"/><path d="M1143.0 477.7 L1224.0 477.7" fill="none" stroke="#1e76cc" stroke-width="1.89"/><rect x="1199.0" y="466.5" width="20.7" height="23.2" fill="none" stroke="#1e76cc" stroke-width="1.72"/><path d="M1144.2 412.8 L1146.6 410.4 L1149.0 412.8 L1146.6 415.2Z" fill="#1e76cc"/><path d="M1144.2 418.8 L1146.6 416.4 L1149.0 418.8 L1146.6 421.2Z" fill="#1e76cc"/><circle cx="1146.6" cy="412.8" r="0.8" fill="#fff"/><circle cx="1146.6" cy="418.8" r="0.8" fill="#fff"/><path d="M1196.6 412.8 L1199.0 410.4 L1201.4 412.8 L1199.0 415.2Z" fill="#1e76cc"/><path d="M1196.6 418.8 L1199.0 416.4 L1201.4 418.8 L1199.0 421.2Z" fill="#1e76cc"/><circle cx="1199" cy="412.8" r="0.8" fill="#fff"/><circle cx="1199" cy="418.8" r="0.8" fill="#fff"/><path d="M1196.6 444.0 L1199.0 441.6 L1201.4 444.0 L1199.0 446.4Z" fill="#1e76cc"/><path d="M1196.6 450.0 L1199.0 447.6 L1201.4 450.0 L1199.0 452.4Z" fill="#1e76cc"/><circle cx="1199" cy="444" r="0.8" fill="#fff"/><circle cx="1199" cy="450" r="0.8" fill="#fff"/><path d="M1217.3 474.7 L1219.7 472.3 L1222.1 474.7 L1219.7 477.1Z" fill="#1e76cc"/><path d="M1217.3 480.7 L1219.7 478.3 L1222.1 480.7 L1219.7 483.1Z" fill="#1e76cc"/><circle cx="1219.7" cy="474.7" r="0.8" fill="#fff"/><circle cx="1219.7" cy="480.7" r="0.8" fill="#fff"/><ellipse cx="1146.6" cy="447" rx="2.6" ry="5.2" fill="#1e76cc"/><ellipse cx="1199" cy="477.7" rx="2.6" ry="5.2" fill="#1e76cc"/><ellipse cx="1199" cy="415.8" rx="2.6" ry="5.2" fill="#1e76cc"/><path d="M1160.7 431.6 L1160.7 471.0" fill="none" stroke="#1e76cc" stroke-width="1.55"/><path d="M1157.9 431.6 L1163.5 431.6" fill="none" stroke="#1e76cc" stroke-width="1.39"/><path d="M1157.9 471.0 L1163.5 471.0" fill="none" stroke="#1e76cc" stroke-width="1.39"/><path d="M1158.0 463.0 L1167.0 463.0" fill="none" stroke="#1e76cc" stroke-width="1.38"/><path d="M1189.4 396.4 L1189.4 498.0" fill="none" stroke="#1e76cc" stroke-width="1.55"/><path d="M1186.8 396.4 L1192.0 396.4" fill="none" stroke="#1e76cc" stroke-width="1.39"/><path d="M1186.8 498.0 L1192.0 498.0" fill="none" stroke="#1e76cc" stroke-width="1.39"/><path d="M1186.0 412.5 L1192.5 412.5" fill="none" stroke="#1e76cc" stroke-width="1.55"/><path d="M1186.0 419.0 L1192.5 419.0" fill="none" stroke="#1e76cc" stroke-width="1.55"/><path d="M1186.5 436.0 L1192.5 436.0" fill="none" stroke="#1e76cc" stroke-width="1.38"/><path d="M1186.5 459.0 L1192.5 459.0" fill="none" stroke="#1e76cc" stroke-width="1.38"/><rect x="1186.0" y="469.0" width="4.0" height="3.5" fill="#1e76cc" stroke="#1e76cc" stroke-width="0.43"/><rect x="1186.0" y="484.0" width="4.0" height="3.5" fill="#1e76cc" stroke="#1e76cc" stroke-width="0.43"/><path d="M1177.5 396.0 L1177.5 412.5" fill="none" stroke="#1e76cc" stroke-width="1.55"/><path d="M1177.5 419.0 L1177.5 436.0" fill="none" stroke="#1e76cc" stroke-width="1.55"/><path d="M1174.0 412.5 L1181.0 412.5" fill="none" stroke="#1e76cc" stroke-width="1.55"/><path d="M1174.0 419.0 L1181.0 419.0" fill="none" stroke="#1e76cc" stroke-width="1.55"/><path d="M1175.0 396.0 L1177.5 399.0 L1180.0 396.0" fill="none" stroke="#1e76cc" stroke-width="1.20"/><path d="M1177.5 405.0 L1184.0 405.0 L1184.0 408.0" fill="none" stroke="#1e76cc" stroke-width="1.20"/><path d="M1177.5 426.0 L1184.0 426.0 L1184.0 423.0" fill="none" stroke="#1e76cc" stroke-width="1.20"/><path d="M1175.0 436.0 L1180.0 436.0" fill="none" stroke="#1e76cc" stroke-width="1.20"/><rect x="1147.0" y="467.0" width="12.0" height="5.5" fill="none" stroke="#1e76cc" stroke-width="1.20"/><rect x="1147.0" y="483.0" width="12.0" height="5.5" fill="none" stroke="#1e76cc" stroke-width="1.20"/><path d="M1147.0 471.0 L1150.0 468.0 L1153.0 471.0 L1156.0 468.0 L1159.0 471.0" fill="none" stroke="#1e76cc" stroke-width="1.03"/><path d="M1147.0 484.5 L1150.0 487.5 L1153.0 484.5 L1156.0 487.5 L1159.0 484.5" fill="none" stroke="#1e76cc" stroke-width="1.03"/><path d="M1159.0 467.0 L1163.0 472.0 L1166.0 472.0" fill="none" stroke="#1e76cc" stroke-width="1.20"/><path d="M1159.0 488.5 L1163.0 483.5 L1166.0 483.5" fill="none" stroke="#1e76cc" stroke-width="1.20"/><path d="M1176.0 467.0 L1176.0 489.0" fill="none" stroke="#1e76cc" stroke-width="2.06"/><path d="M1171 473 L1176 470 L1181 473 L1181 476 L1171 476Z M1171 479.5 H1181 V482.5 L1176 485.5 L1171 482.5Z" fill="#1e76cc"/><path d="M1173.0 467.0 L1176.0 470.0 L1179.0 467.0" fill="none" stroke="#1e76cc" stroke-width="1.20"/><path d="M1173.0 489.0 L1176.0 486.0 L1179.0 489.0" fill="none" stroke="#1e76cc" stroke-width="1.20"/><circle cx="1231.7" cy="477.7" r="8.0" fill="none" stroke="#1e76cc" stroke-width="1.55"/><path d="M1227 470.8 Q1231.7 468.5 1236.4 470.8 M1227 484.6 Q1231.7 487 1236.4 484.6" fill="none" stroke="#1e76cc" stroke-width="2.1"/><path d="M1218.6 474.7 L1221.0 472.3 L1223.4 474.7 L1221.0 477.1Z" fill="#1e76cc"/><path d="M1218.6 480.7 L1221.0 478.3 L1223.4 480.7 L1221.0 483.1Z" fill="#1e76cc"/><circle cx="1221" cy="474.7" r="0.8" fill="#fff"/><circle cx="1221" cy="480.7" r="0.8" fill="#fff"/><path d="M1239.7 477.7 L1340.0 477.7" fill="none" stroke="#1e76cc" stroke-width="1.72"/><path d="M1308.5 474 H1298 V481.5 H1308.5" fill="none" stroke="#1e76cc" stroke-width="1.8"/><path d="M1189.4 430.0 L1205.0 437.5 L1218.0 437.5" fill="none" stroke="#1e76cc" stroke-width="1.20"/><text x="0" y="0" text-anchor="start" fill="#111" style="font-size:5.5px;" textLength="16.7" lengthAdjust="spacing" transform="translate(1206 436) scale(0.78 1)">Z12</text><path d="M1190.0 452.0 L1203.0 456.5 L1217.0 456.5" fill="none" stroke="#1e76cc" stroke-width="1.20"/><text x="0" y="0" text-anchor="start" fill="#111" style="font-size:5.5px;" textLength="16.7" lengthAdjust="spacing" transform="translate(1205 455.5) scale(0.78 1)">Z14</text><path d="M1160.7 451.0 L1166.0 459.5 L1178.0 459.5" fill="none" stroke="#1e76cc" stroke-width="1.20"/><text x="0" y="0" text-anchor="start" fill="#111" style="font-size:5.5px;" textLength="16.7" lengthAdjust="spacing" transform="translate(1166 458) scale(0.78 1)">Z13</text><path d="M1189.4 482.0 L1205.0 501.0 L1217.0 501.0" fill="none" stroke="#1e76cc" stroke-width="1.20"/><text x="0" y="0" text-anchor="start" fill="#111" style="font-size:5.5px;" textLength="16.7" lengthAdjust="spacing" transform="translate(1205 499.5) scale(0.78 1)">Z12</text><path d="M1159.0 493.0 L1170.0 511.5 L1182.0 511.5" fill="none" stroke="#1e76cc" stroke-width="1.20"/><text x="0" y="0" text-anchor="start" fill="#111" style="font-size:5.5px;" textLength="15.4" lengthAdjust="spacing" transform="translate(1171 509.5) scale(0.78 1)">Z11</text><path d="M1195.0 503.0 L1207.0 515.0 L1215.0 515.0" fill="none" stroke="#1e76cc" stroke-width="1.20"/><text x="0" y="0" text-anchor="start" fill="#111" style="font-size:5.5px;" textLength="3.8" lengthAdjust="spacing" transform="translate(1208 513.5) scale(0.78 1)">4</text><path d="M1143.0 543.0 L1152.0 550.5 L1166.0 550.5" fill="none" stroke="#1e76cc" stroke-width="1.20"/><text x="0" y="0" text-anchor="start" fill="#111" style="font-size:5.5px;" textLength="3.8" lengthAdjust="spacing" transform="translate(1155 549) scale(0.78 1)">3</text><text x="0" y="0" text-anchor="start" fill="#111" style="font-size:5.5px;" textLength="10.3" lengthAdjust="spacing" transform="translate(1170 499) scale(0.78 1)">3М</text><circle cx="1357.3" cy="307.4" r="10.3" fill="none" stroke="#1e76cc" stroke-width="1.55"/><circle cx="1462.7" cy="307.4" r="10.3" fill="none" stroke="#1e76cc" stroke-width="1.55"/><path d="M1368.3 307.4 L1400.0 307.4" fill="none" stroke="#1e76cc" stroke-width="1.55"/><path d="M1418.5 307.4 L1451.7 307.4" fill="none" stroke="#1e76cc" stroke-width="1.55"/><path d="M1394.3 302.7 L1425.3 302.7" fill="none" stroke="#1e76cc" stroke-width="1.72"/><path d="M1394.3 301.2 L1394.3 304.2" fill="none" stroke="#1e76cc" stroke-width="2.06"/><path d="M1425.3 301.2 L1425.3 304.2" fill="none" stroke="#1e76cc" stroke-width="2.06"/><path d="M1396.7 302.7 L1396.7 327.4" fill="none" stroke="#1e76cc" stroke-width="1.72"/><path d="M1423.0 302.7 L1423.0 327.4" fill="none" stroke="#1e76cc" stroke-width="1.72"/><path d="M1406.5 312.4 L1406.5 328.4 L1402.0 328.4" fill="none" stroke="#1e76cc" stroke-width="1.38"/><path d="M1413.5 312.4 L1413.5 328.4 L1418.0 328.4" fill="none" stroke="#1e76cc" stroke-width="1.38"/><path d="M1398.0 310.4 L1405.0 317.4 L1398.0 325.4" fill="none" stroke="#1e76cc" stroke-width="1.20"/><path d="M1422.0 310.4 L1415.0 317.4 L1422.0 325.4" fill="none" stroke="#1e76cc" stroke-width="1.20"/><path d="M1400.6 313.4 L1403.0 311.0 L1405.4 313.4 L1403.0 315.8Z" fill="#1e76cc"/><path d="M1400.6 322.4 L1403.0 320.0 L1405.4 322.4 L1403.0 324.8Z" fill="#1e76cc"/><path d="M1414.6 313.4 L1417.0 311.0 L1419.4 313.4 L1417.0 315.8Z" fill="#1e76cc"/><path d="M1414.6 322.4 L1417.0 320.0 L1419.4 322.4 L1417.0 324.8Z" fill="#1e76cc"/><circle cx="1357.3" cy="644.4" r="10.3" fill="none" stroke="#1e76cc" stroke-width="1.55"/><circle cx="1462.7" cy="644.4" r="10.3" fill="none" stroke="#1e76cc" stroke-width="1.55"/><path d="M1368.3 644.4 L1400.0 644.4" fill="none" stroke="#1e76cc" stroke-width="1.55"/><path d="M1418.5 644.4 L1451.7 644.4" fill="none" stroke="#1e76cc" stroke-width="1.55"/><path d="M1394.3 649.1 L1425.3 649.1" fill="none" stroke="#1e76cc" stroke-width="1.72"/><path d="M1394.3 650.6 L1394.3 647.6" fill="none" stroke="#1e76cc" stroke-width="2.06"/><path d="M1425.3 650.6 L1425.3 647.6" fill="none" stroke="#1e76cc" stroke-width="2.06"/><path d="M1396.7 649.1 L1396.7 624.4" fill="none" stroke="#1e76cc" stroke-width="1.72"/><path d="M1423.0 649.1 L1423.0 624.4" fill="none" stroke="#1e76cc" stroke-width="1.72"/><path d="M1406.5 639.4 L1406.5 623.4 L1402.0 623.4" fill="none" stroke="#1e76cc" stroke-width="1.38"/><path d="M1413.5 639.4 L1413.5 623.4 L1418.0 623.4" fill="none" stroke="#1e76cc" stroke-width="1.38"/><path d="M1398.0 641.4 L1405.0 634.4 L1398.0 626.4" fill="none" stroke="#1e76cc" stroke-width="1.20"/><path d="M1422.0 641.4 L1415.0 634.4 L1422.0 626.4" fill="none" stroke="#1e76cc" stroke-width="1.20"/><path d="M1400.6 638.4 L1403.0 636.0 L1405.4 638.4 L1403.0 640.8Z" fill="#1e76cc"/><path d="M1400.6 629.4 L1403.0 627.0 L1405.4 629.4 L1403.0 631.8Z" fill="#1e76cc"/><path d="M1414.6 638.4 L1417.0 636.0 L1419.4 638.4 L1417.0 640.8Z" fill="#1e76cc"/><path d="M1414.6 629.4 L1417.0 627.0 L1419.4 629.4 L1417.0 631.8Z" fill="#1e76cc"/><path d="M1410.0 303.0 L1410.0 468.3" fill="none" stroke="#1e76cc" stroke-width="1.89"/><path d="M1410.0 483.3 L1410.0 649.0" fill="none" stroke="#1e76cc" stroke-width="1.89"/><path d="M1402.0 328.0 L1401.5 350.0 L1400.0 352.0 L1400.0 434.0 L1399.5 436.7" fill="none" stroke="#1e76cc" stroke-width="1.72"/><path d="M1418.0 328.0 L1418.0 372.0 L1419.5 375.0 L1420.0 434.0 L1420.5 436.7" fill="none" stroke="#1e76cc" stroke-width="1.72"/><path d="M1399.5 513.0 L1400.0 516.0 L1400.0 600.0 L1401.5 602.0 L1402.0 624.0" fill="none" stroke="#1e76cc" stroke-width="1.72"/><path d="M1420.5 513.0 L1420.0 516.0 L1419.5 580.0 L1418.0 583.0 L1418.0 624.0" fill="none" stroke="#1e76cc" stroke-width="1.72"/><path d="M1399.5 436.7 Q1399 439 1395 440.5 A38 38 0 0 0 1375.5 459 M1375.1 490 A38 38 0 0 0 1395 509.5 Q1399 511 1399.5 513" fill="none" stroke="#1e76cc" stroke-width="1.75"/><path d="M1420.5 436.7 Q1421 439 1425 440.5 A38 38 0 0 1 1425 509.5 Q1421 511 1420.5 513" fill="none" stroke="#1e76cc" stroke-width="1.75"/><path d="M1406.0 455.8 L1406.0 462.8 L1391.0 462.8 L1391.0 488.3" fill="none" stroke="#1e76cc" stroke-width="1.72"/><path d="M1383.0 488.3 L1406.0 488.3 L1406.0 495.8" fill="none" stroke="#1e76cc" stroke-width="1.72"/><path d="M1414.0 455.8 L1414.0 462.8 L1428.3 462.8 L1428.3 488.3" fill="none" stroke="#1e76cc" stroke-width="1.72"/><path d="M1435.0 488.3 L1414.0 488.3 L1414.0 495.8" fill="none" stroke="#1e76cc" stroke-width="1.72"/><rect x="1396.7" y="468.3" width="26.1" height="15.0" fill="none" stroke="#1e76cc" stroke-width="1.89"/><path d="M1391.0 476.1 L1428.3 476.1" fill="none" stroke="#1e76cc" stroke-width="1.55"/><path d="M1393.5 476.1 L1397 473.1 V479.1Z M1426 476.1 L1422.5 473.1 V479.1Z" fill="#1e76cc"/><circle cx="1397.5" cy="476.1" r="2.6" fill="#1e76cc"/><circle cx="1422.3" cy="476.1" r="2.6" fill="#1e76cc"/><path d="M1399.6 454.3 L1402.0 451.9 L1404.4 454.3 L1402.0 456.7Z" fill="#1e76cc"/><path d="M1397.7 452.0 L1399.7 450.0 L1401.7 452.0 L1399.7 454.0Z" fill="#1e76cc"/><path d="M1402.5 458.8 L1398.5 457.8" fill="none" stroke="#1e76cc" stroke-width="1.20"/><path d="M1405.5 452.8 L1401.5 449.3" fill="none" stroke="#1e76cc" stroke-width="1.20"/><path d="M1399.6 497.3 L1402.0 494.9 L1404.4 497.3 L1402.0 499.7Z" fill="#1e76cc"/><path d="M1397.7 499.6 L1399.7 497.6 L1401.7 499.6 L1399.7 501.6Z" fill="#1e76cc"/><path d="M1402.5 492.8 L1398.5 493.8" fill="none" stroke="#1e76cc" stroke-width="1.20"/><path d="M1405.5 498.8 L1401.5 502.3" fill="none" stroke="#1e76cc" stroke-width="1.20"/><path d="M1415.6 454.3 L1418.0 451.9 L1420.4 454.3 L1418.0 456.7Z" fill="#1e76cc"/><path d="M1418.3 452.0 L1420.3 450.0 L1422.3 452.0 L1420.3 454.0Z" fill="#1e76cc"/><path d="M1417.5 458.8 L1421.5 457.8" fill="none" stroke="#1e76cc" stroke-width="1.20"/><path d="M1414.5 452.8 L1418.5 449.3" fill="none" stroke="#1e76cc" stroke-width="1.20"/><path d="M1415.6 497.3 L1418.0 494.9 L1420.4 497.3 L1418.0 499.7Z" fill="#1e76cc"/><path d="M1418.3 499.6 L1420.3 497.6 L1422.3 499.6 L1420.3 501.6Z" fill="#1e76cc"/><path d="M1417.5 492.8 L1421.5 493.8" fill="none" stroke="#1e76cc" stroke-width="1.20"/><path d="M1414.5 498.8 L1418.5 502.3" fill="none" stroke="#1e76cc" stroke-width="1.20"/><path d="M1384.2 464.4 L1384.2 488.3" fill="none" stroke="#1e76cc" stroke-width="1.72"/><path d="M1360.5 465.5 L1379.4 465.5" fill="none" stroke="#1e76cc" stroke-width="1.72"/><path d="M1360.5 489.0 L1379.4 489.0" fill="none" stroke="#1e76cc" stroke-width="1.72"/><path d="M1356.0 477.2 L1384.2 477.2" fill="none" stroke="#1e76cc" stroke-width="2.06"/><path d="M1370.4 471.6 L1373.0 469.0 L1375.6 471.6 L1373.0 474.2Z" fill="#1e76cc"/><path d="M1373.2 473.3 L1374.8 471.7 L1376.4 473.3 L1374.8 474.9Z" fill="#1e76cc"/><path d="M1369.6 473.3 L1371.2 471.7 L1372.8 473.3 L1371.2 474.9Z" fill="#1e76cc"/><path d="M1370.4 482.8 L1373.0 480.2 L1375.6 482.8 L1373.0 485.4Z" fill="#1e76cc"/><path d="M1373.2 481.1 L1374.8 479.5 L1376.4 481.1 L1374.8 482.7Z" fill="#1e76cc"/><path d="M1369.6 481.1 L1371.2 479.5 L1372.8 481.1 L1371.2 482.7Z" fill="#1e76cc"/><path d="M1361.4 471.6 L1364.0 469.0 L1366.6 471.6 L1364.0 474.2Z" fill="#1e76cc"/><path d="M1364.2 473.3 L1365.8 471.7 L1367.4 473.3 L1365.8 474.9Z" fill="#1e76cc"/><path d="M1360.6 473.3 L1362.2 471.7 L1363.8 473.3 L1362.2 474.9Z" fill="#1e76cc"/><path d="M1361.4 482.8 L1364.0 480.2 L1366.6 482.8 L1364.0 485.4Z" fill="#1e76cc"/><path d="M1364.2 481.1 L1365.8 479.5 L1367.4 481.1 L1365.8 482.7Z" fill="#1e76cc"/><path d="M1360.6 481.1 L1362.2 479.5 L1363.8 481.1 L1362.2 482.7Z" fill="#1e76cc"/><path d="M1435.0 488.3 L1438.5 491.8" fill="none" stroke="#1e76cc" stroke-width="1.20"/><circle cx="1348.3" cy="477.6" r="7.3" fill="none" stroke="#1e76cc" stroke-width="1.55"/><path d="M1343.8 471 Q1348.3 468.7 1352.8 471 M1343.8 484.2 Q1348.3 486.5 1352.8 484.2" fill="none" stroke="#1e76cc" stroke-width="2.1"/><path d="M1339 477.6 L1341.5 475.8 V479.4Z" fill="#1e76cc"/><path d="M1363.0 458.0 L1375.0 458.0 L1384.2 466.0" fill="none" stroke="#1e76cc" stroke-width="1.20"/><text x="0" y="0" text-anchor="start" fill="#111" style="font-size:5.5px;" textLength="16.7" lengthAdjust="spacing" transform="translate(1361 456.5) scale(0.78 1)">Z16</text><path d="M1432.0 479.5 L1442.0 479.5" fill="none" stroke="#1e76cc" stroke-width="1.20"/><path d="M1432.5 479.5 L1430.0 488.0" fill="none" stroke="#1e76cc" stroke-width="1.20"/><text x="0" y="0" text-anchor="start" fill="#111" style="font-size:5.5px;" textLength="15.4" lengthAdjust="spacing" transform="translate(1432.5 478) scale(0.78 1)">Z17</text><path d="M1351.7 520.0 L1364.4 520.0 L1379.4 500.5" fill="none" stroke="#1e76cc" stroke-width="1.20"/><text x="0" y="0" text-anchor="start" fill="#111" style="font-size:5.5px;" textLength="3.8" lengthAdjust="spacing" transform="translate(1353.5 518.5) scale(0.78 1)">6</text><rect x="942.5" y="635.8" width="233.9" height="219.8" fill="none" stroke="#1e76cc" stroke-width="1.89"/><path d="M990.6 635.8 L990.6 855.6" fill="none" stroke="#1e76cc" stroke-width="1.72"/><path d="M1107.8 635.8 L1107.8 855.6" fill="none" stroke="#1e76cc" stroke-width="1.72"/><path d="M942.5 665.3 L1176.4 665.3" fill="none" stroke="#1e76cc" stroke-width="1.72"/><path d="M942.5 684.3 L1176.4 684.3" fill="none" stroke="#1e76cc" stroke-width="1.72"/><path d="M942.5 703.4 L1176.4 703.4" fill="none" stroke="#1e76cc" stroke-width="1.72"/><path d="M942.5 722.4 L1176.4 722.4" fill="none" stroke="#1e76cc" stroke-width="1.72"/><path d="M942.5 741.4 L1176.4 741.4" fill="none" stroke="#1e76cc" stroke-width="1.72"/><path d="M942.5 760.4 L1176.4 760.4" fill="none" stroke="#1e76cc" stroke-width="1.72"/><path d="M942.5 779.5 L1176.4 779.5" fill="none" stroke="#1e76cc" stroke-width="1.72"/><path d="M942.5 798.5 L1176.4 798.5" fill="none" stroke="#1e76cc" stroke-width="1.72"/><path d="M942.5 817.5 L1176.4 817.5" fill="none" stroke="#1e76cc" stroke-width="1.72"/><path d="M942.5 836.6 L1176.4 836.6" fill="none" stroke="#1e76cc" stroke-width="1.72"/><text x="0" y="0" text-anchor="start" fill="#111" style="font-size:4.5px;" textLength="51.3" lengthAdjust="spacing" transform="translate(944 656.5) scale(0.78 1)">Передача</text><text x="0" y="0" text-anchor="start" fill="#111" style="font-size:4.5px;" textLength="142.3" lengthAdjust="spacing" transform="translate(992 656) scale(0.78 1)">Шестерни в зацеплении.</text><text x="0" y="0" text-anchor="start" fill="#111" style="font-size:4.5px;" textLength="79.5" lengthAdjust="spacing" transform="translate(1110 646.5) scale(0.78 1)">Передаточное</text><text x="0" y="0" text-anchor="start" fill="#111" style="font-size:4.5px;" textLength="71.8" lengthAdjust="spacing" transform="translate(1110 655.5) scale(0.78 1)">отношение.</text><text x="0" y="0" text-anchor="start" fill="#111" style="font-size:12px;font-style:italic;" textLength="3.8" lengthAdjust="spacing" transform="translate(954 680.5) scale(0.78 1)">I</text><text x="0" y="0" text-anchor="start" fill="#111" style="font-size:12.5px;font-style:italic;" textLength="48.7" lengthAdjust="spacing" transform="translate(1116 680.5) scale(0.78 1)">17,464</text><text x="0" y="0" text-anchor="start" fill="#111" style="font-size:4.2px;" textLength="42.3" lengthAdjust="spacing" transform="translate(998 673.0999999999999) scale(0.78 1)">Z13 Z3 Z17</text><text x="0" y="0" text-anchor="start" fill="#111" style="font-size:4.2px;" textLength="42.3" lengthAdjust="spacing" transform="translate(998 679.9) scale(0.78 1)">Z12 Z2 Z11</text><path d="M998.0 674.7 L1006.0 674.7" fill="none" stroke="#1e76cc" stroke-width="1.20"/><path d="M1014.0 674.7 L1026.0 674.7" fill="none" stroke="#1e76cc" stroke-width="1.20"/><path d="M1035.0 674.7 L1046.0 674.7" fill="none" stroke="#1e76cc" stroke-width="1.38"/><text x="0" y="0" text-anchor="start" fill="#111" style="font-size:4.2px;" textLength="21.8" lengthAdjust="spacing" transform="translate(1053 677.3) scale(0.78 1)">ЗЗ6М</text><text x="0" y="0" text-anchor="start" fill="#111" style="font-size:12px;font-style:italic;" textLength="9.0" lengthAdjust="spacing" transform="translate(954 699.53) scale(0.78 1)">II</text><text x="0" y="0" text-anchor="start" fill="#111" style="font-size:12.5px;font-style:italic;" textLength="41.0" lengthAdjust="spacing" transform="translate(1116 699.53) scale(0.78 1)">11,18</text><text x="0" y="0" text-anchor="start" fill="#111" style="font-size:4.2px;" textLength="42.3" lengthAdjust="spacing" transform="translate(998 692.1299999999999) scale(0.78 1)">Z13 Z3 Z17</text><text x="0" y="0" text-anchor="start" fill="#111" style="font-size:4.2px;" textLength="42.3" lengthAdjust="spacing" transform="translate(998 698.93) scale(0.78 1)">Z12 Z5 Z11</text><path d="M998.0 693.7 L1006.0 693.7" fill="none" stroke="#1e76cc" stroke-width="1.20"/><path d="M1014.0 693.7 L1026.0 693.7" fill="none" stroke="#1e76cc" stroke-width="1.20"/><path d="M1035.0 693.7 L1046.0 693.7" fill="none" stroke="#1e76cc" stroke-width="1.38"/><text x="0" y="0" text-anchor="start" fill="#111" style="font-size:4.2px;" textLength="21.8" lengthAdjust="spacing" transform="translate(1053 696.3299999999999) scale(0.78 1)">ЗЗ6М</text><text x="0" y="0" text-anchor="start" fill="#111" style="font-size:12px;font-style:italic;" textLength="14.1" lengthAdjust="spacing" transform="translate(954 718.56) scale(0.78 1)">III</text><text x="0" y="0" text-anchor="start" fill="#111" style="font-size:12.5px;font-style:italic;" textLength="41.0" lengthAdjust="spacing" transform="translate(1116 718.56) scale(0.78 1)">7,207</text><text x="0" y="0" text-anchor="start" fill="#111" style="font-size:4.2px;" textLength="42.3" lengthAdjust="spacing" transform="translate(998 711.1599999999999) scale(0.78 1)">Z13 Z7 Z17</text><text x="0" y="0" text-anchor="start" fill="#111" style="font-size:4.2px;" textLength="42.3" lengthAdjust="spacing" transform="translate(998 717.9599999999999) scale(0.78 1)">Z12 Z3 Z11</text><path d="M998.0 712.8 L1006.0 712.8" fill="none" stroke="#1e76cc" stroke-width="1.20"/><path d="M1014.0 712.8 L1026.0 712.8" fill="none" stroke="#1e76cc" stroke-width="1.20"/><path d="M1035.0 712.8 L1046.0 712.8" fill="none" stroke="#1e76cc" stroke-width="1.38"/><text x="0" y="0" text-anchor="start" fill="#111" style="font-size:4.2px;" textLength="21.8" lengthAdjust="spacing" transform="translate(1053 715.3599999999999) scale(0.78 1)">З16М</text><text x="0" y="0" text-anchor="start" fill="#111" style="font-size:12px;font-style:italic;" textLength="15.4" lengthAdjust="spacing" transform="translate(953 737.59) scale(0.78 1)">IV</text><text x="0" y="0" text-anchor="start" fill="#111" style="font-size:12.5px;font-style:italic;" textLength="32.1" lengthAdjust="spacing" transform="translate(1118 737.59) scale(0.78 1)">4,62</text><text x="0" y="0" text-anchor="start" fill="#111" style="font-size:4.2px;" textLength="10.3" lengthAdjust="spacing" transform="translate(998 730.1899999999999) scale(0.78 1)">Z17</text><text x="0" y="0" text-anchor="start" fill="#111" style="font-size:4.2px;" textLength="10.3" lengthAdjust="spacing" transform="translate(998 736.99) scale(0.78 1)">Z16</text><path d="M998.0 731.8 L1006.0 731.8" fill="none" stroke="#1e76cc" stroke-width="1.20"/><text x="0" y="0" text-anchor="start" fill="#111" style="font-size:4.2px;" textLength="23.1" lengthAdjust="spacing" transform="translate(1017 734.39) scale(0.78 1)">С16М</text><text x="0" y="0" text-anchor="start" fill="#111" style="font-size:12px;font-style:italic;" textLength="10.3" lengthAdjust="spacing" transform="translate(951 756.62) scale(0.78 1)">V</text><text x="0" y="0" text-anchor="start" fill="#111" style="font-size:12.5px;font-style:italic;" textLength="42.3" lengthAdjust="spacing" transform="translate(1117 756.62) scale(0.78 1)">3,973</text><text x="0" y="0" text-anchor="start" fill="#111" style="font-size:4.2px;" textLength="42.3" lengthAdjust="spacing" transform="translate(998 749.2199999999999) scale(0.78 1)">Z13 Z1 Z17</text><text x="0" y="0" text-anchor="start" fill="#111" style="font-size:4.2px;" textLength="42.3" lengthAdjust="spacing" transform="translate(998 756.02) scale(0.78 1)">Z12 Z4 Z11</text><path d="M998.0 750.8 L1006.0 750.8" fill="none" stroke="#1e76cc" stroke-width="1.20"/><path d="M1014.0 750.8 L1026.0 750.8" fill="none" stroke="#1e76cc" stroke-width="1.20"/><path d="M1035.0 750.8 L1046.0 750.8" fill="none" stroke="#1e76cc" stroke-width="1.38"/><text x="0" y="0" text-anchor="start" fill="#111" style="font-size:4.2px;" textLength="21.8" lengthAdjust="spacing" transform="translate(1053 753.42) scale(0.78 1)">З26М</text><text x="0" y="0" text-anchor="start" fill="#111" style="font-size:12px;font-style:italic;" textLength="19.2" lengthAdjust="spacing" transform="translate(954 775.65) scale(0.78 1)">ЗХ</text><text x="0" y="0" text-anchor="start" fill="#111" style="font-size:12.5px;font-style:italic;" textLength="48.7" lengthAdjust="spacing" transform="translate(1116 775.65) scale(0.78 1)">19,034</text><text x="0" y="0" text-anchor="start" fill="#111" style="font-size:4.2px;" textLength="42.3" lengthAdjust="spacing" transform="translate(998 768.2499999999999) scale(0.78 1)">Z13 Z3 Z17</text><text x="0" y="0" text-anchor="start" fill="#111" style="font-size:4.2px;" textLength="42.3" lengthAdjust="spacing" transform="translate(998 775.05) scale(0.78 1)">Z12 Z13 Z11</text><path d="M998.0 769.8 L1006.0 769.8" fill="none" stroke="#1e76cc" stroke-width="1.20"/><path d="M1014.0 769.8 L1026.0 769.8" fill="none" stroke="#1e76cc" stroke-width="1.20"/><path d="M1035.0 769.8 L1046.0 769.8" fill="none" stroke="#1e76cc" stroke-width="1.38"/><text x="0" y="0" text-anchor="start" fill="#111" style="font-size:4.2px;" textLength="9.0" lengthAdjust="spacing" transform="translate(1053 772.4499999999999) scale(0.78 1)">6М</text><text x="0" y="0" text-anchor="start" fill="#111" style="font-size:12px;font-style:italic;" textLength="12.8" lengthAdjust="spacing" transform="translate(954 794.6800000000001) scale(0.78 1)">Iн</text><text x="0" y="0" text-anchor="start" fill="#111" style="font-size:12.5px;font-style:italic;" textLength="50.0" lengthAdjust="spacing" transform="translate(1117 794.6800000000001) scale(0.78 1)">29,688</text><text x="0" y="0" text-anchor="start" fill="#111" style="font-size:4.2px;" textLength="76.9" lengthAdjust="spacing" transform="translate(998 787.28) scale(0.78 1)">Z13 Z3 Z13 Z13 Z17</text><text x="0" y="0" text-anchor="start" fill="#111" style="font-size:4.2px;" textLength="76.9" lengthAdjust="spacing" transform="translate(998 794.08) scale(0.78 1)">Z12 Z2 Z11 Z14 Z16</text><path d="M998.0 788.9 L1006.0 788.9" fill="none" stroke="#1e76cc" stroke-width="1.20"/><path d="M1014.0 788.9 L1026.0 788.9" fill="none" stroke="#1e76cc" stroke-width="1.20"/><path d="M1034.0 788.9 L1046.0 788.9" fill="none" stroke="#1e76cc" stroke-width="1.20"/><path d="M1051.0 788.9 L1062.0 788.9" fill="none" stroke="#1e76cc" stroke-width="1.20"/><path d="M1067.0 788.9 L1078.0 788.9" fill="none" stroke="#1e76cc" stroke-width="1.38"/><text x="0" y="0" text-anchor="start" fill="#111" style="font-size:4.2px;" textLength="20.5" lengthAdjust="spacing" transform="translate(1083 791.48) scale(0.78 1)">ЗЗ6М</text><text x="0" y="0" text-anchor="start" fill="#111" style="font-size:12px;font-style:italic;" textLength="17.9" lengthAdjust="spacing" transform="translate(954 813.71) scale(0.78 1)">IIн</text><text x="0" y="0" text-anchor="start" fill="#111" style="font-size:12.5px;font-style:italic;" textLength="50.0" lengthAdjust="spacing" transform="translate(1116 813.71) scale(0.78 1)">18,988</text><text x="0" y="0" text-anchor="start" fill="#111" style="font-size:4.2px;" textLength="76.9" lengthAdjust="spacing" transform="translate(998 806.31) scale(0.78 1)">Z13 Z3 Z13 Z13 Z17</text><text x="0" y="0" text-anchor="start" fill="#111" style="font-size:4.2px;" textLength="76.9" lengthAdjust="spacing" transform="translate(998 813.11) scale(0.78 1)">Z12 Z5 Z11 Z14 Z11</text><path d="M998.0 807.9 L1006.0 807.9" fill="none" stroke="#1e76cc" stroke-width="1.20"/><path d="M1014.0 807.9 L1026.0 807.9" fill="none" stroke="#1e76cc" stroke-width="1.20"/><path d="M1034.0 807.9 L1046.0 807.9" fill="none" stroke="#1e76cc" stroke-width="1.20"/><path d="M1051.0 807.9 L1062.0 807.9" fill="none" stroke="#1e76cc" stroke-width="1.20"/><path d="M1067.0 807.9 L1078.0 807.9" fill="none" stroke="#1e76cc" stroke-width="1.38"/><text x="0" y="0" text-anchor="start" fill="#111" style="font-size:4.2px;" textLength="20.5" lengthAdjust="spacing" transform="translate(1083 810.51) scale(0.78 1)">ЗЗ6М</text><text x="0" y="0" text-anchor="start" fill="#111" style="font-size:12px;font-style:italic;" textLength="23.1" lengthAdjust="spacing" transform="translate(954 832.74) scale(0.78 1)">IIIн</text><text x="0" y="0" text-anchor="start" fill="#111" style="font-size:12.5px;font-style:italic;" textLength="50.0" lengthAdjust="spacing" transform="translate(1116 832.74) scale(0.78 1)">12,243</text><text x="0" y="0" text-anchor="start" fill="#111" style="font-size:4.2px;" textLength="76.9" lengthAdjust="spacing" transform="translate(998 825.3399999999999) scale(0.78 1)">Z13 Z7 Z13 Z13 Z17</text><text x="0" y="0" text-anchor="start" fill="#111" style="font-size:4.2px;" textLength="76.9" lengthAdjust="spacing" transform="translate(998 832.14) scale(0.78 1)">Z12 Z3 Z11 Z14 Z11</text><path d="M998.0 826.9 L1006.0 826.9" fill="none" stroke="#1e76cc" stroke-width="1.20"/><path d="M1014.0 826.9 L1026.0 826.9" fill="none" stroke="#1e76cc" stroke-width="1.20"/><path d="M1034.0 826.9 L1046.0 826.9" fill="none" stroke="#1e76cc" stroke-width="1.20"/><path d="M1051.0 826.9 L1062.0 826.9" fill="none" stroke="#1e76cc" stroke-width="1.20"/><path d="M1067.0 826.9 L1078.0 826.9" fill="none" stroke="#1e76cc" stroke-width="1.38"/><text x="0" y="0" text-anchor="start" fill="#111" style="font-size:4.2px;" textLength="20.5" lengthAdjust="spacing" transform="translate(1083 829.54) scale(0.78 1)">З16М</text><text x="0" y="0" text-anchor="start" fill="#111" style="font-size:12px;font-style:italic;" textLength="29.5" lengthAdjust="spacing" transform="translate(954 851.77) scale(0.78 1)">ЗХн</text><text x="0" y="0" text-anchor="start" fill="#111" style="font-size:12.5px;font-style:italic;" textLength="50.0" lengthAdjust="spacing" transform="translate(1117 851.77) scale(0.78 1)">32,358</text><text x="0" y="0" text-anchor="start" fill="#111" style="font-size:4.2px;" textLength="76.9" lengthAdjust="spacing" transform="translate(998 844.3699999999999) scale(0.78 1)">Z13 Z3 Z13 Z13 Z17</text><text x="0" y="0" text-anchor="start" fill="#111" style="font-size:4.2px;" textLength="76.9" lengthAdjust="spacing" transform="translate(998 851.17) scale(0.78 1)">Z12 Z13 Z11 Z14 Z16</text><path d="M998.0 846.0 L1006.0 846.0" fill="none" stroke="#1e76cc" stroke-width="1.20"/><path d="M1014.0 846.0 L1026.0 846.0" fill="none" stroke="#1e76cc" stroke-width="1.20"/><path d="M1034.0 846.0 L1046.0 846.0" fill="none" stroke="#1e76cc" stroke-width="1.20"/><path d="M1051.0 846.0 L1062.0 846.0" fill="none" stroke="#1e76cc" stroke-width="1.20"/><path d="M1067.0 846.0 L1078.0 846.0" fill="none" stroke="#1e76cc" stroke-width="1.38"/><text x="0" y="0" text-anchor="start" fill="#111" style="font-size:4.2px;" textLength="10.3" lengthAdjust="spacing" transform="translate(1083 848.5699999999999) scale(0.78 1)">6М</text><rect x="1312.2" y="702.9" width="221.1" height="98.9" fill="none" stroke="#1e76cc" stroke-width="1.89"/><path d="M1338.2 702.9 L1338.2 801.8" fill="none" stroke="#1e76cc" stroke-width="1.72"/><path d="M1498.9 702.9 L1498.9 801.8" fill="none" stroke="#1e76cc" stroke-width="1.72"/><path d="M1312.2 726.7 L1533.3 726.7" fill="none" stroke="#1e76cc" stroke-width="1.72"/><path d="M1312.2 739.2 L1533.3 739.2" fill="none" stroke="#1e76cc" stroke-width="1.72"/><path d="M1312.2 751.7 L1533.3 751.7" fill="none" stroke="#1e76cc" stroke-width="1.72"/><path d="M1312.2 764.3 L1533.3 764.3" fill="none" stroke="#1e76cc" stroke-width="1.72"/><path d="M1312.2 776.8 L1533.3 776.8" fill="none" stroke="#1e76cc" stroke-width="1.72"/><path d="M1312.2 789.3 L1533.3 789.3" fill="none" stroke="#1e76cc" stroke-width="1.72"/><text x="0" y="0" text-anchor="start" fill="#111" style="font-size:13.5px;font-style:italic;" textLength="32.1" lengthAdjust="spacing" transform="translate(1312.5 721) scale(0.78 1)">Поз.</text><text x="0" y="0" text-anchor="start" fill="#111" style="font-size:13.5px;font-style:italic;" textLength="120.5" lengthAdjust="spacing" transform="translate(1365 721) scale(0.78 1)">Наименование.</text><text x="0" y="0" text-anchor="start" fill="#111" style="font-size:13.5px;font-style:italic;" textLength="33.3" lengthAdjust="spacing" transform="translate(1504.5 721) scale(0.78 1)">Кол.</text><text x="0" y="0" text-anchor="start" fill="#111" style="font-size:5px;font-style:italic;" textLength="3.8" lengthAdjust="spacing" transform="translate(1317.5 735.5) scale(0.78 1)">1</text><text x="0" y="0" text-anchor="start" fill="#111" style="font-size:5px;font-style:italic;" textLength="194.9" lengthAdjust="spacing" transform="translate(1342 735.5) scale(0.78 1)">Двигатель внутреннего сгорания</text><text x="0" y="0" text-anchor="start" fill="#111" style="font-size:5px;font-style:italic;" textLength="3.2" lengthAdjust="spacing" transform="translate(1510 735.5) scale(0.78 1)">1</text><text x="0" y="0" text-anchor="start" fill="#111" style="font-size:5px;font-style:italic;" textLength="3.8" lengthAdjust="spacing" transform="translate(1317.5 748.02) scale(0.78 1)">2</text><text x="0" y="0" text-anchor="start" fill="#111" style="font-size:5px;font-style:italic;" textLength="59.0" lengthAdjust="spacing" transform="translate(1344 748.02) scale(0.78 1)">Сцепление</text><text x="0" y="0" text-anchor="start" fill="#111" style="font-size:5px;font-style:italic;" textLength="3.2" lengthAdjust="spacing" transform="translate(1510 748.02) scale(0.78 1)">1</text><text x="0" y="0" text-anchor="start" fill="#111" style="font-size:5px;font-style:italic;" textLength="3.8" lengthAdjust="spacing" transform="translate(1317.5 760.54) scale(0.78 1)">3</text><text x="0" y="0" text-anchor="start" fill="#111" style="font-size:5px;font-style:italic;" textLength="93.6" lengthAdjust="spacing" transform="translate(1344 760.54) scale(0.78 1)">Коробка передач</text><text x="0" y="0" text-anchor="start" fill="#111" style="font-size:5px;font-style:italic;" textLength="3.2" lengthAdjust="spacing" transform="translate(1510 760.54) scale(0.78 1)">1</text><text x="0" y="0" text-anchor="start" fill="#111" style="font-size:5px;font-style:italic;" textLength="3.8" lengthAdjust="spacing" transform="translate(1317.5 773.06) scale(0.78 1)">4</text><text x="0" y="0" text-anchor="start" fill="#111" style="font-size:5px;font-style:italic;" textLength="120.5" lengthAdjust="spacing" transform="translate(1344 773.06) scale(0.78 1)">Раздаточная коробка</text><text x="0" y="0" text-anchor="start" fill="#111" style="font-size:5px;font-style:italic;" textLength="3.2" lengthAdjust="spacing" transform="translate(1510 773.06) scale(0.78 1)">1</text><text x="0" y="0" text-anchor="start" fill="#111" style="font-size:5px;font-style:italic;" textLength="3.8" lengthAdjust="spacing" transform="translate(1317.5 785.58) scale(0.78 1)">5</text><text x="0" y="0" text-anchor="start" fill="#111" style="font-size:5px;font-style:italic;" textLength="71.8" lengthAdjust="spacing" transform="translate(1344 785.58) scale(0.78 1)">Задний мост</text><text x="0" y="0" text-anchor="start" fill="#111" style="font-size:5px;font-style:italic;" textLength="3.2" lengthAdjust="spacing" transform="translate(1510 785.58) scale(0.78 1)">1</text><text x="0" y="0" text-anchor="start" fill="#111" style="font-size:5px;font-style:italic;" textLength="3.8" lengthAdjust="spacing" transform="translate(1317.5 798.1) scale(0.78 1)">6</text><text x="0" y="0" text-anchor="start" fill="#111" style="font-size:5px;font-style:italic;" textLength="85.9" lengthAdjust="spacing" transform="translate(1344 798.1) scale(0.78 1)">Передний мост</text><text x="0" y="0" text-anchor="start" fill="#111" style="font-size:5px;font-style:italic;" textLength="3.2" lengthAdjust="spacing" transform="translate(1510 798.1) scale(0.78 1)">1</text><rect x="1322.7" y="817.3" width="290.8" height="86.1" fill="none" stroke="#1e76cc" stroke-width="1.89"/><path d="M1333.6 817.3 L1333.6 856.4" fill="none" stroke="#1e76cc" stroke-width="1.72"/><path d="M1349.3 817.3 L1349.3 903.4" fill="none" stroke="#1e76cc" stroke-width="1.72"/><path d="M1385.2 817.3 L1385.2 903.4" fill="none" stroke="#1e76cc" stroke-width="1.72"/><path d="M1408.7 817.3 L1408.7 903.4" fill="none" stroke="#1e76cc" stroke-width="1.72"/><path d="M1424.3 817.3 L1424.3 903.4" fill="none" stroke="#1e76cc" stroke-width="1.89"/><path d="M1322.7 825.1 L1424.3 825.1" fill="none" stroke="#222" stroke-width="0.95"/><path d="M1322.7 832.9 L1424.3 832.9" fill="none" stroke="#222" stroke-width="0.95"/><path d="M1322.7 840.8 L1424.3 840.8" fill="none" stroke="#222" stroke-width="0.95"/><path d="M1322.7 848.6 L1424.3 848.6" fill="none" stroke="#1e76cc" stroke-width="1.72"/><path d="M1322.7 856.4 L1424.3 856.4" fill="none" stroke="#1e76cc" stroke-width="1.72"/><path d="M1322.7 864.2 L1424.3 864.2" fill="none" stroke="#222" stroke-width="0.95"/><path d="M1322.7 872.0 L1424.3 872.0" fill="none" stroke="#222" stroke-width="0.95"/><path d="M1322.7 879.8 L1424.3 879.8" fill="none" stroke="#222" stroke-width="0.95"/><path d="M1322.7 887.7 L1424.3 887.7" fill="none" stroke="#222" stroke-width="0.95"/><path d="M1322.7 895.5 L1424.3 895.5" fill="none" stroke="#222" stroke-width="0.95"/><path d="M1424.3 840.8 L1613.5 840.8" fill="none" stroke="#1e76cc" stroke-width="1.89"/><path d="M1424.3 879.8 L1613.5 879.8" fill="none" stroke="#1e76cc" stroke-width="1.89"/><path d="M1535.3 840.8 L1535.3 903.4" fill="none" stroke="#1e76cc" stroke-width="1.89"/><path d="M1535.3 848.6 L1613.5 848.6" fill="none" stroke="#1e76cc" stroke-width="1.72"/><path d="M1535.3 872.0 L1613.5 872.0" fill="none" stroke="#1e76cc" stroke-width="1.72"/><path d="M1558.8 840.8 L1558.8 872.0" fill="none" stroke="#1e76cc" stroke-width="1.72"/><path d="M1585.4 840.8 L1585.4 872.0" fill="none" stroke="#1e76cc" stroke-width="1.72"/><path d="M1543.1 848.6 L1543.1 872.0" fill="none" stroke="#222" stroke-width="0.95"/><path d="M1551.0 848.6 L1551.0 872.0" fill="none" stroke="#222" stroke-width="0.95"/><path d="M1566.6 872.0 L1566.6 879.8" fill="none" stroke="#1e76cc" stroke-width="1.72"/><text x="0" y="0" text-anchor="start" fill="#111" style="font-size:12px;" textLength="183.3" lengthAdjust="spacing" transform="translate(1446 835) scale(0.78 1)">УАЗ 31512М 05 008 К1</text><text x="0" y="0" text-anchor="start" fill="#111" style="font-size:12px;" textLength="50.0" lengthAdjust="spacing" transform="translate(1458 858) scale(0.78 1)">Схема</text><text x="0" y="0" text-anchor="start" fill="#111" style="font-size:12px;" textLength="100.0" lengthAdjust="spacing" transform="translate(1440 874.5) scale(0.78 1)">трансмиссии</text><text x="0" y="0" text-anchor="start" fill="#111" style="font-size:4.2px;font-style:italic;" textLength="10.3" lengthAdjust="spacing" transform="translate(1324 855) scale(0.78 1)">Изм</text><text x="0" y="0" text-anchor="start" fill="#111" style="font-size:4.2px;font-style:italic;" textLength="14.1" lengthAdjust="spacing" transform="translate(1335 855) scale(0.78 1)">Лист</text><text x="0" y="0" text-anchor="start" fill="#111" style="font-size:4.2px;font-style:italic;" textLength="30.8" lengthAdjust="spacing" transform="translate(1356 855) scale(0.78 1)">№ докум.</text><text x="0" y="0" text-anchor="start" fill="#111" style="font-size:4.2px;font-style:italic;" textLength="17.9" lengthAdjust="spacing" transform="translate(1390 855) scale(0.78 1)">Подп.</text><text x="0" y="0" text-anchor="start" fill="#111" style="font-size:4.2px;font-style:italic;" textLength="15.4" lengthAdjust="spacing" transform="translate(1410 855) scale(0.78 1)">Дата</text><text x="0" y="0" text-anchor="start" fill="#111" style="font-size:4.2px;font-style:italic;" textLength="24.4" lengthAdjust="spacing" transform="translate(1324 862) scale(0.78 1)">Разраб.</text><text x="0" y="0" text-anchor="start" fill="#111" style="font-size:4.2px;font-style:italic;" textLength="42.3" lengthAdjust="spacing" transform="translate(1351 862) scale(0.78 1)">Кириллов Д.А.</text><text x="0" y="0" text-anchor="start" fill="#111" style="font-size:4.2px;font-style:italic;" textLength="15.4" lengthAdjust="spacing" transform="translate(1324 870) scale(0.78 1)">Пров.</text><text x="0" y="0" text-anchor="start" fill="#111" style="font-size:4.2px;font-style:italic;" textLength="42.3" lengthAdjust="spacing" transform="translate(1351 870) scale(0.78 1)">Ткаченко И.В.</text><text x="0" y="0" text-anchor="start" fill="#111" style="font-size:4.2px;font-style:italic;" textLength="25.6" lengthAdjust="spacing" transform="translate(1324 878) scale(0.78 1)">Т.контр.</text><text x="0" y="0" text-anchor="start" fill="#111" style="font-size:4.2px;font-style:italic;" textLength="25.6" lengthAdjust="spacing" transform="translate(1324 893.5) scale(0.78 1)">Н.контр.</text><text x="0" y="0" text-anchor="start" fill="#111" style="font-size:4.2px;font-style:italic;" textLength="11.5" lengthAdjust="spacing" transform="translate(1324 901) scale(0.78 1)">Утв.</text><text x="0" y="0" text-anchor="start" fill="#111" style="font-size:4.2px;font-style:italic;" textLength="15.4" lengthAdjust="spacing" transform="translate(1541 847) scale(0.78 1)">Лит.</text><text x="0" y="0" text-anchor="start" fill="#111" style="font-size:4.2px;font-style:italic;" textLength="19.2" lengthAdjust="spacing" transform="translate(1564 847) scale(0.78 1)">Масса</text><text x="0" y="0" text-anchor="start" fill="#111" style="font-size:4.2px;font-style:italic;" textLength="30.8" lengthAdjust="spacing" transform="translate(1587 847) scale(0.78 1)">Масштаб</text><text x="0" y="0" text-anchor="start" fill="#111" style="font-size:6px;font-style:italic;" textLength="9.0" lengthAdjust="spacing" transform="translate(1597 863) scale(0.78 1)">1:1</text><text x="0" y="0" text-anchor="start" fill="#111" style="font-size:4.2px;font-style:italic;" textLength="14.1" lengthAdjust="spacing" transform="translate(1537 878.5) scale(0.78 1)">Лист</text><text x="0" y="0" text-anchor="start" fill="#111" style="font-size:4.2px;font-style:italic;" textLength="25.6" lengthAdjust="spacing" transform="translate(1571 878.5) scale(0.78 1)">Листов 1</text><text x="0" y="0" text-anchor="start" fill="#111" style="font-size:4.2px;font-style:italic;" textLength="37.2" lengthAdjust="spacing" transform="translate(1560 887) scale(0.78 1)">ЮУрГУ НОЦ</text><text x="0" y="0" text-anchor="start" fill="#111" style="font-size:4.2px;font-style:italic;" textLength="52.6" lengthAdjust="spacing" transform="translate(1553 894) scale(0.78 1)">кафедра АТиСА</text><text x="0" y="0" text-anchor="start" fill="#111" style="font-size:4.2px;font-style:italic;" textLength="41.0" lengthAdjust="spacing" transform="translate(1557 900.5) scale(0.78 1)">АТ-543 гр</text><text x="0" y="0" text-anchor="start" fill="#111" style="font-size:4.2px;font-style:italic;" textLength="34.6" lengthAdjust="spacing" transform="translate(1443 908.5) scale(0.78 1)">Копировал</text><text x="0" y="0" text-anchor="start" fill="#111" style="font-size:4.2px;font-style:italic;" textLength="25.6" lengthAdjust="spacing" transform="translate(1553 908.5) scale(0.78 1)">Формат</text><text x="0" y="0" text-anchor="start" fill="#111" style="font-size:4.2px;font-style:italic;" textLength="9.0" lengthAdjust="spacing" transform="translate(1584 908.5) scale(0.78 1)">А2</text></svg>
<div class="a" style="left:0px;top:1030px;width:1920px;height:50px;background:#231f1d;"></div>
<div class="a" style="left:60px;top:1031px;width:429px;height:48px;background:#f2f2f2;"></div>
<svg class="a" style="left:20px;top:1045px;" width="21" height="21" viewBox="0 0 21 21"><path d="M0 3.2 L8.6 2 V9.9 H0Z M9.8 1.8 L21 0 V9.9 H9.8Z M0 11.1 H8.6 V19 L0 17.8Z M9.8 11.1 H21 V21 L9.8 19.2Z" fill="#fff"/></svg>
<svg class="a" style="left:74px;top:1044px;" width="22" height="22" viewBox="0 0 22 22"><circle cx="14" cy="8.5" r="6.3" fill="none" stroke="#222" stroke-width="1.6"/><path d="M9.5 13 L1.5 21" stroke="#222" stroke-width="1.8"/></svg>
<span class="a t " style="left:110px;top:1044.5px;font-size:18px;line-height:22px;color:#2b2b2b;letter-spacing:0.113px;">Введите здесь текст для поиска</span>
<svg class="a" style="left:508px;top:1044px;" width="24" height="22" viewBox="0 0 24 22"><g fill="none" stroke="#fff" stroke-width="1.4"><path d="M1 1H14M1 21H14"/><rect x="2" y="5" width="11" height="11"/><path d="M19.5 1V5M19.5 9V21"/></g><rect x="17.5" y="5.5" width="4" height="3" fill="#fff"/></svg>
<svg class="a" style="left:569px;top:1041px;" width="30" height="26" viewBox="0 0 30 26"><path d="M1 3 H11 L13 6 H29 V25 H1Z" fill="#f5c23e"/><path d="M1 8 H29 V25 H1Z" fill="#fbd867"/><rect x="6" y="14" width="18" height="11" fill="#3f93d8"/><rect x="9" y="18" width="12" height="7" fill="#fbd867"/><rect x="9" y="18" width="12" height="2.5" fill="#89c4f1"/></svg>
<svg class="a" style="left:631px;top:1040px;" width="30" height="30" viewBox="0 0 30 30"><rect x="0" y="0" width="30" height="30" rx="5" fill="#161616"/><path d="M6 23V7H9L21 19V7H24V23H21L9 11V23Z" fill="#8a8f94"/></svg>
<svg class="a" style="left:692px;top:1040px;" width="32" height="30" viewBox="0 0 32 30"><path d="M2 5 L15 1 L14 28 L2 27Z" fill="#e8882c"/><path d="M15 1 L30 3 L24 25 L14 28Z" fill="#c96a17"/><path d="M4 8 L13 5 M4 19 L12 20" stroke="#fbd38a" stroke-width="1.5"/><path d="M17 4 L26 6 L21 22" stroke="#f4a84a" stroke-width="2" fill="none"/></svg>
<svg class="a" style="left:755px;top:1040px;" width="30" height="30" viewBox="0 0 30 30"><circle cx="15" cy="15" r="15" fill="#fff"/><path d="M7.5 7.5 L15 16 L22.5 7.5 M15 16 V25" fill="none" stroke="#e5202a" stroke-width="3.2" stroke-linecap="round"/></svg>
<svg class="a" style="left:819px;top:1042px;" width="27" height="28" viewBox="0 0 27 28"><path d="M3 0 H24 Q27 0 27 3 V28 L21 22 H3 Q0 22 0 19 V3 Q0 0 3 0Z" fill="#7289da"/><path d="M6 15 Q6 8 9 6 Q13.5 5 18 6 Q21 8 21 15 Q19 17 17 17 L16 15.5 Q13.5 16.2 11 15.5 L10 17 Q8 17 6 15Z" fill="#fff"/><ellipse cx="10.8" cy="12" rx="1.6" ry="1.9" fill="#7289da"/><ellipse cx="16.2" cy="12" rx="1.6" ry="1.9" fill="#7289da"/></svg>
<div class="a" style="left:864px;top:1031px;width:60px;height:49px;background:#4b4643;"></div>
<svg class="a" style="left:879px;top:1040px;" width="31" height="31" viewBox="0 0 31 31"><rect x="0.8" y="0.8" width="29.4" height="29.4" fill="#15222c" stroke="#2e9fd6" stroke-width="1.6"/><circle cx="15.5" cy="15.5" r="10.5" fill="none" stroke="#2e9fd6" stroke-width="1.8"/><path d="M11 8 V23 M11 16 L19 8 M13 14 L23 24" stroke="#2e9fd6" stroke-width="1.8" fill="none"/></svg>
<div class="a" style="left:559px;top:1077px;width:40px;height:3px;background:#8fc4ea;"></div>
<div class="a" style="left:745px;top:1077px;width:51px;height:3px;background:#8fc4ea;"></div>
<div class="a" style="left:807px;top:1077px;width:51px;height:3px;background:#8fc4ea;"></div>
<div class="a" style="left:864px;top:1077px;width:60px;height:3px;background:#8fc4ea;"></div>
<div class="a" style="left:599px;top:1077px;width:10px;height:3px;background:#6f9bbd;"></div>
<svg class="a" style="left:1600px;top:1049px;" width="17" height="10" viewBox="0 0 17 10"><path d="M1 9 L8.5 1.5 L16 9" fill="none" stroke="#fff" stroke-width="1.4"/></svg>
<svg class="a" style="left:1628px;top:1046px;" width="21" height="18" viewBox="0 0 21 18"><g fill="none" stroke="#fff" stroke-width="1.2"><rect x="3.5" y="1.5" width="16" height="11"/><path d="M8 16.5 H15 M11.5 12.5 V16.5"/><rect x="0.8" y="2.5" width="3" height="4"/><path d="M2.3 6.5 V15.5 H6"/></g></svg>
<svg class="a" style="left:1657px;top:1046px;" width="22" height="18" viewBox="0 0 22 18"><g fill="none" stroke="#fff" stroke-width="1.2"><path d="M1 6 H4 L8 2 V16 L4 12 H1Z"/><path d="M10.5 6.5 Q12 9 10.5 11.5 M13.5 4.5 Q16.5 9 13.5 13.5 M16.5 2.5 Q21 9 16.5 15.5"/></g></svg>
<svg class="a" style="left:1692px;top:1044px;" width="24" height="22" viewBox="0 0 24 22"><g fill="none" stroke="#fff" stroke-width="1.3"><path d="M8 18 L6 13 L15 2 Q17 0.5 18.5 2 Q20 3.5 18.5 5.5 L10 16Z"/><path d="M6 12 Q0 14 2 18 Q4 21 8 18 M18 9 Q24 9 22 13 Q20 15 16 14"/></g></svg>
<span class="a t " style="left:1732px;top:1046.0px;font-size:15px;line-height:19px;color:#ffffff;letter-spacing:-1.010px;">РУС</span>
<span class="a t " style="left:1794px;top:1033.5px;font-size:15px;line-height:19px;color:#ffffff;letter-spacing:-0.709px;">12:10</span>
<span class="a t " style="left:1776px;top:1057.0px;font-size:15px;line-height:19px;color:#ffffff;letter-spacing:-0.509px;">31.10.2019</span>
<svg class="a" style="left:1868px;top:1044px;" width="22" height="20" viewBox="0 0 22 20"><path d="M0 0 H20 V15 H9 L5 19 V15 H0Z" fill="#fff"/><path d="M4 4.5H16M4 7.5H16M4 10.5H13" stroke="#231f1d" stroke-width="1"/></svg>
<svg class="a" style="left:1878px;top:1055px;" width="20" height="20" viewBox="0 0 20 20"><circle cx="10" cy="10" r="9" fill="#231f1d" stroke="#9a9a9a" stroke-width="1.3"/></svg>
<span class="a t " style="left:1884px;top:1056.5px;font-size:13px;line-height:17px;color:#ffffff;font-weight:bold;">2</span>
<div class="a" style="left:1914px;top:1030px;width:1px;height:50px;background:#6a6663;"></div>
</body></html>
